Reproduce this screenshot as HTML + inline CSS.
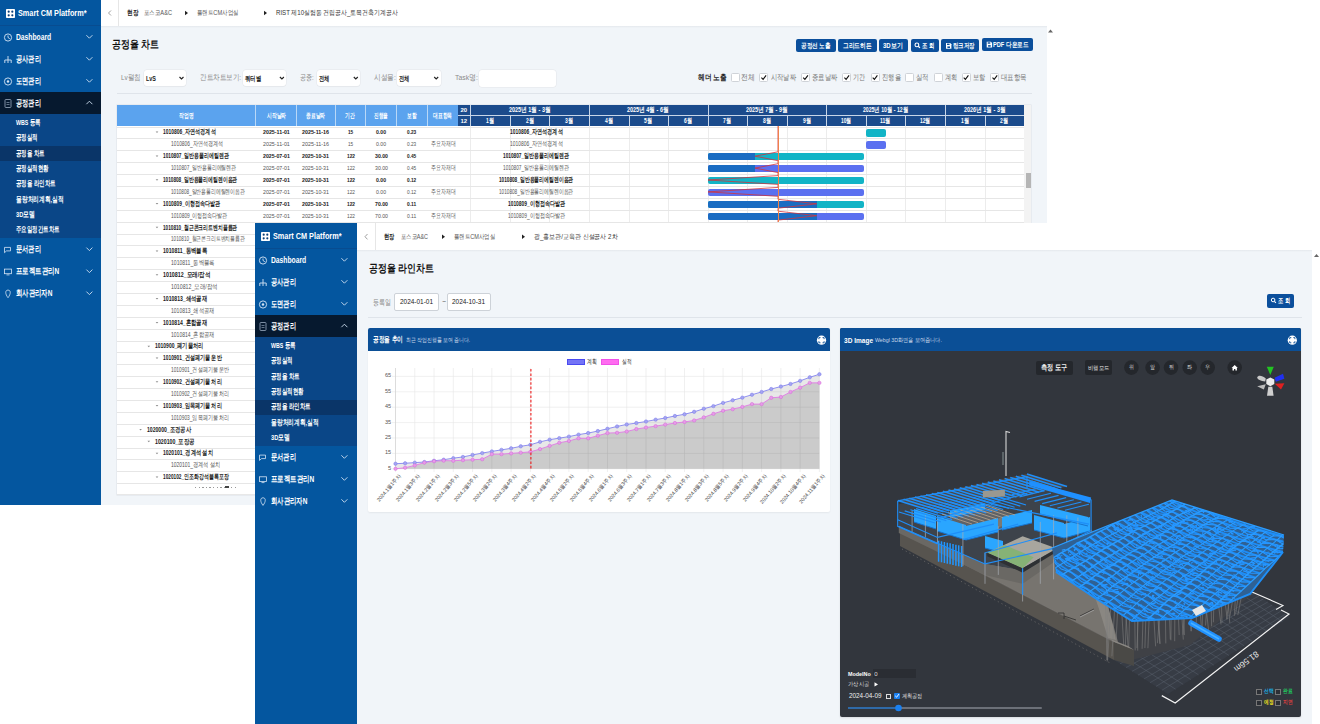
<!DOCTYPE html><html><head><meta charset="utf-8"><style>
*{margin:0;padding:0;box-sizing:border-box}
html,body{width:1320px;height:724px;overflow:hidden;background:#fff}
body{position:relative;font-family:"Liberation Sans",sans-serif;color:#222}
.a{position:absolute}
.t{position:absolute;white-space:nowrap;line-height:1;transform:translateY(-50%)}
svg{position:absolute;overflow:visible}
</style></head><body><div class="a" style="left:101px;top:26px;width:946px;height:479px;background:#f1f5f9"></div>
<div class="a" style="left:101px;top:0px;width:951px;height:26px;background:#fff"></div>
<div class="a" style="left:101px;top:26px;width:946px;height:1.5px;background:linear-gradient(#e4e8ed,#f1f5f9)"></div>
<svg style="left:0;top:0" width="1" height="1"><path d="M111,10.5 L108.5,13 L111,15.5" fill="none" stroke="#888" stroke-width="0.8"/></svg>
<div class="a" style="left:118px;top:0px;width:1px;height:26px;background:#e6e6e6"></div>
<div class="t" style="left:127.3px;top:13px;font-size:7.28px;font-weight:bold;color:#222;transform:translateY(-50%) scaleX(0.807);transform-origin:0 50%">현장</div>
<div class="t" style="left:144px;top:13px;font-size:7.28px;color:#555;transform:translateY(-50%) scaleX(0.779);transform-origin:0 50%">포스코A&amp;C</div>
<svg style="left:0;top:0" width="1" height="1"><path d="M185,10.8 L188,13 L185,15.2z" fill="#222"/></svg>
<div class="t" style="left:196.6px;top:13px;font-size:7.28px;color:#555;transform:translateY(-50%) scaleX(0.777);transform-origin:0 50%">플랜트CM사업실</div>
<svg style="left:0;top:0" width="1" height="1"><path d="M264,10.8 L267,13 L264,15.2z" fill="#222"/></svg>
<div class="t" style="left:276px;top:13px;font-size:7.28px;color:#333;transform:translateY(-50%) scaleX(0.840);transform-origin:0 50%">RIST 제10실험동 건립공사_토목건축기계공사</div>
<div class="t" style="left:111.8px;top:44.1px;font-size:10.75px;font-weight:bold;color:#111;transform:translateY(-50%) scaleX(0.807);transform-origin:0 50%">공정율 차트</div>
<div class="a" style="left:795.8px;top:39.2px;width:40.0px;height:12.799999999999997px;background:#0b4f9c;border-radius:2px"></div>
<div class="a" style="left:838.3px;top:39.2px;width:38.4px;height:12.799999999999997px;background:#0b4f9c;border-radius:2px"></div>
<div class="a" style="left:879px;top:39.2px;width:28.6px;height:12.799999999999997px;background:#0b4f9c;border-radius:2px"></div>
<div class="a" style="left:910.5px;top:39.2px;width:28.5px;height:12.799999999999997px;background:#0b4f9c;border-radius:2px"></div>
<div class="a" style="left:941.4px;top:39.2px;width:37.8px;height:12.799999999999997px;background:#0b4f9c;border-radius:2px"></div>
<div class="a" style="left:982.3px;top:37.9px;width:50.7px;height:13.100000000000001px;background:#0b4f9c;border-radius:2px"></div>
<div class="t" style="left:801px;top:45.8px;font-size:7.06px;font-weight:bold;color:#fff;transform:translateY(-50%) scaleX(0.801);transform-origin:0 50%">공정선 노출</div>
<div class="t" style="left:843px;top:45.8px;font-size:7.06px;font-weight:bold;color:#fff;transform:translateY(-50%) scaleX(0.809);transform-origin:0 50%">그리드히든</div>
<div class="t" style="left:883.4px;top:45.8px;font-size:7.06px;font-weight:bold;color:#fff;transform:translateY(-50%) scaleX(0.852);transform-origin:0 50%">3D보기</div>
<svg style="left:0;top:0" width="1" height="1"><circle cx="916.9" cy="44.9" r="1.9" fill="none" stroke="#fff" stroke-width="1.1"/><path d="M918.3,46.3 L919.9,47.9" stroke="#fff" stroke-width="1.3"/></svg>
<div class="t" style="left:921.5px;top:45.8px;font-size:7.06px;font-weight:bold;color:#fff;transform:translateY(-50%) scaleX(0.777);transform-origin:0 50%">조 회</div>
<svg style="left:0;top:0" width="1" height="1"><path d="M946,43 h4.2 l1.2,1.2 v4.6 h-5.4z" fill="#fff"/><rect x="947" y="43.6" width="2.6" height="1.4" fill="#0b4f9c"/><rect x="947.4" y="46.4" width="2.6" height="1.6" fill="#0b4f9c"/></svg>
<div class="t" style="left:952.5px;top:45.8px;font-size:7.06px;font-weight:bold;color:#fff;transform:translateY(-50%) scaleX(0.779);transform-origin:0 50%">링크저장</div>
<svg style="left:0;top:0" width="1" height="1"><path d="M986.7,41.7 h4.2 l1.2,1.2 v4.6 h-5.4z" fill="#fff"/><rect x="987.7" y="42.300000000000004" width="2.6" height="1.4" fill="#0b4f9c"/><rect x="988.1" y="45.1" width="2.6" height="1.6" fill="#0b4f9c"/></svg>
<div class="t" style="left:993px;top:44.5px;font-size:7.06px;font-weight:bold;color:#fff;transform:translateY(-50%) scaleX(0.803);transform-origin:0 50%">PDF 다운로드</div>
<div class="t" style="left:120.8px;top:78.2px;font-size:7.84px;color:#8a8a8a;transform:translateY(-50%) scaleX(0.815);transform-origin:0 50%">Lv펼침</div>
<div class="a" style="left:143.5px;top:70px;width:42.5px;height:16px;background:#fff;border-radius:3px;box-shadow:0 0 0 0.5px #e3e6ea,0 1px 1px rgba(0,0,0,0.04)"></div>
<div class="t" style="left:145.5px;top:78.5px;font-size:6.5px;color:#222;font-weight:bold;transform:translateY(-50%) scaleX(0.839);transform-origin:0 50%">LvS</div>
<svg style="left:0;top:0" width="1" height="1"><path d="M179.5,77 L181.5,79 L183.5,77" fill="none" stroke="#222" stroke-width="1.1"/></svg>
<div class="t" style="left:200px;top:78.2px;font-size:7.84px;color:#8a8a8a;transform:translateY(-50%) scaleX(0.817);transform-origin:0 50%">간트차트보기:</div>
<div class="a" style="left:243.2px;top:70px;width:43.19999999999999px;height:16px;background:#fff;border-radius:3px;box-shadow:0 0 0 0.5px #e3e6ea,0 1px 1px rgba(0,0,0,0.04)"></div>
<div class="t" style="left:245.2px;top:78.5px;font-size:7.28px;color:#222;font-weight:bold;transform:translateY(-50%) scaleX(0.771);transform-origin:0 50%">쿼터별</div>
<svg style="left:0;top:0" width="1" height="1"><path d="M279.9,77 L281.9,79 L283.9,77" fill="none" stroke="#222" stroke-width="1.1"/></svg>
<div class="t" style="left:300px;top:78.2px;font-size:7.84px;color:#8a8a8a;transform:translateY(-50%) scaleX(0.753);transform-origin:0 50%">공종:</div>
<div class="a" style="left:317px;top:70px;width:43.30000000000001px;height:16px;background:#fff;border-radius:3px;box-shadow:0 0 0 0.5px #e3e6ea,0 1px 1px rgba(0,0,0,0.04)"></div>
<div class="t" style="left:319px;top:78.5px;font-size:7.28px;color:#222;font-weight:bold;transform:translateY(-50%) scaleX(0.750);transform-origin:0 50%">전체</div>
<svg style="left:0;top:0" width="1" height="1"><path d="M353.8,77 L355.8,79 L357.8,77" fill="none" stroke="#222" stroke-width="1.1"/></svg>
<div class="t" style="left:374px;top:78.2px;font-size:7.84px;color:#8a8a8a;transform:translateY(-50%) scaleX(0.836);transform-origin:0 50%">시설물:</div>
<div class="a" style="left:397.3px;top:70px;width:43.39999999999998px;height:16px;background:#fff;border-radius:3px;box-shadow:0 0 0 0.5px #e3e6ea,0 1px 1px rgba(0,0,0,0.04)"></div>
<div class="t" style="left:399.3px;top:78.5px;font-size:7.28px;color:#222;font-weight:bold;transform:translateY(-50%) scaleX(0.750);transform-origin:0 50%">전체</div>
<svg style="left:0;top:0" width="1" height="1"><path d="M434.2,77 L436.2,79 L438.2,77" fill="none" stroke="#222" stroke-width="1.1"/></svg>
<div class="t" style="left:454.7px;top:78.2px;font-size:7.84px;color:#8a8a8a;transform:translateY(-50%) scaleX(0.875);transform-origin:0 50%">Task명:</div>
<div class="a" style="left:479.4px;top:69.5px;width:77px;height:17px;background:#fff;border-radius:3px;box-shadow:0 0 0 0.5px #e3e6ea"></div>
<div class="t" style="left:698px;top:77.8px;font-size:7.84px;font-weight:bold;color:#222;transform:translateY(-50%) scaleX(0.834);transform-origin:0 50%">헤더 노출</div>
<div class="a" style="left:731.4px;top:73px;width:9px;height:9px;background:#fff;border:0.6px solid #cfd3d8;border-radius:1.5px"></div>
<div class="t" style="left:741.2px;top:77.8px;font-size:7.62px;color:#777;transform:translateY(-50%) scaleX(0.856);transform-origin:0 50%">전체</div>
<div class="a" style="left:759.2px;top:73px;width:9px;height:9px;background:#fff;border:0.6px solid #cfd3d8;border-radius:1.5px"></div>
<svg style="left:0;top:0" width="1" height="1"><path d="M761.4000000000001,77.6 L763.1,79.3 L766.1,75.4" fill="none" stroke="#111" stroke-width="1.1"/></svg>
<div class="t" style="left:770.8px;top:77.8px;font-size:7.62px;color:#777;transform:translateY(-50%) scaleX(0.781);transform-origin:0 50%">시작날짜</div>
<div class="a" style="left:801px;top:73px;width:9px;height:9px;background:#fff;border:0.6px solid #cfd3d8;border-radius:1.5px"></div>
<svg style="left:0;top:0" width="1" height="1"><path d="M803.2,77.6 L804.9,79.3 L807.9,75.4" fill="none" stroke="#111" stroke-width="1.1"/></svg>
<div class="t" style="left:812px;top:77.8px;font-size:7.62px;color:#777;transform:translateY(-50%) scaleX(0.791);transform-origin:0 50%">종료날짜</div>
<div class="a" style="left:842.2px;top:73px;width:9px;height:9px;background:#fff;border:0.6px solid #cfd3d8;border-radius:1.5px"></div>
<svg style="left:0;top:0" width="1" height="1"><path d="M844.4000000000001,77.6 L846.1,79.3 L849.1,75.4" fill="none" stroke="#111" stroke-width="1.1"/></svg>
<div class="t" style="left:853.3px;top:77.8px;font-size:7.62px;color:#777;transform:translateY(-50%) scaleX(0.756);transform-origin:0 50%">기간</div>
<div class="a" style="left:870.5px;top:73px;width:9px;height:9px;background:#fff;border:0.6px solid #cfd3d8;border-radius:1.5px"></div>
<svg style="left:0;top:0" width="1" height="1"><path d="M872.7,77.6 L874.4,79.3 L877.4,75.4" fill="none" stroke="#111" stroke-width="1.1"/></svg>
<div class="t" style="left:881.6px;top:77.8px;font-size:7.62px;color:#777;transform:translateY(-50%) scaleX(0.783);transform-origin:0 50%">진행율</div>
<div class="a" style="left:905.3px;top:73px;width:9px;height:9px;background:#fff;border:0.6px solid #cfd3d8;border-radius:1.5px"></div>
<div class="t" style="left:916.4px;top:77.8px;font-size:7.62px;color:#777;transform:translateY(-50%) scaleX(0.806);transform-origin:0 50%">실적</div>
<div class="a" style="left:933.6px;top:73px;width:9px;height:9px;background:#fff;border:0.6px solid #cfd3d8;border-radius:1.5px"></div>
<div class="t" style="left:944.7px;top:77.8px;font-size:7.62px;color:#777;transform:translateY(-50%) scaleX(0.775);transform-origin:0 50%">계획</div>
<div class="a" style="left:961.5px;top:73px;width:9px;height:9px;background:#fff;border:0.6px solid #cfd3d8;border-radius:1.5px"></div>
<svg style="left:0;top:0" width="1" height="1"><path d="M963.7,77.6 L965.4,79.3 L968.4,75.4" fill="none" stroke="#111" stroke-width="1.1"/></svg>
<div class="t" style="left:973px;top:77.8px;font-size:7.62px;color:#777;transform:translateY(-50%) scaleX(0.775);transform-origin:0 50%">보할</div>
<div class="a" style="left:990.3px;top:73px;width:9px;height:9px;background:#fff;border:0.6px solid #cfd3d8;border-radius:1.5px"></div>
<svg style="left:0;top:0" width="1" height="1"><path d="M992.5,77.6 L994.1999999999999,79.3 L997.1999999999999,75.4" fill="none" stroke="#111" stroke-width="1.1"/></svg>
<div class="t" style="left:1000.9px;top:77.8px;font-size:7.62px;color:#777;transform:translateY(-50%) scaleX(0.803);transform-origin:0 50%">대표항목</div>
<div class="a" style="left:117px;top:93px;width:915px;height:1px;background:#dfe4ea"></div>
<div class="a" style="left:1047px;top:26px;width:8px;height:196px;background:#fff"></div>
<svg style="left:0;top:0" width="1" height="1"><path d="M1048,32.5 L1050.5,29.5 L1053,32.5z" fill="#666"/></svg>
<div class="a" style="left:117px;top:105px;width:914px;height:390px;background:#fff;box-shadow:0 0 0 0.5px #dde2e8"></div>
<div class="a" style="left:117px;top:105px;width:341px;height:21px;background:#5ba3ee"></div>
<div class="a" style="left:255.4px;top:105px;width:0.8px;height:21px;background:#b9d8f7"></div>
<div class="a" style="left:296.3px;top:105px;width:0.8px;height:21px;background:#b9d8f7"></div>
<div class="a" style="left:334.6px;top:105px;width:0.8px;height:21px;background:#b9d8f7"></div>
<div class="a" style="left:364.8px;top:105px;width:0.8px;height:21px;background:#b9d8f7"></div>
<div class="a" style="left:395.9px;top:105px;width:0.8px;height:21px;background:#b9d8f7"></div>
<div class="a" style="left:426.7px;top:105px;width:0.8px;height:21px;background:#b9d8f7"></div>
<div class="t" style="left:178.8px;top:115.8px;font-size:6.72px;color:#fff;font-weight:bold;transform:translateY(-50%) scaleX(0.686);transform-origin:0 50%">작업명</div>
<div class="t" style="left:266.5px;top:115.8px;font-size:6.72px;color:#fff;font-weight:bold;transform:translateY(-50%) scaleX(0.679);transform-origin:0 50%">시작날짜</div>
<div class="t" style="left:306.0px;top:115.8px;font-size:6.72px;color:#fff;font-weight:bold;transform:translateY(-50%) scaleX(0.679);transform-origin:0 50%">종료날짜</div>
<div class="t" style="left:345.2px;top:115.8px;font-size:6.72px;color:#fff;font-weight:bold;transform:translateY(-50%) scaleX(0.679);transform-origin:0 50%">기간</div>
<div class="t" style="left:373.5px;top:115.8px;font-size:6.72px;color:#fff;font-weight:bold;transform:translateY(-50%) scaleX(0.667);transform-origin:0 50%">진행율</div>
<div class="t" style="left:406.6px;top:115.8px;font-size:6.72px;color:#fff;font-weight:bold;transform:translateY(-50%) scaleX(0.679);transform-origin:0 50%">보할</div>
<div class="t" style="left:432.5px;top:115.8px;font-size:6.72px;color:#fff;font-weight:bold;transform:translateY(-50%) scaleX(0.679);transform-origin:0 50%">대표항목</div>
<div class="a" style="left:458px;top:105px;width:566px;height:21px;background:#1b4b8c"></div>
<div class="a" style="left:458px;top:115.4px;width:566px;height:0.8px;background:#c8d6e8"></div>
<div class="a" style="left:470.3px;top:105px;width:0.8px;height:21px;background:#c8d6e8"></div>
<div class="a" style="left:589.0px;top:105px;width:0.8px;height:21px;background:#c8d6e8"></div>
<div class="a" style="left:707.6px;top:105px;width:0.8px;height:21px;background:#c8d6e8"></div>
<div class="a" style="left:826.2px;top:105px;width:0.8px;height:21px;background:#c8d6e8"></div>
<div class="a" style="left:944.9px;top:105px;width:0.8px;height:21px;background:#c8d6e8"></div>
<div class="a" style="left:509.9px;top:115.4px;width:0.8px;height:10.6px;background:#c8d6e8"></div>
<div class="a" style="left:549.4px;top:115.4px;width:0.8px;height:10.6px;background:#c8d6e8"></div>
<div class="a" style="left:589.0px;top:115.4px;width:0.8px;height:10.6px;background:#c8d6e8"></div>
<div class="a" style="left:628.5px;top:115.4px;width:0.8px;height:10.6px;background:#c8d6e8"></div>
<div class="a" style="left:668.0px;top:115.4px;width:0.8px;height:10.6px;background:#c8d6e8"></div>
<div class="a" style="left:707.6px;top:115.4px;width:0.8px;height:10.6px;background:#c8d6e8"></div>
<div class="a" style="left:747.1px;top:115.4px;width:0.8px;height:10.6px;background:#c8d6e8"></div>
<div class="a" style="left:786.7px;top:115.4px;width:0.8px;height:10.6px;background:#c8d6e8"></div>
<div class="a" style="left:826.2px;top:115.4px;width:0.8px;height:10.6px;background:#c8d6e8"></div>
<div class="a" style="left:865.8px;top:115.4px;width:0.8px;height:10.6px;background:#c8d6e8"></div>
<div class="a" style="left:905.3px;top:115.4px;width:0.8px;height:10.6px;background:#c8d6e8"></div>
<div class="a" style="left:944.9px;top:115.4px;width:0.8px;height:10.6px;background:#c8d6e8"></div>
<div class="a" style="left:984.5px;top:115.4px;width:0.8px;height:10.6px;background:#c8d6e8"></div>
<div class="t" style="left:460.5px;top:110.3px;font-size:6px;color:#fff;font-weight:bold">20</div>
<div class="t" style="left:460.5px;top:121px;font-size:6px;color:#fff;font-weight:bold">12</div>
<div class="t" style="left:508.8px;top:110.3px;font-size:6.72px;color:#fff;font-weight:bold;transform:translateY(-50%) scaleX(0.813);transform-origin:0 50%">2025년 1월 - 3월</div>
<div class="t" style="left:627.4px;top:110.3px;font-size:6.72px;color:#fff;font-weight:bold;transform:translateY(-50%) scaleX(0.813);transform-origin:0 50%">2025년 4월 - 6월</div>
<div class="t" style="left:746.1px;top:110.3px;font-size:6.72px;color:#fff;font-weight:bold;transform:translateY(-50%) scaleX(0.813);transform-origin:0 50%">2025년 7월 - 9월</div>
<div class="t" style="left:863.1px;top:110.3px;font-size:6.72px;color:#fff;font-weight:bold;transform:translateY(-50%) scaleX(0.766);transform-origin:0 50%">2025년 10월 - 12월</div>
<div class="t" style="left:963.6px;top:110.3px;font-size:6.72px;color:#fff;font-weight:bold;transform:translateY(-50%) scaleX(0.813);transform-origin:0 50%">2026년 1월 - 3월</div>
<div class="t" style="left:486.1px;top:121px;font-size:6.72px;color:#fff;font-weight:bold;transform:translateY(-50%) scaleX(0.744);transform-origin:0 50%">1월</div>
<div class="t" style="left:525.6px;top:121px;font-size:6.72px;color:#fff;font-weight:bold;transform:translateY(-50%) scaleX(0.744);transform-origin:0 50%">2월</div>
<div class="t" style="left:565.2px;top:121px;font-size:6.72px;color:#fff;font-weight:bold;transform:translateY(-50%) scaleX(0.744);transform-origin:0 50%">3월</div>
<div class="t" style="left:604.7px;top:121px;font-size:6.72px;color:#fff;font-weight:bold;transform:translateY(-50%) scaleX(0.744);transform-origin:0 50%">4월</div>
<div class="t" style="left:644.3px;top:121px;font-size:6.72px;color:#fff;font-weight:bold;transform:translateY(-50%) scaleX(0.744);transform-origin:0 50%">5월</div>
<div class="t" style="left:683.8px;top:121px;font-size:6.72px;color:#fff;font-weight:bold;transform:translateY(-50%) scaleX(0.744);transform-origin:0 50%">6월</div>
<div class="t" style="left:723.4px;top:121px;font-size:6.72px;color:#fff;font-weight:bold;transform:translateY(-50%) scaleX(0.744);transform-origin:0 50%">7월</div>
<div class="t" style="left:762.9px;top:121px;font-size:6.72px;color:#fff;font-weight:bold;transform:translateY(-50%) scaleX(0.744);transform-origin:0 50%">8월</div>
<div class="t" style="left:802.5px;top:121px;font-size:6.72px;color:#fff;font-weight:bold;transform:translateY(-50%) scaleX(0.744);transform-origin:0 50%">9월</div>
<div class="t" style="left:840.8px;top:121px;font-size:6.72px;color:#fff;font-weight:bold;transform:translateY(-50%) scaleX(0.725);transform-origin:0 50%">10월</div>
<div class="t" style="left:880.3px;top:121px;font-size:6.72px;color:#fff;font-weight:bold;transform:translateY(-50%) scaleX(0.744);transform-origin:0 50%">11월</div>
<div class="t" style="left:919.9px;top:121px;font-size:6.72px;color:#fff;font-weight:bold;transform:translateY(-50%) scaleX(0.725);transform-origin:0 50%">12월</div>
<div class="t" style="left:960.7px;top:121px;font-size:6.72px;color:#fff;font-weight:bold;transform:translateY(-50%) scaleX(0.744);transform-origin:0 50%">1월</div>
<div class="t" style="left:1000.2px;top:121px;font-size:6.72px;color:#fff;font-weight:bold;transform:translateY(-50%) scaleX(0.744);transform-origin:0 50%">2월</div>
<div class="a" style="left:470.3px;top:126px;width:0.6px;height:96px;background:#ececec"></div>
<div class="a" style="left:509.9px;top:126px;width:0.6px;height:96px;background:#ececec"></div>
<div class="a" style="left:549.4px;top:126px;width:0.6px;height:96px;background:#ececec"></div>
<div class="a" style="left:589.0px;top:126px;width:0.6px;height:96px;background:#ececec"></div>
<div class="a" style="left:628.5px;top:126px;width:0.6px;height:96px;background:#ececec"></div>
<div class="a" style="left:668.0px;top:126px;width:0.6px;height:96px;background:#ececec"></div>
<div class="a" style="left:707.6px;top:126px;width:0.6px;height:96px;background:#ececec"></div>
<div class="a" style="left:747.1px;top:126px;width:0.6px;height:96px;background:#ececec"></div>
<div class="a" style="left:786.7px;top:126px;width:0.6px;height:96px;background:#ececec"></div>
<div class="a" style="left:826.2px;top:126px;width:0.6px;height:96px;background:#ececec"></div>
<div class="a" style="left:865.8px;top:126px;width:0.6px;height:96px;background:#ececec"></div>
<div class="a" style="left:905.3px;top:126px;width:0.6px;height:96px;background:#ececec"></div>
<div class="a" style="left:944.9px;top:126px;width:0.6px;height:96px;background:#ececec"></div>
<div class="a" style="left:984.5px;top:126px;width:0.6px;height:96px;background:#ececec"></div>
<div class="a" style="left:117px;top:126.5px;width:907px;height:0.7px;background:#e6e6e6"></div>
<div class="a" style="left:117px;top:138.39px;width:907px;height:0.7px;background:#e6e6e6"></div>
<div class="a" style="left:117px;top:150.28px;width:907px;height:0.7px;background:#e6e6e6"></div>
<div class="a" style="left:117px;top:162.17px;width:907px;height:0.7px;background:#e6e6e6"></div>
<div class="a" style="left:117px;top:174.06px;width:907px;height:0.7px;background:#e6e6e6"></div>
<div class="a" style="left:117px;top:185.95px;width:907px;height:0.7px;background:#e6e6e6"></div>
<div class="a" style="left:117px;top:197.84px;width:907px;height:0.7px;background:#e6e6e6"></div>
<div class="a" style="left:117px;top:209.73px;width:907px;height:0.7px;background:#e6e6e6"></div>
<div class="a" style="left:117px;top:221.62px;width:907px;height:0.7px;background:#e6e6e6"></div>
<div class="a" style="left:117px;top:233.51px;width:907px;height:0.7px;background:#e6e6e6"></div>
<div class="a" style="left:117px;top:245.4px;width:907px;height:0.7px;background:#e6e6e6"></div>
<div class="a" style="left:117px;top:257.29px;width:907px;height:0.7px;background:#e6e6e6"></div>
<div class="a" style="left:117px;top:269.18px;width:907px;height:0.7px;background:#e6e6e6"></div>
<div class="a" style="left:117px;top:281.07px;width:907px;height:0.7px;background:#e6e6e6"></div>
<div class="a" style="left:117px;top:292.96px;width:907px;height:0.7px;background:#e6e6e6"></div>
<div class="a" style="left:117px;top:304.85px;width:907px;height:0.7px;background:#e6e6e6"></div>
<div class="a" style="left:117px;top:316.74px;width:907px;height:0.7px;background:#e6e6e6"></div>
<div class="a" style="left:117px;top:328.63px;width:907px;height:0.7px;background:#e6e6e6"></div>
<div class="a" style="left:117px;top:340.52px;width:907px;height:0.7px;background:#e6e6e6"></div>
<div class="a" style="left:117px;top:352.41px;width:907px;height:0.7px;background:#e6e6e6"></div>
<div class="a" style="left:117px;top:364.3px;width:907px;height:0.7px;background:#e6e6e6"></div>
<div class="a" style="left:117px;top:376.19px;width:907px;height:0.7px;background:#e6e6e6"></div>
<div class="a" style="left:117px;top:388.08px;width:907px;height:0.7px;background:#e6e6e6"></div>
<div class="a" style="left:117px;top:399.97px;width:907px;height:0.7px;background:#e6e6e6"></div>
<div class="a" style="left:117px;top:411.86px;width:907px;height:0.7px;background:#e6e6e6"></div>
<div class="a" style="left:117px;top:423.75px;width:907px;height:0.7px;background:#e6e6e6"></div>
<div class="a" style="left:117px;top:435.64px;width:907px;height:0.7px;background:#e6e6e6"></div>
<div class="a" style="left:117px;top:447.53px;width:907px;height:0.7px;background:#e6e6e6"></div>
<div class="a" style="left:117px;top:459.42px;width:907px;height:0.7px;background:#e6e6e6"></div>
<div class="a" style="left:117px;top:471.31px;width:907px;height:0.7px;background:#e6e6e6"></div>
<div class="a" style="left:117px;top:483.2px;width:907px;height:0.7px;background:#e6e6e6"></div>
<svg style="left:0;top:0" width="1" height="1"><path d="M155.7,131.6 h2.6 l-1.3,1.5z" fill="#888"/></svg>
<div class="t" style="left:163.3px;top:132.44px;font-size:6.72px;font-weight:bold;color:#1a1a1a;transform:translateY(-50%) scaleX(0.732);transform-origin:0 50%">1010806_자연석경계석</div>
<div class="t" style="left:262.6px;top:132.44px;font-size:6px;color:#1a1a1a;font-weight:bold;transform:translateY(-50%) scaleX(0.882);transform-origin:0 50%">2025-11-01</div>
<div class="t" style="left:302.4px;top:132.44px;font-size:6px;color:#1a1a1a;font-weight:bold;transform:translateY(-50%) scaleX(0.889);transform-origin:0 50%">2025-11-16</div>
<div class="t" style="left:348.0px;top:132.44px;font-size:6px;color:#1a1a1a;font-weight:bold;transform:translateY(-50%) scaleX(0.778);transform-origin:0 50%">15</div>
<div class="t" style="left:376.3px;top:132.44px;font-size:6px;color:#1a1a1a;font-weight:bold;transform:translateY(-50%) scaleX(0.856);transform-origin:0 50%">0.00</div>
<div class="t" style="left:407.4px;top:132.44px;font-size:6px;color:#1a1a1a;font-weight:bold;transform:translateY(-50%) scaleX(0.787);transform-origin:0 50%">0.23</div>
<div class="t" style="left:509.9px;top:132.44px;font-size:6.72px;color:#1a1a1a;font-weight:bold;transform:translateY(-50%) scaleX(0.732);transform-origin:0 50%">1010806_자연석경계석</div>
<div class="t" style="left:171.1px;top:144.34px;font-size:6.72px;color:#555;transform:translateY(-50%) scaleX(0.725);transform-origin:0 50%">1010806_자연석경계석</div>
<div class="t" style="left:262.6px;top:144.34px;font-size:6px;color:#1a1a1a;color:#555;transform:translateY(-50%) scaleX(0.886);transform-origin:0 50%">2025-11-01</div>
<div class="t" style="left:302.4px;top:144.34px;font-size:6px;color:#1a1a1a;color:#555;transform:translateY(-50%) scaleX(0.893);transform-origin:0 50%">2025-11-16</div>
<div class="t" style="left:348.0px;top:144.34px;font-size:6px;color:#1a1a1a;color:#555;transform:translateY(-50%) scaleX(0.778);transform-origin:0 50%">15</div>
<div class="t" style="left:376.3px;top:144.34px;font-size:6px;color:#1a1a1a;color:#555;transform:translateY(-50%) scaleX(0.856);transform-origin:0 50%">0.00</div>
<div class="t" style="left:407.4px;top:144.34px;font-size:6px;color:#1a1a1a;color:#555;transform:translateY(-50%) scaleX(0.787);transform-origin:0 50%">0.23</div>
<div class="t" style="left:431px;top:144.34px;font-size:6.72px;color:#666;transform:translateY(-50%) scaleX(0.700);transform-origin:0 50%">주요자재대</div>
<div class="t" style="left:509.9px;top:144.34px;font-size:6.72px;color:#1a1a1a;color:#555;transform:translateY(-50%) scaleX(0.732);transform-origin:0 50%">1010806_자연석경계석</div>
<svg style="left:0;top:0" width="1" height="1"><path d="M155.7,155.4 h2.6 l-1.3,1.5z" fill="#888"/></svg>
<div class="t" style="left:163.3px;top:156.22px;font-size:6.72px;font-weight:bold;color:#1a1a1a;transform:translateY(-50%) scaleX(0.707);transform-origin:0 50%">1010807_일반용폴리에틸렌관</div>
<div class="t" style="left:262.6px;top:156.22px;font-size:6px;color:#1a1a1a;font-weight:bold;transform:translateY(-50%) scaleX(0.873);transform-origin:0 50%">2025-07-01</div>
<div class="t" style="left:302.4px;top:156.22px;font-size:6px;color:#1a1a1a;font-weight:bold;transform:translateY(-50%) scaleX(0.879);transform-origin:0 50%">2025-10-31</div>
<div class="t" style="left:346.6px;top:156.22px;font-size:6px;color:#1a1a1a;font-weight:bold;transform:translateY(-50%) scaleX(0.799);transform-origin:0 50%">122</div>
<div class="t" style="left:374.8px;top:156.22px;font-size:6px;color:#1a1a1a;font-weight:bold;transform:translateY(-50%) scaleX(0.866);transform-origin:0 50%">30.00</div>
<div class="t" style="left:407.4px;top:156.22px;font-size:6px;color:#1a1a1a;font-weight:bold;transform:translateY(-50%) scaleX(0.787);transform-origin:0 50%">0.45</div>
<div class="t" style="left:503.4px;top:156.22px;font-size:6.72px;color:#1a1a1a;font-weight:bold;transform:translateY(-50%) scaleX(0.707);transform-origin:0 50%">1010807_일반용폴리에틸렌관</div>
<div class="t" style="left:171.1px;top:168.12px;font-size:6.72px;color:#555;transform:translateY(-50%) scaleX(0.702);transform-origin:0 50%">1010807_일반용폴리에틸렌관</div>
<div class="t" style="left:262.6px;top:168.12px;font-size:6px;color:#1a1a1a;color:#555;transform:translateY(-50%) scaleX(0.873);transform-origin:0 50%">2025-07-01</div>
<div class="t" style="left:302.4px;top:168.12px;font-size:6px;color:#1a1a1a;color:#555;transform:translateY(-50%) scaleX(0.879);transform-origin:0 50%">2025-10-31</div>
<div class="t" style="left:346.6px;top:168.12px;font-size:6px;color:#1a1a1a;color:#555;transform:translateY(-50%) scaleX(0.799);transform-origin:0 50%">122</div>
<div class="t" style="left:374.8px;top:168.12px;font-size:6px;color:#1a1a1a;color:#555;transform:translateY(-50%) scaleX(0.866);transform-origin:0 50%">30.00</div>
<div class="t" style="left:407.4px;top:168.12px;font-size:6px;color:#1a1a1a;color:#555;transform:translateY(-50%) scaleX(0.787);transform-origin:0 50%">0.45</div>
<div class="t" style="left:431px;top:168.12px;font-size:6.72px;color:#666;transform:translateY(-50%) scaleX(0.700);transform-origin:0 50%">주요자재대</div>
<div class="t" style="left:503.4px;top:168.12px;font-size:6.72px;color:#1a1a1a;color:#555;transform:translateY(-50%) scaleX(0.707);transform-origin:0 50%">1010807_일반용폴리에틸렌관</div>
<svg style="left:0;top:0" width="1" height="1"><path d="M155.7,179.2 h2.6 l-1.3,1.5z" fill="#888"/></svg>
<div class="t" style="left:163.3px;top:180.0px;font-size:6.72px;font-weight:bold;color:#1a1a1a;transform:translateY(-50%) scaleX(0.695);transform-origin:0 50%">1010808_일반용폴리에틸렌이음관</div>
<div class="t" style="left:262.6px;top:180.0px;font-size:6px;color:#1a1a1a;font-weight:bold;transform:translateY(-50%) scaleX(0.873);transform-origin:0 50%">2025-07-01</div>
<div class="t" style="left:302.4px;top:180.0px;font-size:6px;color:#1a1a1a;font-weight:bold;transform:translateY(-50%) scaleX(0.879);transform-origin:0 50%">2025-10-31</div>
<div class="t" style="left:346.6px;top:180.0px;font-size:6px;color:#1a1a1a;font-weight:bold;transform:translateY(-50%) scaleX(0.799);transform-origin:0 50%">122</div>
<div class="t" style="left:376.3px;top:180.0px;font-size:6px;color:#1a1a1a;font-weight:bold;transform:translateY(-50%) scaleX(0.856);transform-origin:0 50%">0.00</div>
<div class="t" style="left:407.4px;top:180.0px;font-size:6px;color:#1a1a1a;font-weight:bold;transform:translateY(-50%) scaleX(0.787);transform-origin:0 50%">0.12</div>
<div class="t" style="left:499.1px;top:180.0px;font-size:6.72px;color:#1a1a1a;font-weight:bold;transform:translateY(-50%) scaleX(0.695);transform-origin:0 50%">1010808_일반용폴리에틸렌이음관</div>
<div class="t" style="left:171.1px;top:191.9px;font-size:6.72px;color:#555;transform:translateY(-50%) scaleX(0.690);transform-origin:0 50%">1010808_일반용폴리에틸렌이음관</div>
<div class="t" style="left:262.6px;top:191.9px;font-size:6px;color:#1a1a1a;color:#555;transform:translateY(-50%) scaleX(0.873);transform-origin:0 50%">2025-07-01</div>
<div class="t" style="left:302.4px;top:191.9px;font-size:6px;color:#1a1a1a;color:#555;transform:translateY(-50%) scaleX(0.879);transform-origin:0 50%">2025-10-31</div>
<div class="t" style="left:346.6px;top:191.9px;font-size:6px;color:#1a1a1a;color:#555;transform:translateY(-50%) scaleX(0.799);transform-origin:0 50%">122</div>
<div class="t" style="left:376.3px;top:191.9px;font-size:6px;color:#1a1a1a;color:#555;transform:translateY(-50%) scaleX(0.856);transform-origin:0 50%">0.00</div>
<div class="t" style="left:407.4px;top:191.9px;font-size:6px;color:#1a1a1a;color:#555;transform:translateY(-50%) scaleX(0.787);transform-origin:0 50%">0.12</div>
<div class="t" style="left:431px;top:191.9px;font-size:6.72px;color:#666;transform:translateY(-50%) scaleX(0.700);transform-origin:0 50%">주요자재대</div>
<div class="t" style="left:499.1px;top:191.9px;font-size:6.72px;color:#1a1a1a;color:#555;transform:translateY(-50%) scaleX(0.695);transform-origin:0 50%">1010808_일반용폴리에틸렌이음관</div>
<svg style="left:0;top:0" width="1" height="1"><path d="M155.7,203.0 h2.6 l-1.3,1.5z" fill="#888"/></svg>
<div class="t" style="left:163.3px;top:203.78px;font-size:6.72px;font-weight:bold;color:#1a1a1a;transform:translateY(-50%) scaleX(0.722);transform-origin:0 50%">1010809_이형접속다발관</div>
<div class="t" style="left:262.6px;top:203.78px;font-size:6px;color:#1a1a1a;font-weight:bold;transform:translateY(-50%) scaleX(0.873);transform-origin:0 50%">2025-07-01</div>
<div class="t" style="left:302.4px;top:203.78px;font-size:6px;color:#1a1a1a;font-weight:bold;transform:translateY(-50%) scaleX(0.879);transform-origin:0 50%">2025-10-31</div>
<div class="t" style="left:346.6px;top:203.78px;font-size:6px;color:#1a1a1a;font-weight:bold;transform:translateY(-50%) scaleX(0.799);transform-origin:0 50%">122</div>
<div class="t" style="left:374.8px;top:203.78px;font-size:6px;color:#1a1a1a;font-weight:bold;transform:translateY(-50%) scaleX(0.866);transform-origin:0 50%">70.00</div>
<div class="t" style="left:407.4px;top:203.78px;font-size:6px;color:#1a1a1a;font-weight:bold;transform:translateY(-50%) scaleX(0.810);transform-origin:0 50%">0.11</div>
<div class="t" style="left:507.7px;top:203.78px;font-size:6.72px;color:#1a1a1a;font-weight:bold;transform:translateY(-50%) scaleX(0.722);transform-origin:0 50%">1010809_이형접속다발관</div>
<div class="t" style="left:171.1px;top:215.68px;font-size:6.72px;color:#555;transform:translateY(-50%) scaleX(0.716);transform-origin:0 50%">1010809_이형접속다발관</div>
<div class="t" style="left:262.6px;top:215.68px;font-size:6px;color:#1a1a1a;color:#555;transform:translateY(-50%) scaleX(0.873);transform-origin:0 50%">2025-07-01</div>
<div class="t" style="left:302.4px;top:215.68px;font-size:6px;color:#1a1a1a;color:#555;transform:translateY(-50%) scaleX(0.879);transform-origin:0 50%">2025-10-31</div>
<div class="t" style="left:346.6px;top:215.68px;font-size:6px;color:#1a1a1a;color:#555;transform:translateY(-50%) scaleX(0.799);transform-origin:0 50%">122</div>
<div class="t" style="left:374.8px;top:215.68px;font-size:6px;color:#1a1a1a;color:#555;transform:translateY(-50%) scaleX(0.866);transform-origin:0 50%">70.00</div>
<div class="t" style="left:407.4px;top:215.68px;font-size:6px;color:#1a1a1a;color:#555;transform:translateY(-50%) scaleX(0.819);transform-origin:0 50%">0.11</div>
<div class="t" style="left:431px;top:215.68px;font-size:6.72px;color:#666;transform:translateY(-50%) scaleX(0.700);transform-origin:0 50%">주요자재대</div>
<div class="t" style="left:507.7px;top:215.68px;font-size:6.72px;color:#1a1a1a;color:#555;transform:translateY(-50%) scaleX(0.722);transform-origin:0 50%">1010809_이형접속다발관</div>
<svg style="left:0;top:0" width="1" height="1"><path d="M155.7,226.8 h2.6 l-1.3,1.5z" fill="#888"/></svg>
<div class="t" style="left:163.3px;top:227.56px;font-size:6.72px;font-weight:bold;color:#1a1a1a;transform:translateY(-50%) scaleX(0.695);transform-origin:0 50%">1010810_철근콘크리트벤치플륨관</div>
<div class="t" style="left:171.1px;top:239.46px;font-size:6.72px;color:#555;transform:translateY(-50%) scaleX(0.690);transform-origin:0 50%">1010810_철근콘크리트벤치플륨관</div>
<svg style="left:0;top:0" width="1" height="1"><path d="M155.7,250.5 h2.6 l-1.3,1.5z" fill="#888"/></svg>
<div class="t" style="left:163.3px;top:251.34px;font-size:6.72px;font-weight:bold;color:#1a1a1a;transform:translateY(-50%) scaleX(0.763);transform-origin:0 50%">1010811_동벽블록</div>
<div class="t" style="left:171.1px;top:263.24px;font-size:6.72px;color:#555;transform:translateY(-50%) scaleX(0.756);transform-origin:0 50%">1010811_동벽블록</div>
<svg style="left:0;top:0" width="1" height="1"><path d="M155.7,274.3 h2.6 l-1.3,1.5z" fill="#888"/></svg>
<div class="t" style="left:163.3px;top:275.12px;font-size:6.72px;font-weight:bold;color:#1a1a1a;transform:translateY(-50%) scaleX(0.790);transform-origin:0 50%">1010812_모래/잡석</div>
<div class="t" style="left:171.1px;top:287.01px;font-size:6.72px;color:#555;transform:translateY(-50%) scaleX(0.781);transform-origin:0 50%">1010812_모래/잡석</div>
<svg style="left:0;top:0" width="1" height="1"><path d="M155.7,298.1 h2.6 l-1.3,1.5z" fill="#888"/></svg>
<div class="t" style="left:163.3px;top:298.9px;font-size:6.72px;font-weight:bold;color:#1a1a1a;transform:translateY(-50%) scaleX(0.758);transform-origin:0 50%">1010813_쇄석골재</div>
<div class="t" style="left:171.1px;top:310.8px;font-size:6.72px;color:#555;transform:translateY(-50%) scaleX(0.749);transform-origin:0 50%">1010813_쇄석골재</div>
<svg style="left:0;top:0" width="1" height="1"><path d="M155.7,321.9 h2.6 l-1.3,1.5z" fill="#888"/></svg>
<div class="t" style="left:163.3px;top:322.69px;font-size:6.72px;font-weight:bold;color:#1a1a1a;transform:translateY(-50%) scaleX(0.758);transform-origin:0 50%">1010814_혼합골재</div>
<div class="t" style="left:171.1px;top:334.58px;font-size:6.72px;color:#555;transform:translateY(-50%) scaleX(0.749);transform-origin:0 50%">1010814_혼합골재</div>
<svg style="left:0;top:0" width="1" height="1"><path d="M147.5,345.7 h2.6 l-1.3,1.5z" fill="#888"/></svg>
<div class="t" style="left:155.1px;top:346.47px;font-size:6.72px;font-weight:bold;color:#1a1a1a;transform:translateY(-50%) scaleX(0.744);transform-origin:0 50%">1010900_폐기물처리</div>
<svg style="left:0;top:0" width="1" height="1"><path d="M155.7,357.6 h2.6 l-1.3,1.5z" fill="#888"/></svg>
<div class="t" style="left:163.3px;top:358.36px;font-size:6.72px;font-weight:bold;color:#1a1a1a;transform:translateY(-50%) scaleX(0.726);transform-origin:0 50%">1010901_건설폐기물 운반</div>
<div class="t" style="left:171.1px;top:370.25px;font-size:6.72px;color:#555;transform:translateY(-50%) scaleX(0.719);transform-origin:0 50%">1010901_건설폐기물 운반</div>
<svg style="left:0;top:0" width="1" height="1"><path d="M155.7,381.3 h2.6 l-1.3,1.5z" fill="#888"/></svg>
<div class="t" style="left:163.3px;top:382.13px;font-size:6.72px;font-weight:bold;color:#1a1a1a;transform:translateY(-50%) scaleX(0.726);transform-origin:0 50%">1010902_건설폐기물 처리</div>
<div class="t" style="left:171.1px;top:394.03px;font-size:6.72px;color:#555;transform:translateY(-50%) scaleX(0.719);transform-origin:0 50%">1010902_건설폐기물 처리</div>
<svg style="left:0;top:0" width="1" height="1"><path d="M155.7,405.1 h2.6 l-1.3,1.5z" fill="#888"/></svg>
<div class="t" style="left:163.3px;top:405.92px;font-size:6.72px;font-weight:bold;color:#1a1a1a;transform:translateY(-50%) scaleX(0.726);transform-origin:0 50%">1010903_임목폐기물 처리</div>
<div class="t" style="left:171.1px;top:417.81px;font-size:6.72px;color:#555;transform:translateY(-50%) scaleX(0.719);transform-origin:0 50%">1010903_임목폐기물 처리</div>
<svg style="left:0;top:0" width="1" height="1"><path d="M139.3,428.9 h2.6 l-1.3,1.5z" fill="#888"/></svg>
<div class="t" style="left:146.9px;top:429.69px;font-size:6.72px;font-weight:bold;color:#1a1a1a;transform:translateY(-50%) scaleX(0.758);transform-origin:0 50%">1020000_조경공사</div>
<svg style="left:0;top:0" width="1" height="1"><path d="M147.5,440.8 h2.6 l-1.3,1.5z" fill="#888"/></svg>
<div class="t" style="left:155.1px;top:441.59px;font-size:6.72px;font-weight:bold;color:#1a1a1a;transform:translateY(-50%) scaleX(0.778);transform-origin:0 50%">1020100_포장공</div>
<svg style="left:0;top:0" width="1" height="1"><path d="M155.7,452.7 h2.6 l-1.3,1.5z" fill="#888"/></svg>
<div class="t" style="left:163.3px;top:453.48px;font-size:6.72px;font-weight:bold;color:#1a1a1a;transform:translateY(-50%) scaleX(0.747);transform-origin:0 50%">1020101_경계석 설치</div>
<div class="t" style="left:171.1px;top:465.37px;font-size:6.72px;color:#555;transform:translateY(-50%) scaleX(0.740);transform-origin:0 50%">1020101_경계석 설치</div>
<svg style="left:0;top:0" width="1" height="1"><path d="M155.7,476.4 h2.6 l-1.3,1.5z" fill="#888"/></svg>
<div class="t" style="left:163.3px;top:477.25px;font-size:6.72px;font-weight:bold;color:#1a1a1a;transform:translateY(-50%) scaleX(0.707);transform-origin:0 50%">1020102_인조화강석블록포장</div>
<div class="a" style="left:866.3px;top:129.4px;width:19.3px;height:7.3px;background:#12b4c6;border-radius:2px;overflow:hidden"></div>
<div class="a" style="left:866.3px;top:141.3px;width:19.3px;height:7.3px;background:#5b70f0;border-radius:2px;overflow:hidden"></div>
<div class="a" style="left:708px;top:153.2px;width:156.4px;height:7.3px;background:#12b4c6;border-radius:2px;overflow:hidden"><div class="a" style="left:0;top:0;width:47.0px;height:100%;background:#1a6cc2"></div></div>
<div class="a" style="left:708px;top:165.1px;width:156.4px;height:7.3px;background:#5b70f0;border-radius:2px;overflow:hidden"><div class="a" style="left:0;top:0;width:47.0px;height:100%;background:#1a6cc2"></div></div>
<div class="a" style="left:708px;top:177.0px;width:156.4px;height:7.3px;background:#12b4c6;border-radius:2px;overflow:hidden"></div>
<div class="a" style="left:708px;top:188.8px;width:156.4px;height:7.3px;background:#5b70f0;border-radius:2px;overflow:hidden"></div>
<div class="a" style="left:708px;top:200.7px;width:156.4px;height:7.3px;background:#12b4c6;border-radius:2px;overflow:hidden"><div class="a" style="left:0;top:0;width:108.7px;height:100%;background:#1a6cc2"></div></div>
<div class="a" style="left:708px;top:212.6px;width:156.4px;height:7.3px;background:#5b70f0;border-radius:2px;overflow:hidden"><div class="a" style="left:0;top:0;width:108.7px;height:100%;background:#1a6cc2"></div></div>
<svg style="left:0;top:0" width="1" height="1"><path d="M778.0,126.0 L778.0,151.8 L755.0,156.2 L778.0,160.7 L778.0,163.7 L755.0,168.1 L778.0,172.6 L778.0,175.6 L708.0,180.0 L778.0,184.4 L778.0,187.4 L708.0,191.9 L778.0,196.3 L778.0,199.3 L816.7,203.8 L778.0,208.2 L778.0,211.2 L816.7,215.7 L778.0,220.1 L778.0,222.0" fill="none" stroke="#d0343c" stroke-width="0.8"/></svg>
<div class="a" style="left:777.6px;top:126px;width:1px;height:96px;background:#f0824a"></div>
<div class="a" style="left:1024px;top:105px;width:7px;height:390px;background:#f3f3f3"></div>
<div class="a" style="left:1025.5px;top:173px;width:5px;height:15px;background:#b5b5b5"></div>
<div class="a" style="left:117px;top:484px;width:907px;height:10px;background:#fff"></div>
<div class="a" style="left:195.0px;top:486.5px;width:1.4px;height:1.2px;background:#999"></div>
<div class="a" style="left:198.6px;top:486.5px;width:1.4px;height:1.2px;background:#999"></div>
<div class="a" style="left:202.2px;top:486.5px;width:1.4px;height:1.2px;background:#999"></div>
<div class="a" style="left:205.8px;top:486.5px;width:1.4px;height:1.2px;background:#999"></div>
<div class="a" style="left:209.4px;top:486.5px;width:1.4px;height:1.2px;background:#999"></div>
<div class="a" style="left:213.0px;top:486.5px;width:1.4px;height:1.2px;background:#999"></div>
<div class="a" style="left:216.6px;top:486.5px;width:1.4px;height:1.2px;background:#999"></div>
<div class="a" style="left:220.2px;top:486.5px;width:1.4px;height:1.2px;background:#999"></div>
<div class="a" style="left:223.8px;top:486.5px;width:1.4px;height:1.2px;background:#999"></div>
<div class="a" style="left:227.4px;top:486.5px;width:1.4px;height:1.2px;background:#999"></div>
<div class="a" style="left:231.0px;top:486.5px;width:1.4px;height:1.2px;background:#999"></div>
<div class="a" style="left:234.6px;top:486.5px;width:1.4px;height:1.2px;background:#999"></div>
<div class="a" style="left:225px;top:486px;width:4px;height:2px;background:#444"></div>
<div class="a" style="left:117px;top:493.5px;width:907px;height:1.5px;background:#e8e8e8"></div>
<div class="a" style="left:0px;top:0px;width:101px;height:505px;background:#04569f"></div>
<div class="a" style="left:0px;top:25px;width:101px;height:1px;background:#084c90"></div>
<svg style="left:5.6px;top:8.7px" width="9" height="9"><rect x="0" y="0" width="9" height="9" rx="0.8" fill="#fff"/><circle cx="2.6999999999999997" cy="2.6999999999999997" r="1.08" fill="#0a3f78"/><circle cx="6.3" cy="2.6999999999999997" r="1.08" fill="#0a3f78"/><circle cx="2.6999999999999997" cy="6.3" r="1.08" fill="#0a3f78"/><circle cx="6.3" cy="6.3" r="1.08" fill="#0a3f78"/></svg>
<div class="t" style="left:17.8px;top:12.8px;color:#fff;font-size:8.4px;font-weight:bold;transform:translateY(-50%) scaleX(0.871);transform-origin:0 50%">Smart CM Platform*</div>
<div class="t" style="left:16px;top:37.5px;color:#fff;font-size:8.2px;font-weight:bold;transform:translateY(-50%) scaleX(0.823);transform-origin:0 50%">Dashboard</div>
<svg style="left:0;top:0" width="1" height="1"><circle cx="8" cy="37.5" r="3.6" fill="none" stroke="#d7e5f5" stroke-width="0.9"/><path d="M8,35.5 L8,37.5 L9.8,38.7" fill="none" stroke="#d7e5f5" stroke-width="0.9"/></svg>
<svg style="left:0;top:0" width="1" height="1"><path d="M86.4,35.2 L89.4,38.2 L92.4,35.2" fill="none" stroke="#cfe0f2" stroke-width="0.9"/></svg>
<div class="t" style="left:16px;top:59.5px;color:#fff;font-size:9.18px;font-weight:bold;transform:translateY(-50%) scaleX(0.694);transform-origin:0 50%">공사관리</div>
<svg style="left:0;top:0" width="1" height="1"><path d="M8,56.0 L8,60.5 M4.8,63.0 L4.8,60.0 L11.2,60.0 L11.2,63.0 M8,60.5 L8,63.0" fill="none" stroke="#d7e5f5" stroke-width="0.9"/></svg>
<svg style="left:0;top:0" width="1" height="1"><path d="M86.4,57.2 L89.4,60.2 L92.4,57.2" fill="none" stroke="#cfe0f2" stroke-width="0.9"/></svg>
<div class="t" style="left:16px;top:81.5px;color:#fff;font-size:9.18px;font-weight:bold;transform:translateY(-50%) scaleX(0.694);transform-origin:0 50%">도면관리</div>
<svg style="left:0;top:0" width="1" height="1"><circle cx="8" cy="81.5" r="3.6" fill="none" stroke="#d7e5f5" stroke-width="0.9"/><circle cx="8" cy="81.5" r="1.2" fill="#d7e5f5"/></svg>
<svg style="left:0;top:0" width="1" height="1"><path d="M86.4,79.2 L89.4,82.2 L92.4,79.2" fill="none" stroke="#cfe0f2" stroke-width="0.9"/></svg>
<div class="a" style="left:0px;top:92px;width:101px;height:22px;background:#06192f"></div>
<div class="t" style="left:16px;top:103.5px;color:#fff;font-size:9.18px;font-weight:bold;transform:translateY(-50%) scaleX(0.694);transform-origin:0 50%">공정관리</div>
<svg style="left:0;top:0" width="1" height="1"><rect x="5" y="99.5" width="6" height="8" rx="0.8" fill="none" stroke="#8a9bb0" stroke-width="0.9"/><path d="M6.5,102.5 h3 M6.5,104.5 h3" stroke="#8a9bb0" stroke-width="0.7"/></svg>
<svg style="left:0;top:0" width="1" height="1"><path d="M86.4,104.2 L89.4,101.2 L92.4,104.2" fill="none" stroke="#cfe0f2" stroke-width="0.9"/></svg>
<div class="a" style="left:0px;top:114px;width:101px;height:124.4px;background:#0a4687"></div>
<div class="t" style="left:15.8px;top:123px;color:#fff;font-size:7.84px;font-weight:bold;transform:translateY(-50%) scaleX(0.675);transform-origin:0 50%">WBS 등록</div>
<div class="t" style="left:15.8px;top:138.3px;color:#fff;font-size:7.84px;font-weight:bold;transform:translateY(-50%) scaleX(0.681);transform-origin:0 50%">공정실적</div>
<div class="a" style="left:0px;top:146.1px;width:101px;height:15.3px;background:#0a3568"></div>
<div class="t" style="left:15.8px;top:153.60000000000002px;color:#fff;font-size:7.84px;font-weight:bold;transform:translateY(-50%) scaleX(0.685);transform-origin:0 50%">공정율 차트</div>
<div class="t" style="left:15.8px;top:168.90000000000003px;color:#fff;font-size:7.84px;font-weight:bold;transform:translateY(-50%) scaleX(0.681);transform-origin:0 50%">공정실적현황</div>
<div class="t" style="left:15.8px;top:184.20000000000005px;color:#fff;font-size:7.84px;font-weight:bold;transform:translateY(-50%) scaleX(0.686);transform-origin:0 50%">공정율 라인차트</div>
<div class="t" style="left:15.8px;top:199.50000000000006px;color:#fff;font-size:7.84px;font-weight:bold;transform:translateY(-50%) scaleX(0.719);transform-origin:0 50%">물량처리계획,실적</div>
<div class="t" style="left:15.8px;top:214.80000000000007px;color:#fff;font-size:7.84px;font-weight:bold;transform:translateY(-50%) scaleX(0.726);transform-origin:0 50%">3D모델</div>
<div class="t" style="left:15.8px;top:230.10000000000008px;color:#fff;font-size:7.84px;font-weight:bold;transform:translateY(-50%) scaleX(0.681);transform-origin:0 50%">주요일정간트차트</div>
<div class="t" style="left:16px;top:249.9px;color:#fff;font-size:9.18px;font-weight:bold;transform:translateY(-50%) scaleX(0.694);transform-origin:0 50%">문서관리</div>
<svg style="left:0;top:0" width="1" height="1"><path d="M4.5,247.4 h6 v3.5 h-4 l-2,1.8 z" fill="none" stroke="#d7e5f5" stroke-width="0.8"/></svg>
<svg style="left:0;top:0" width="1" height="1"><path d="M86.4,247.6 L89.4,250.6 L92.4,247.6" fill="none" stroke="#cfe0f2" stroke-width="0.9"/></svg>
<div class="t" style="left:16px;top:271.9px;color:#fff;font-size:9.18px;font-weight:bold;transform:translateY(-50%) scaleX(0.713);transform-origin:0 50%">프로젝트관리N</div>
<svg style="left:0;top:0" width="1" height="1"><rect x="4.5" y="269.09999999999997" width="7" height="4.6" fill="none" stroke="#d7e5f5" stroke-width="0.8"/><path d="M6.5,274.9 h3" stroke="#d7e5f5" stroke-width="0.8"/></svg>
<svg style="left:0;top:0" width="1" height="1"><path d="M86.4,269.59999999999997 L89.4,272.59999999999997 L92.4,269.59999999999997" fill="none" stroke="#cfe0f2" stroke-width="0.9"/></svg>
<div class="t" style="left:16px;top:293.9px;color:#fff;font-size:9.18px;font-weight:bold;transform:translateY(-50%) scaleX(0.707);transform-origin:0 50%">회사관리자N</div>
<svg style="left:0;top:0" width="1" height="1"><path d="M8,297.7 C5,293.9 5,290.09999999999997 8,290.09999999999997 C11,290.09999999999997 11,293.9 8,297.7z" fill="none" stroke="#d7e5f5" stroke-width="0.8"/></svg>
<svg style="left:0;top:0" width="1" height="1"><path d="M86.4,291.59999999999997 L89.4,294.59999999999997 L92.4,291.59999999999997" fill="none" stroke="#cfe0f2" stroke-width="0.9"/></svg>
<div class="a" style="left:255px;top:223px;width:1065px;height:501px;background:#f1f5f9"></div>
<div class="a" style="left:1312px;top:223px;width:8px;height:501px;background:#fff"></div>
<div class="a" style="left:357px;top:223px;width:963px;height:27px;background:#fff"></div>
<div class="a" style="left:357px;top:250px;width:955px;height:1.5px;background:linear-gradient(#e4e8ed,#f1f5f9)"></div>
<svg style="left:0;top:0" width="1" height="1"><path d="M367.5,234 L365,236.7 L367.5,239.4" fill="none" stroke="#888" stroke-width="0.8"/></svg>
<div class="a" style="left:375px;top:223px;width:1px;height:27px;background:#e6e6e6"></div>
<div class="t" style="left:384px;top:236.8px;font-size:7.28px;font-weight:bold;color:#222;transform:translateY(-50%) scaleX(0.750);transform-origin:0 50%">현장</div>
<div class="t" style="left:401px;top:236.8px;font-size:7.28px;color:#555;transform:translateY(-50%) scaleX(0.751);transform-origin:0 50%">포스코A&amp;C</div>
<svg style="left:0;top:0" width="1" height="1"><path d="M442,234.6 L445,236.8 L442,239z" fill="#222"/></svg>
<div class="t" style="left:454px;top:236.8px;font-size:7.28px;color:#555;transform:translateY(-50%) scaleX(0.769);transform-origin:0 50%">플랜트CM사업실</div>
<svg style="left:0;top:0" width="1" height="1"><path d="M522,234.6 L525,236.8 L522,239z" fill="#222"/></svg>
<div class="t" style="left:534px;top:236.8px;font-size:7.28px;color:#333;transform:translateY(-50%) scaleX(0.851);transform-origin:0 50%">광_홍보관/교육관 신설공사 2차</div>
<div class="t" style="left:368.6px;top:268px;font-size:10.98px;font-weight:bold;color:#111;transform:translateY(-50%) scaleX(0.809);transform-origin:0 50%">공정율 라인차트</div>
<div class="t" style="left:373.2px;top:301.8px;font-size:8.40px;color:#888;transform:translateY(-50%) scaleX(0.750);transform-origin:0 50%">등록일</div>
<div class="a" style="left:394.3px;top:293px;width:44.3px;height:17.6px;background:#fff;border:0.6px solid #cdd2d8;border-radius:2px"></div>
<div class="t" style="left:399.5px;top:301.9px;font-size:6.8px;color:#222;transform:translateY(-50%) scaleX(0.949);transform-origin:0 50%">2024-01-01</div>
<div class="t" style="left:442.2px;top:301.9px;font-size:6.5px;color:#555">~</div>
<div class="a" style="left:447px;top:293px;width:44.4px;height:17.6px;background:#fff;border:0.6px solid #cdd2d8;border-radius:2px"></div>
<div class="t" style="left:452px;top:301.9px;font-size:6.8px;color:#222;transform:translateY(-50%) scaleX(0.949);transform-origin:0 50%">2024-10-31</div>
<div class="a" style="left:1267.2px;top:294px;width:27.3px;height:13.6px;background:#0b4f9c;border-radius:2px"></div>
<svg style="left:0;top:0" width="1" height="1"><circle cx="1273.1" cy="300" r="1.8" fill="none" stroke="#fff" stroke-width="1"/><path d="M1274.4,301.3 L1275.9,302.8" stroke="#fff" stroke-width="1.1"/></svg>
<div class="t" style="left:1278px;top:300.9px;font-size:6.72px;font-weight:bold;color:#fff;transform:translateY(-50%) scaleX(0.756);transform-origin:0 50%">조 회</div>
<div class="a" style="left:368px;top:317px;width:934px;height:1px;background:#dfe4ea"></div>
<svg style="left:0;top:0" width="1" height="1"><path d="M1314,257 L1316.5,254 L1319,257z" fill="#666"/></svg>
<div class="a" style="left:368px;top:328.4px;width:462px;height:183.2px;background:#fff;border-radius:2px;box-shadow:0 1px 2px rgba(0,0,0,0.06)"></div>
<div class="a" style="left:368px;top:328.4px;width:462px;height:22.3px;background:#0b4f96;border-radius:2px 2px 0 0"></div>
<div class="t" style="left:373px;top:339.8px;font-size:7.84px;font-weight:bold;color:#fff;transform:translateY(-50%) scaleX(0.711);transform-origin:0 50%">공정율 추이</div>
<div class="t" style="left:406.4px;top:340px;font-size:6.16px;color:#c9d8ea;transform:translateY(-50%) scaleX(0.812);transform-origin:0 50%">최근 작업진행률 보여 줍니다.</div>
<svg style="left:0;top:0" width="1" height="1"><circle cx="821.5" cy="340.2" r="4.6" fill="#fff"/><path d="M818.9,339.2 L818.9,337.59999999999997 L820.5,337.59999999999997 M822.5,337.59999999999997 L824.1,337.59999999999997 L824.1,339.2 M824.1,341.2 L824.1,342.8 L822.5,342.8 M820.5,342.8 L818.9,342.8 L818.9,341.2" fill="none" stroke="#0b4f96" stroke-width="0.9"/></svg>
<div class="a" style="left:566.7px;top:359.2px;width:18.1px;height:5.6px;background:#7474f6;border:0.6px solid #4a4af0"></div>
<div class="t" style="left:587.2px;top:362px;font-size:6.72px;color:#333;transform:translateY(-50%) scaleX(0.700);transform-origin:0 50%">계획</div>
<div class="a" style="left:601.1px;top:359.2px;width:18.2px;height:5.6px;background:#ff6cf0;border:0.6px solid #f050e8"></div>
<div class="t" style="left:622.3px;top:362px;font-size:6.72px;color:#333;transform:translateY(-50%) scaleX(0.679);transform-origin:0 50%">실적</div>
<svg style="left:0;top:0" width="1" height="1"><path d="M395.50,368 V472" stroke="#e6e6e6" stroke-width="0.6"/><path d="M414.77,368 V472" stroke="#e6e6e6" stroke-width="0.6"/><path d="M434.04,368 V472" stroke="#e6e6e6" stroke-width="0.6"/><path d="M453.30,368 V472" stroke="#e6e6e6" stroke-width="0.6"/><path d="M472.57,368 V472" stroke="#e6e6e6" stroke-width="0.6"/><path d="M491.84,368 V472" stroke="#e6e6e6" stroke-width="0.6"/><path d="M511.11,368 V472" stroke="#e6e6e6" stroke-width="0.6"/><path d="M530.38,368 V472" stroke="#e6e6e6" stroke-width="0.6"/><path d="M549.65,368 V472" stroke="#e6e6e6" stroke-width="0.6"/><path d="M568.91,368 V472" stroke="#e6e6e6" stroke-width="0.6"/><path d="M588.18,368 V472" stroke="#e6e6e6" stroke-width="0.6"/><path d="M607.45,368 V472" stroke="#e6e6e6" stroke-width="0.6"/><path d="M626.72,368 V472" stroke="#e6e6e6" stroke-width="0.6"/><path d="M645.99,368 V472" stroke="#e6e6e6" stroke-width="0.6"/><path d="M665.25,368 V472" stroke="#e6e6e6" stroke-width="0.6"/><path d="M684.52,368 V472" stroke="#e6e6e6" stroke-width="0.6"/><path d="M703.79,368 V472" stroke="#e6e6e6" stroke-width="0.6"/><path d="M723.06,368 V472" stroke="#e6e6e6" stroke-width="0.6"/><path d="M742.33,368 V472" stroke="#e6e6e6" stroke-width="0.6"/><path d="M761.60,368 V472" stroke="#e6e6e6" stroke-width="0.6"/><path d="M780.86,368 V472" stroke="#e6e6e6" stroke-width="0.6"/><path d="M800.13,368 V472" stroke="#e6e6e6" stroke-width="0.6"/><path d="M819.40,368 V472" stroke="#e6e6e6" stroke-width="0.6"/><path d="M392,468.80 H819.4" stroke="#e6e6e6" stroke-width="0.6"/><path d="M392,453.40 H819.4" stroke="#e6e6e6" stroke-width="0.6"/><path d="M392,438.00 H819.4" stroke="#e6e6e6" stroke-width="0.6"/><path d="M392,422.60 H819.4" stroke="#e6e6e6" stroke-width="0.6"/><path d="M392,407.20 H819.4" stroke="#e6e6e6" stroke-width="0.6"/><path d="M392,391.80 H819.4" stroke="#e6e6e6" stroke-width="0.6"/><path d="M392,376.40 H819.4" stroke="#e6e6e6" stroke-width="0.6"/><path d="M395.5,368 V469" stroke="#cfcfcf" stroke-width="0.6"/><polygon points="395.50,463.72 405.13,463.26 414.77,462.64 424.40,462.02 434.04,460.79 443.67,459.71 453.30,458.17 462.94,456.94 472.57,454.94 482.21,453.09 491.84,451.40 501.48,449.86 511.11,448.32 520.74,446.32 530.38,444.78 540.01,441.85 549.65,439.69 559.28,438.15 568.91,436.61 578.55,434.61 588.18,433.07 597.82,431.07 607.45,428.76 617.08,426.45 626.72,424.45 636.35,423.06 645.99,421.52 655.62,419.67 665.25,417.98 674.89,415.98 684.52,414.28 694.16,411.82 703.79,408.74 713.42,406.12 723.06,402.89 732.69,400.27 742.33,397.65 751.96,394.73 761.60,391.95 771.23,389.03 780.86,386.56 790.50,383.95 800.13,380.87 809.77,377.32 819.40,374.24 819.4,468.80 395.5,468.80" fill="rgba(0,0,0,0.09)"/><polygon points="395.50,468.80 405.13,467.72 414.77,465.41 424.40,462.64 434.04,461.25 443.67,460.64 453.30,460.79 462.94,460.18 472.57,459.71 482.21,459.25 491.84,454.17 501.48,454.17 511.11,453.40 520.74,452.63 530.38,451.86 540.01,449.09 549.65,445.85 559.28,442.77 568.91,440.93 578.55,438.31 588.18,438.31 597.82,435.69 607.45,433.07 617.08,432.76 626.72,431.53 636.35,429.07 645.99,427.53 655.62,426.14 665.25,424.60 674.89,423.06 684.52,421.98 694.16,420.44 703.79,417.36 713.42,413.82 723.06,410.74 732.69,409.20 742.33,406.89 751.96,404.12 761.60,404.12 771.23,397.81 780.86,397.04 790.50,391.95 800.13,387.64 809.77,382.87 819.40,382.87 819.4,468.80 395.5,468.80" fill="rgba(0,0,0,0.12)"/><polyline points="395.50,463.72 405.13,463.26 414.77,462.64 424.40,462.02 434.04,460.79 443.67,459.71 453.30,458.17 462.94,456.94 472.57,454.94 482.21,453.09 491.84,451.40 501.48,449.86 511.11,448.32 520.74,446.32 530.38,444.78 540.01,441.85 549.65,439.69 559.28,438.15 568.91,436.61 578.55,434.61 588.18,433.07 597.82,431.07 607.45,428.76 617.08,426.45 626.72,424.45 636.35,423.06 645.99,421.52 655.62,419.67 665.25,417.98 674.89,415.98 684.52,414.28 694.16,411.82 703.79,408.74 713.42,406.12 723.06,402.89 732.69,400.27 742.33,397.65 751.96,394.73 761.60,391.95 771.23,389.03 780.86,386.56 790.50,383.95 800.13,380.87 809.77,377.32 819.40,374.24" fill="none" stroke="#8585ee" stroke-width="0.9"/><polyline points="395.50,468.80 405.13,467.72 414.77,465.41 424.40,462.64 434.04,461.25 443.67,460.64 453.30,460.79 462.94,460.18 472.57,459.71 482.21,459.25 491.84,454.17 501.48,454.17 511.11,453.40 520.74,452.63 530.38,451.86 540.01,449.09 549.65,445.85 559.28,442.77 568.91,440.93 578.55,438.31 588.18,438.31 597.82,435.69 607.45,433.07 617.08,432.76 626.72,431.53 636.35,429.07 645.99,427.53 655.62,426.14 665.25,424.60 674.89,423.06 684.52,421.98 694.16,420.44 703.79,417.36 713.42,413.82 723.06,410.74 732.69,409.20 742.33,406.89 751.96,404.12 761.60,404.12 771.23,397.81 780.86,397.04 790.50,391.95 800.13,387.64 809.77,382.87 819.40,382.87" fill="none" stroke="#e27ae6" stroke-width="0.9"/><circle cx="395.50" cy="463.72" r="1.7" fill="#a4a4f2" stroke="#7b7be8" stroke-width="0.5"/><circle cx="405.13" cy="463.26" r="1.7" fill="#a4a4f2" stroke="#7b7be8" stroke-width="0.5"/><circle cx="414.77" cy="462.64" r="1.7" fill="#a4a4f2" stroke="#7b7be8" stroke-width="0.5"/><circle cx="424.40" cy="462.02" r="1.7" fill="#a4a4f2" stroke="#7b7be8" stroke-width="0.5"/><circle cx="434.04" cy="460.79" r="1.7" fill="#a4a4f2" stroke="#7b7be8" stroke-width="0.5"/><circle cx="443.67" cy="459.71" r="1.7" fill="#a4a4f2" stroke="#7b7be8" stroke-width="0.5"/><circle cx="453.30" cy="458.17" r="1.7" fill="#a4a4f2" stroke="#7b7be8" stroke-width="0.5"/><circle cx="462.94" cy="456.94" r="1.7" fill="#a4a4f2" stroke="#7b7be8" stroke-width="0.5"/><circle cx="472.57" cy="454.94" r="1.7" fill="#a4a4f2" stroke="#7b7be8" stroke-width="0.5"/><circle cx="482.21" cy="453.09" r="1.7" fill="#a4a4f2" stroke="#7b7be8" stroke-width="0.5"/><circle cx="491.84" cy="451.40" r="1.7" fill="#a4a4f2" stroke="#7b7be8" stroke-width="0.5"/><circle cx="501.48" cy="449.86" r="1.7" fill="#a4a4f2" stroke="#7b7be8" stroke-width="0.5"/><circle cx="511.11" cy="448.32" r="1.7" fill="#a4a4f2" stroke="#7b7be8" stroke-width="0.5"/><circle cx="520.74" cy="446.32" r="1.7" fill="#a4a4f2" stroke="#7b7be8" stroke-width="0.5"/><circle cx="530.38" cy="444.78" r="1.7" fill="#a4a4f2" stroke="#7b7be8" stroke-width="0.5"/><circle cx="540.01" cy="441.85" r="1.7" fill="#a4a4f2" stroke="#7b7be8" stroke-width="0.5"/><circle cx="549.65" cy="439.69" r="1.7" fill="#a4a4f2" stroke="#7b7be8" stroke-width="0.5"/><circle cx="559.28" cy="438.15" r="1.7" fill="#a4a4f2" stroke="#7b7be8" stroke-width="0.5"/><circle cx="568.91" cy="436.61" r="1.7" fill="#a4a4f2" stroke="#7b7be8" stroke-width="0.5"/><circle cx="578.55" cy="434.61" r="1.7" fill="#a4a4f2" stroke="#7b7be8" stroke-width="0.5"/><circle cx="588.18" cy="433.07" r="1.7" fill="#a4a4f2" stroke="#7b7be8" stroke-width="0.5"/><circle cx="597.82" cy="431.07" r="1.7" fill="#a4a4f2" stroke="#7b7be8" stroke-width="0.5"/><circle cx="607.45" cy="428.76" r="1.7" fill="#a4a4f2" stroke="#7b7be8" stroke-width="0.5"/><circle cx="617.08" cy="426.45" r="1.7" fill="#a4a4f2" stroke="#7b7be8" stroke-width="0.5"/><circle cx="626.72" cy="424.45" r="1.7" fill="#a4a4f2" stroke="#7b7be8" stroke-width="0.5"/><circle cx="636.35" cy="423.06" r="1.7" fill="#a4a4f2" stroke="#7b7be8" stroke-width="0.5"/><circle cx="645.99" cy="421.52" r="1.7" fill="#a4a4f2" stroke="#7b7be8" stroke-width="0.5"/><circle cx="655.62" cy="419.67" r="1.7" fill="#a4a4f2" stroke="#7b7be8" stroke-width="0.5"/><circle cx="665.25" cy="417.98" r="1.7" fill="#a4a4f2" stroke="#7b7be8" stroke-width="0.5"/><circle cx="674.89" cy="415.98" r="1.7" fill="#a4a4f2" stroke="#7b7be8" stroke-width="0.5"/><circle cx="684.52" cy="414.28" r="1.7" fill="#a4a4f2" stroke="#7b7be8" stroke-width="0.5"/><circle cx="694.16" cy="411.82" r="1.7" fill="#a4a4f2" stroke="#7b7be8" stroke-width="0.5"/><circle cx="703.79" cy="408.74" r="1.7" fill="#a4a4f2" stroke="#7b7be8" stroke-width="0.5"/><circle cx="713.42" cy="406.12" r="1.7" fill="#a4a4f2" stroke="#7b7be8" stroke-width="0.5"/><circle cx="723.06" cy="402.89" r="1.7" fill="#a4a4f2" stroke="#7b7be8" stroke-width="0.5"/><circle cx="732.69" cy="400.27" r="1.7" fill="#a4a4f2" stroke="#7b7be8" stroke-width="0.5"/><circle cx="742.33" cy="397.65" r="1.7" fill="#a4a4f2" stroke="#7b7be8" stroke-width="0.5"/><circle cx="751.96" cy="394.73" r="1.7" fill="#a4a4f2" stroke="#7b7be8" stroke-width="0.5"/><circle cx="761.60" cy="391.95" r="1.7" fill="#a4a4f2" stroke="#7b7be8" stroke-width="0.5"/><circle cx="771.23" cy="389.03" r="1.7" fill="#a4a4f2" stroke="#7b7be8" stroke-width="0.5"/><circle cx="780.86" cy="386.56" r="1.7" fill="#a4a4f2" stroke="#7b7be8" stroke-width="0.5"/><circle cx="790.50" cy="383.95" r="1.7" fill="#a4a4f2" stroke="#7b7be8" stroke-width="0.5"/><circle cx="800.13" cy="380.87" r="1.7" fill="#a4a4f2" stroke="#7b7be8" stroke-width="0.5"/><circle cx="809.77" cy="377.32" r="1.7" fill="#a4a4f2" stroke="#7b7be8" stroke-width="0.5"/><circle cx="819.40" cy="374.24" r="1.7" fill="#a4a4f2" stroke="#7b7be8" stroke-width="0.5"/><circle cx="395.50" cy="468.80" r="1.7" fill="#e79ae9" stroke="#d46ad6" stroke-width="0.5"/><circle cx="405.13" cy="467.72" r="1.7" fill="#e79ae9" stroke="#d46ad6" stroke-width="0.5"/><circle cx="414.77" cy="465.41" r="1.7" fill="#e79ae9" stroke="#d46ad6" stroke-width="0.5"/><circle cx="424.40" cy="462.64" r="1.7" fill="#e79ae9" stroke="#d46ad6" stroke-width="0.5"/><circle cx="434.04" cy="461.25" r="1.7" fill="#e79ae9" stroke="#d46ad6" stroke-width="0.5"/><circle cx="443.67" cy="460.64" r="1.7" fill="#e79ae9" stroke="#d46ad6" stroke-width="0.5"/><circle cx="453.30" cy="460.79" r="1.7" fill="#e79ae9" stroke="#d46ad6" stroke-width="0.5"/><circle cx="462.94" cy="460.18" r="1.7" fill="#e79ae9" stroke="#d46ad6" stroke-width="0.5"/><circle cx="472.57" cy="459.71" r="1.7" fill="#e79ae9" stroke="#d46ad6" stroke-width="0.5"/><circle cx="482.21" cy="459.25" r="1.7" fill="#e79ae9" stroke="#d46ad6" stroke-width="0.5"/><circle cx="491.84" cy="454.17" r="1.7" fill="#e79ae9" stroke="#d46ad6" stroke-width="0.5"/><circle cx="501.48" cy="454.17" r="1.7" fill="#e79ae9" stroke="#d46ad6" stroke-width="0.5"/><circle cx="511.11" cy="453.40" r="1.7" fill="#e79ae9" stroke="#d46ad6" stroke-width="0.5"/><circle cx="520.74" cy="452.63" r="1.7" fill="#e79ae9" stroke="#d46ad6" stroke-width="0.5"/><circle cx="530.38" cy="451.86" r="1.7" fill="#e79ae9" stroke="#d46ad6" stroke-width="0.5"/><circle cx="540.01" cy="449.09" r="1.7" fill="#e79ae9" stroke="#d46ad6" stroke-width="0.5"/><circle cx="549.65" cy="445.85" r="1.7" fill="#e79ae9" stroke="#d46ad6" stroke-width="0.5"/><circle cx="559.28" cy="442.77" r="1.7" fill="#e79ae9" stroke="#d46ad6" stroke-width="0.5"/><circle cx="568.91" cy="440.93" r="1.7" fill="#e79ae9" stroke="#d46ad6" stroke-width="0.5"/><circle cx="578.55" cy="438.31" r="1.7" fill="#e79ae9" stroke="#d46ad6" stroke-width="0.5"/><circle cx="588.18" cy="438.31" r="1.7" fill="#e79ae9" stroke="#d46ad6" stroke-width="0.5"/><circle cx="597.82" cy="435.69" r="1.7" fill="#e79ae9" stroke="#d46ad6" stroke-width="0.5"/><circle cx="607.45" cy="433.07" r="1.7" fill="#e79ae9" stroke="#d46ad6" stroke-width="0.5"/><circle cx="617.08" cy="432.76" r="1.7" fill="#e79ae9" stroke="#d46ad6" stroke-width="0.5"/><circle cx="626.72" cy="431.53" r="1.7" fill="#e79ae9" stroke="#d46ad6" stroke-width="0.5"/><circle cx="636.35" cy="429.07" r="1.7" fill="#e79ae9" stroke="#d46ad6" stroke-width="0.5"/><circle cx="645.99" cy="427.53" r="1.7" fill="#e79ae9" stroke="#d46ad6" stroke-width="0.5"/><circle cx="655.62" cy="426.14" r="1.7" fill="#e79ae9" stroke="#d46ad6" stroke-width="0.5"/><circle cx="665.25" cy="424.60" r="1.7" fill="#e79ae9" stroke="#d46ad6" stroke-width="0.5"/><circle cx="674.89" cy="423.06" r="1.7" fill="#e79ae9" stroke="#d46ad6" stroke-width="0.5"/><circle cx="684.52" cy="421.98" r="1.7" fill="#e79ae9" stroke="#d46ad6" stroke-width="0.5"/><circle cx="694.16" cy="420.44" r="1.7" fill="#e79ae9" stroke="#d46ad6" stroke-width="0.5"/><circle cx="703.79" cy="417.36" r="1.7" fill="#e79ae9" stroke="#d46ad6" stroke-width="0.5"/><circle cx="713.42" cy="413.82" r="1.7" fill="#e79ae9" stroke="#d46ad6" stroke-width="0.5"/><circle cx="723.06" cy="410.74" r="1.7" fill="#e79ae9" stroke="#d46ad6" stroke-width="0.5"/><circle cx="732.69" cy="409.20" r="1.7" fill="#e79ae9" stroke="#d46ad6" stroke-width="0.5"/><circle cx="742.33" cy="406.89" r="1.7" fill="#e79ae9" stroke="#d46ad6" stroke-width="0.5"/><circle cx="751.96" cy="404.12" r="1.7" fill="#e79ae9" stroke="#d46ad6" stroke-width="0.5"/><circle cx="761.60" cy="404.12" r="1.7" fill="#e79ae9" stroke="#d46ad6" stroke-width="0.5"/><circle cx="771.23" cy="397.81" r="1.7" fill="#e79ae9" stroke="#d46ad6" stroke-width="0.5"/><circle cx="780.86" cy="397.04" r="1.7" fill="#e79ae9" stroke="#d46ad6" stroke-width="0.5"/><circle cx="790.50" cy="391.95" r="1.7" fill="#e79ae9" stroke="#d46ad6" stroke-width="0.5"/><circle cx="800.13" cy="387.64" r="1.7" fill="#e79ae9" stroke="#d46ad6" stroke-width="0.5"/><circle cx="809.77" cy="382.87" r="1.7" fill="#e79ae9" stroke="#d46ad6" stroke-width="0.5"/><circle cx="819.40" cy="382.87" r="1.7" fill="#e79ae9" stroke="#d46ad6" stroke-width="0.5"/><path d="M530.9,369 V469" stroke="#ee1c1c" stroke-width="1.1" stroke-dasharray="2.6,1.8"/></svg>
<div class="t" style="left:387.8px;top:468.8px;font-size:5.5px;color:#555;transform:translateY(-50%) scaleX(1.045);transform-origin:0 50%">5</div>
<div class="t" style="left:384.8px;top:453.4px;font-size:5.5px;color:#555;transform:translateY(-50%) scaleX(1.012);transform-origin:0 50%">15</div>
<div class="t" style="left:384.8px;top:438.0px;font-size:5.5px;color:#555;transform:translateY(-50%) scaleX(1.012);transform-origin:0 50%">25</div>
<div class="t" style="left:384.8px;top:422.6px;font-size:5.5px;color:#555;transform:translateY(-50%) scaleX(1.012);transform-origin:0 50%">35</div>
<div class="t" style="left:384.8px;top:407.2px;font-size:5.5px;color:#555;transform:translateY(-50%) scaleX(1.012);transform-origin:0 50%">45</div>
<div class="t" style="left:384.8px;top:391.8px;font-size:5.5px;color:#555;transform:translateY(-50%) scaleX(1.012);transform-origin:0 50%">55</div>
<div class="t" style="left:384.8px;top:376.4px;font-size:5.5px;color:#555;transform:translateY(-50%) scaleX(1.012);transform-origin:0 50%">65</div>
<div class="a" style="left:347.00px;top:472.5px;width:50px;height:7px;transform:rotate(-50deg);transform-origin:100% 0;display:flex;justify-content:flex-end;white-space:nowrap;font-size:5.2px;line-height:7px;color:#444">2024.1월1주차</div>
<div class="a" style="left:366.27px;top:472.5px;width:50px;height:7px;transform:rotate(-50deg);transform-origin:100% 0;display:flex;justify-content:flex-end;white-space:nowrap;font-size:5.2px;line-height:7px;color:#444">2024.1월3주차</div>
<div class="a" style="left:385.54px;top:472.5px;width:50px;height:7px;transform:rotate(-50deg);transform-origin:100% 0;display:flex;justify-content:flex-end;white-space:nowrap;font-size:5.2px;line-height:7px;color:#444">2024.2월1주차</div>
<div class="a" style="left:404.80px;top:472.5px;width:50px;height:7px;transform:rotate(-50deg);transform-origin:100% 0;display:flex;justify-content:flex-end;white-space:nowrap;font-size:5.2px;line-height:7px;color:#444">2024.2월3주차</div>
<div class="a" style="left:424.07px;top:472.5px;width:50px;height:7px;transform:rotate(-50deg);transform-origin:100% 0;display:flex;justify-content:flex-end;white-space:nowrap;font-size:5.2px;line-height:7px;color:#444">2024.2월5주차</div>
<div class="a" style="left:443.34px;top:472.5px;width:50px;height:7px;transform:rotate(-50deg);transform-origin:100% 0;display:flex;justify-content:flex-end;white-space:nowrap;font-size:5.2px;line-height:7px;color:#444">2024.3월2주차</div>
<div class="a" style="left:462.61px;top:472.5px;width:50px;height:7px;transform:rotate(-50deg);transform-origin:100% 0;display:flex;justify-content:flex-end;white-space:nowrap;font-size:5.2px;line-height:7px;color:#444">2024.3월4주차</div>
<div class="a" style="left:481.88px;top:472.5px;width:50px;height:7px;transform:rotate(-50deg);transform-origin:100% 0;display:flex;justify-content:flex-end;white-space:nowrap;font-size:5.2px;line-height:7px;color:#444">2024.4월2주차</div>
<div class="a" style="left:501.15px;top:472.5px;width:50px;height:7px;transform:rotate(-50deg);transform-origin:100% 0;display:flex;justify-content:flex-end;white-space:nowrap;font-size:5.2px;line-height:7px;color:#444">2024.4월4주차</div>
<div class="a" style="left:520.41px;top:472.5px;width:50px;height:7px;transform:rotate(-50deg);transform-origin:100% 0;display:flex;justify-content:flex-end;white-space:nowrap;font-size:5.2px;line-height:7px;color:#444">2024.5월2주차</div>
<div class="a" style="left:539.68px;top:472.5px;width:50px;height:7px;transform:rotate(-50deg);transform-origin:100% 0;display:flex;justify-content:flex-end;white-space:nowrap;font-size:5.2px;line-height:7px;color:#444">2024.5월4주차</div>
<div class="a" style="left:558.95px;top:472.5px;width:50px;height:7px;transform:rotate(-50deg);transform-origin:100% 0;display:flex;justify-content:flex-end;white-space:nowrap;font-size:5.2px;line-height:7px;color:#444">2024.6월1주차</div>
<div class="a" style="left:578.22px;top:472.5px;width:50px;height:7px;transform:rotate(-50deg);transform-origin:100% 0;display:flex;justify-content:flex-end;white-space:nowrap;font-size:5.2px;line-height:7px;color:#444">2024.6월3주차</div>
<div class="a" style="left:597.49px;top:472.5px;width:50px;height:7px;transform:rotate(-50deg);transform-origin:100% 0;display:flex;justify-content:flex-end;white-space:nowrap;font-size:5.2px;line-height:7px;color:#444">2024.7월1주차</div>
<div class="a" style="left:616.75px;top:472.5px;width:50px;height:7px;transform:rotate(-50deg);transform-origin:100% 0;display:flex;justify-content:flex-end;white-space:nowrap;font-size:5.2px;line-height:7px;color:#444">2024.7월3주차</div>
<div class="a" style="left:636.02px;top:472.5px;width:50px;height:7px;transform:rotate(-50deg);transform-origin:100% 0;display:flex;justify-content:flex-end;white-space:nowrap;font-size:5.2px;line-height:7px;color:#444">2024.8월1주차</div>
<div class="a" style="left:655.29px;top:472.5px;width:50px;height:7px;transform:rotate(-50deg);transform-origin:100% 0;display:flex;justify-content:flex-end;white-space:nowrap;font-size:5.2px;line-height:7px;color:#444">2024.8월3주차</div>
<div class="a" style="left:674.56px;top:472.5px;width:50px;height:7px;transform:rotate(-50deg);transform-origin:100% 0;display:flex;justify-content:flex-end;white-space:nowrap;font-size:5.2px;line-height:7px;color:#444">2024.8월5주차</div>
<div class="a" style="left:693.83px;top:472.5px;width:50px;height:7px;transform:rotate(-50deg);transform-origin:100% 0;display:flex;justify-content:flex-end;white-space:nowrap;font-size:5.2px;line-height:7px;color:#444">2024.9월2주차</div>
<div class="a" style="left:713.10px;top:472.5px;width:50px;height:7px;transform:rotate(-50deg);transform-origin:100% 0;display:flex;justify-content:flex-end;white-space:nowrap;font-size:5.2px;line-height:7px;color:#444">2024.9월4주차</div>
<div class="a" style="left:732.36px;top:472.5px;width:50px;height:7px;transform:rotate(-50deg);transform-origin:100% 0;display:flex;justify-content:flex-end;white-space:nowrap;font-size:5.2px;line-height:7px;color:#444">2024.10월2주차</div>
<div class="a" style="left:751.63px;top:472.5px;width:50px;height:7px;transform:rotate(-50deg);transform-origin:100% 0;display:flex;justify-content:flex-end;white-space:nowrap;font-size:5.2px;line-height:7px;color:#444">2024.10월4주차</div>
<div class="a" style="left:770.90px;top:472.5px;width:50px;height:7px;transform:rotate(-50deg);transform-origin:100% 0;display:flex;justify-content:flex-end;white-space:nowrap;font-size:5.2px;line-height:7px;color:#444">2024.11월1주차</div>
<div class="a" style="left:839.5px;top:328.4px;width:461.5px;height:388.6px;background:#32363d;border-radius:2px;box-shadow:0 1px 2px rgba(0,0,0,0.1)"></div>
<div class="a" style="left:839.5px;top:328.4px;width:461.5px;height:22.5px;background:#0b4f96;border-radius:2px 2px 0 0"></div>
<div class="t" style="left:843.7px;top:339.8px;font-size:7px;font-weight:bold;color:#fff;transform:translateY(-50%) scaleX(0.932);transform-origin:0 50%">3D Image</div>
<div class="t" style="left:874.5px;top:340px;font-size:6.16px;color:#c9d8ea;transform:translateY(-50%) scaleX(0.855);transform-origin:0 50%">Webgl 3D화면을 보여줍니다.</div>
<svg style="left:0;top:0" width="1" height="1"><circle cx="1292.3" cy="340.2" r="4.6" fill="#fff"/><path d="M1289.7,339.2 L1289.7,337.59999999999997 L1291.3,337.59999999999997 M1293.3,337.59999999999997 L1294.8999999999999,337.59999999999997 L1294.8999999999999,339.2 M1294.8999999999999,341.2 L1294.8999999999999,342.8 L1293.3,342.8 M1291.3,342.8 L1289.7,342.8 L1289.7,341.2" fill="none" stroke="#0b4f96" stroke-width="0.9"/></svg>
<div class="a" style="left:1035.9px;top:360.6px;width:37.1px;height:14.2px;background:#24272c;border-radius:2px"></div>
<div class="t" style="left:1041.2px;top:367.7px;font-size:7.84px;font-weight:bold;color:#f0f0f0;transform:translateY(-50%) scaleX(0.775);transform-origin:0 50%">측정 도구</div>
<div class="a" style="left:1084.7px;top:360.4px;width:27.6px;height:14.8px;background:#24272c;border-radius:2px"></div>
<div class="t" style="left:1087.9px;top:367.8px;font-size:6.16px;color:#e8e8e8;transform:translateY(-50%) scaleX(0.875);transform-origin:0 50%">비행모드</div>
<svg style="left:0;top:0" width="1" height="1"><circle cx="1131.4" cy="367.6" r="7.3" fill="#24272c"/></svg>
<div class="t" style="left:1128.9px;top:367.6px;font-size:5.60px;color:#ddd;transform:translateY(-50%) scaleX(0.833);transform-origin:0 50%">위</div>
<svg style="left:0;top:0" width="1" height="1"><circle cx="1152.6" cy="367.6" r="7.3" fill="#24272c"/></svg>
<div class="t" style="left:1150.1px;top:367.6px;font-size:5.60px;color:#ddd;transform:translateY(-50%) scaleX(0.833);transform-origin:0 50%">앞</div>
<svg style="left:0;top:0" width="1" height="1"><circle cx="1171" cy="367.6" r="7.3" fill="#24272c"/></svg>
<div class="t" style="left:1168.5px;top:367.6px;font-size:5.60px;color:#ddd;transform:translateY(-50%) scaleX(0.833);transform-origin:0 50%">뒤</div>
<svg style="left:0;top:0" width="1" height="1"><circle cx="1189.7" cy="367.6" r="7.3" fill="#24272c"/></svg>
<div class="t" style="left:1187.2px;top:367.6px;font-size:5.60px;color:#ddd;transform:translateY(-50%) scaleX(0.833);transform-origin:0 50%">좌</div>
<svg style="left:0;top:0" width="1" height="1"><circle cx="1207.7" cy="367.6" r="7.3" fill="#24272c"/></svg>
<div class="t" style="left:1205.2px;top:367.6px;font-size:5.60px;color:#ddd;transform:translateY(-50%) scaleX(0.833);transform-origin:0 50%">우</div>
<svg style="left:0;top:0" width="1" height="1"><circle cx="1234.7" cy="367.6" r="7.3" fill="#24272c"/><path d="M1231.6,368 L1234.7,365 L1237.8,368 L1236.9,368 L1236.9,370.6 L1235.4,370.6 L1235.4,368.9 L1234,368.9 L1234,370.6 L1232.5,370.6 L1232.5,368 Z" fill="#fff"/></svg>
<svg style="left:0;top:0" width="1" height="1"><path d="M1266.8,366.8 L1273.8,366.8 L1270.3,375z" fill="#22c422"/><path d="M1274.6,377.8 L1283,373.8 L1284.4,378.8 L1275.8,381.8z" fill="#2030f0"/><path d="M1274.8,383.8 L1284.4,383.2 L1281,389.6z" fill="#e02020"/><path d="M1265.8,378.4 C1262,375 1258,375 1257.2,377.2 C1257,379.6 1261,380.8 1265.2,381.6z" fill="#c9c9c9"/><path d="M1265.8,384.2 L1257.2,386.2 L1263.8,389.6z" fill="#bdbdbd"/><path d="M1268.3,386.8 L1272.3,386.8 L1273.6,395.8 L1267,395.8z" fill="#cfcfcf"/><path d="M1266.3,379.6 L1270.3,377.4 L1274.3,379.6 L1274.3,384 L1270.3,386.2 L1266.3,384z" fill="#ececec"/></svg>
<svg style="left:0;top:0" width="1" height="1"><polygon points="1114.0,660.0 1168.0,694.0 1290.0,617.0 1250.0,590.0" fill="#373c45"/><path d="M1122.5,655.6 L1175.6,689.2" stroke="#59606c" stroke-width="0.5"/><path d="M1131.0,651.2 L1183.2,684.4" stroke="#59606c" stroke-width="0.5"/><path d="M1139.5,646.9 L1190.9,679.6" stroke="#59606c" stroke-width="0.5"/><path d="M1148.0,642.5 L1198.5,674.8" stroke="#59606c" stroke-width="0.5"/><path d="M1156.5,638.1 L1206.1,669.9" stroke="#59606c" stroke-width="0.5"/><path d="M1165.0,633.8 L1213.8,665.1" stroke="#59606c" stroke-width="0.5"/><path d="M1173.5,629.4 L1221.4,660.3" stroke="#59606c" stroke-width="0.5"/><path d="M1182.0,625.0 L1229.0,655.5" stroke="#59606c" stroke-width="0.5"/><path d="M1190.5,620.6 L1236.6,650.7" stroke="#59606c" stroke-width="0.5"/><path d="M1199.0,616.2 L1244.2,645.9" stroke="#59606c" stroke-width="0.5"/><path d="M1207.5,611.9 L1251.9,641.1" stroke="#59606c" stroke-width="0.5"/><path d="M1216.0,607.5 L1259.5,636.2" stroke="#59606c" stroke-width="0.5"/><path d="M1224.5,603.1 L1267.1,631.4" stroke="#59606c" stroke-width="0.5"/><path d="M1233.0,598.8 L1274.8,626.6" stroke="#59606c" stroke-width="0.5"/><path d="M1241.5,594.4 L1282.4,621.8" stroke="#59606c" stroke-width="0.5"/><path d="M1120.0,663.8 L1254.4,593.0" stroke="#59606c" stroke-width="0.5"/><path d="M1126.0,667.6 L1258.9,596.0" stroke="#59606c" stroke-width="0.5"/><path d="M1132.0,671.3 L1263.3,599.0" stroke="#59606c" stroke-width="0.5"/><path d="M1138.0,675.1 L1267.8,602.0" stroke="#59606c" stroke-width="0.5"/><path d="M1144.0,678.9 L1272.2,605.0" stroke="#59606c" stroke-width="0.5"/><path d="M1150.0,682.7 L1276.7,608.0" stroke="#59606c" stroke-width="0.5"/><path d="M1156.0,686.4 L1281.1,611.0" stroke="#59606c" stroke-width="0.5"/><path d="M1162.0,690.2 L1285.6,614.0" stroke="#59606c" stroke-width="0.5"/><path d="M1161.8,695.6 L1175.2,703 L1289,614 L1281,610" fill="none" stroke="#f4f4f4" stroke-width="1.2"/><path d="M1252,592 L1283,605.5 L1276,609.5" fill="none" stroke="#f4f4f4" stroke-width="1.1"/><text x="0" y="0" transform="translate(1246,661) rotate(143)" font-size="8.5" fill="#e8e8e8" font-family="Liberation Sans" text-anchor="middle" dominant-baseline="middle">81.56m</text><polygon points="900.0,531.0 1000.0,508.0 1092.0,530.0 1103.0,592.0 1128.0,648.0 1114.0,642.0" fill="#77746f"/><polygon points="900.0,531.0 900.0,546.0 1114.0,660.0 1114.0,642.0" fill="#57544f"/><path d="M902,549 L1112,664" stroke="#7d7b77" stroke-width="0.6" stroke-dasharray="1.2,3"/><path d="M900,531 L1114,642" fill="none" stroke="#8a8782" stroke-width="0.5"/><polygon points="1092.0,588.0 1104.0,592.0 1110.0,612.0 1116.0,640.0 1108.0,638.0 1100.0,612.0" fill="#8a8782"/><path d="M1058,613 L1064,613 L1064,619 M1064,616 L1076,620 M1080,616 L1094,609" fill="none" stroke="#2e2e2e" stroke-width="0.8"/><path d="M1080,617 L1094,610" stroke="#bbb" stroke-width="0.6"/><polygon points="1104.0,592.0 1250.0,590.0 1250.0,596.0 1190.0,645.0 1124.0,662.0 1118.0,642.0" fill="#3f4146"/><path d="M1105.6,598.0 L1106.9,660.0" stroke="#7d7d7d" stroke-width="0.6"/><path d="M1108.2,598.0 L1107.2,661.5" stroke="#7d7d7d" stroke-width="0.6"/><path d="M1111.3,597.9 L1107.6,660.2" stroke="#7d7d7d" stroke-width="0.6"/><path d="M1115.2,597.8 L1111.9,656.3" stroke="#7d7d7d" stroke-width="0.6"/><path d="M1118.2,597.8 L1115.2,659.8" stroke="#7d7d7d" stroke-width="0.6"/><path d="M1120.9,597.7 L1124.5,657.7" stroke="#7d7d7d" stroke-width="0.6"/><path d="M1124.8,597.6 L1128.6,655.0" stroke="#7d7d7d" stroke-width="0.6"/><path d="M1126.8,597.6 L1125.1,657.1" stroke="#7d7d7d" stroke-width="0.6"/><path d="M1130.1,597.5 L1128.6,651.5" stroke="#7d7d7d" stroke-width="0.6"/><path d="M1134.5,597.4 L1135.2,650.4" stroke="#7d7d7d" stroke-width="0.6"/><path d="M1137.3,597.4 L1137.7,650.6" stroke="#7d7d7d" stroke-width="0.6"/><path d="M1139.2,597.3 L1136.9,648.1" stroke="#7d7d7d" stroke-width="0.6"/><path d="M1143.6,597.2 L1142.1,648.8" stroke="#7d7d7d" stroke-width="0.6"/><path d="M1146.5,597.2 L1144.9,648.0" stroke="#7d7d7d" stroke-width="0.6"/><path d="M1150.0,597.1 L1147.9,648.2" stroke="#7d7d7d" stroke-width="0.6"/><path d="M1152.6,597.1 L1155.6,646.3" stroke="#7d7d7d" stroke-width="0.6"/><path d="M1156.1,597.0 L1159.9,643.7" stroke="#7d7d7d" stroke-width="0.6"/><path d="M1157.9,597.0 L1160.0,643.9" stroke="#7d7d7d" stroke-width="0.6"/><path d="M1161.1,596.9 L1157.4,643.2" stroke="#7d7d7d" stroke-width="0.6"/><path d="M1165.2,596.8 L1165.8,643.4" stroke="#7d7d7d" stroke-width="0.6"/><path d="M1168.8,596.7 L1170.3,639.5" stroke="#7d7d7d" stroke-width="0.6"/><path d="M1171.3,596.7 L1170.9,640.3" stroke="#7d7d7d" stroke-width="0.6"/><path d="M1174.9,596.6 L1174.7,641.2" stroke="#7d7d7d" stroke-width="0.6"/><path d="M1177.6,596.6 L1179.2,635.0" stroke="#7d7d7d" stroke-width="0.6"/><path d="M1180.7,596.5 L1183.3,639.6" stroke="#7d7d7d" stroke-width="0.6"/><path d="M1183.1,596.5 L1184.4,635.1" stroke="#7d7d7d" stroke-width="0.6"/><path d="M1185.6,596.4 L1183.0,634.7" stroke="#7d7d7d" stroke-width="0.6"/><path d="M1188.9,596.3 L1191.1,631.2" stroke="#7d7d7d" stroke-width="0.6"/><path d="M1192.1,596.3 L1191.2,631.2" stroke="#7d7d7d" stroke-width="0.6"/><path d="M1196.6,596.2 L1196.2,628.7" stroke="#7d7d7d" stroke-width="0.6"/><path d="M1199.1,596.1 L1201.7,632.6" stroke="#7d7d7d" stroke-width="0.6"/><path d="M1202.8,596.1 L1202.2,627.7" stroke="#7d7d7d" stroke-width="0.6"/><path d="M1204.9,596.0 L1208.6,630.7" stroke="#7d7d7d" stroke-width="0.6"/><path d="M1207.6,596.0 L1205.5,625.5" stroke="#7d7d7d" stroke-width="0.6"/><path d="M1210.9,595.9 L1211.6,626.3" stroke="#7d7d7d" stroke-width="0.6"/><path d="M1214.0,595.8 L1213.4,622.3" stroke="#7d7d7d" stroke-width="0.6"/><path d="M1217.3,595.8 L1221.0,624.5" stroke="#7d7d7d" stroke-width="0.6"/><path d="M1221.1,595.7 L1222.0,623.0" stroke="#7d7d7d" stroke-width="0.6"/><path d="M1224.2,595.6 L1227.3,619.2" stroke="#7d7d7d" stroke-width="0.6"/><path d="M1227.5,595.6 L1229.8,623.0" stroke="#7d7d7d" stroke-width="0.6"/><path d="M1229.8,595.5 L1226.6,619.3" stroke="#7d7d7d" stroke-width="0.6"/><path d="M1233.4,595.5 L1229.9,616.1" stroke="#7d7d7d" stroke-width="0.6"/><path d="M1235.6,595.4 L1234.3,615.9" stroke="#7d7d7d" stroke-width="0.6"/><path d="M1238.4,595.4 L1235.6,614.0" stroke="#7d7d7d" stroke-width="0.6"/><path d="M1241.6,595.3 L1237.8,615.1" stroke="#7d7d7d" stroke-width="0.6"/><polygon points="1114.0,642.0 1134.0,650.0 1134.0,666.0 1114.0,660.0" fill="#4a4946"/><polygon points="1114.0,642.0 1134.0,650.0 1128.0,646.0 1110.0,639.0" fill="#8a8782"/><polygon points="898.8,504.2 1027.0,477.7 1091.1,502.0 1091.1,532.9 1055.8,548.4 1022.6,570.5 985.0,563.9 898.8,526.3" fill="#3d434b"/><polygon points="940.8,519.7 993.9,507.5 1013.8,515.3 1013.8,526.3 962.9,539.6" fill="#5f6266"/><polygon points="974.0,526.3 1004.9,516.4 1013.8,521.9 982.8,532.9" fill="#7b7975"/><polygon points="898.8,526.3 985.0,563.9 1022.6,570.5 1055.8,548.4 1091.1,532.9 1091.1,536.3 1022.6,583.8 985.0,574.9 898.8,532.9" fill="#6a6864"/><polygon points="914.0,509.0 936.0,516.0 936.0,529.0 914.0,522.0" fill="#2aa6ff"/><path d="M914,522 L936,529" stroke="#1674d0" stroke-width="1"/><polygon points="937.0,516.0 966.0,525.0 966.0,540.0 937.0,531.0" fill="#2aa6ff"/><path d="M937,531 L966,540" stroke="#1674d0" stroke-width="1"/><polygon points="966.0,526.0 998.0,518.0 998.0,532.0 966.0,540.0" fill="#2aa6ff"/><path d="M966,540 L998,532" stroke="#1674d0" stroke-width="1"/><polygon points="985.0,536.0 1003.0,541.0 1003.0,553.0 985.0,548.0" fill="#2aa6ff"/><path d="M985,548 L1003,553" stroke="#1674d0" stroke-width="1"/><polygon points="1034.0,515.0 1064.0,523.0 1064.0,538.0 1034.0,530.0" fill="#2aa6ff"/><path d="M1034,530 L1064,538" stroke="#1674d0" stroke-width="1"/><polygon points="1064.0,524.0 1090.0,517.0 1090.0,531.0 1064.0,538.0" fill="#2aa6ff"/><path d="M1064,538 L1090,531" stroke="#1674d0" stroke-width="1"/><polygon points="1002.0,517.0 1032.0,510.0 1032.0,523.0 1002.0,530.0" fill="#2aa6ff"/><path d="M1002,530 L1032,523" stroke="#1674d0" stroke-width="1"/><polygon points="950.0,509.0 985.0,501.0 985.0,510.0 950.0,518.0" fill="#2aa6ff"/><path d="M950,518 L985,510" stroke="#1674d0" stroke-width="1"/><polygon points="1040.0,505.0 1088.0,517.0 1088.0,526.0 1040.0,514.0" fill="#2aa6ff"/><path d="M1040,514 L1088,526" stroke="#1674d0" stroke-width="1"/><path d="M938.6,540.7 L938.6,561.7" stroke="#2196ff" stroke-width="1.5"/><path d="M941.5,541.3 L941.5,562.3" stroke="#2196ff" stroke-width="1.5"/><path d="M944.4,542.0 L944.4,563.0" stroke="#2196ff" stroke-width="1.5"/><path d="M947.3,542.7 L947.3,563.7" stroke="#2196ff" stroke-width="1.5"/><path d="M950.1,543.3 L950.1,564.3" stroke="#2196ff" stroke-width="1.5"/><path d="M953.0,544.0 L953.0,565.0" stroke="#2196ff" stroke-width="1.5"/><path d="M955.9,544.7 L955.9,565.7" stroke="#2196ff" stroke-width="1.5"/><path d="M958.7,545.3 L958.7,566.3" stroke="#2196ff" stroke-width="1.5"/><path d="M961.6,546.0 L961.6,567.0" stroke="#2196ff" stroke-width="1.5"/><polygon points="987.3,552.8 1022.6,536.3 1056.9,548.4 1022.6,568.3" fill="#a8a69e"/><polygon points="987.3,552.8 1004.9,545.1 1033.7,557.3 1022.6,568.3" fill="#86b276"/><polygon points="987.3,552.8 1022.6,568.3 1056.9,548.4 1056.9,551.7 1022.6,572.7 987.3,556.2" fill="#2e3033"/><path d="M937.5,517.5 L937.5,544.0" stroke="#a8aeb5" stroke-width="0.7"/><path d="M962.9,524.1 L962.9,566.1" stroke="#a8aeb5" stroke-width="0.7"/><path d="M985.0,552.8 L985.0,583.8" stroke="#a8aeb5" stroke-width="0.7"/><path d="M998.3,526.3 L998.3,574.9" stroke="#a8aeb5" stroke-width="0.7"/><path d="M1022.6,568.3 L1022.6,601.5" stroke="#a8aeb5" stroke-width="0.7"/><path d="M1040.3,521.9 L1040.3,583.8" stroke="#a8aeb5" stroke-width="0.7"/><path d="M1053.6,515.3 L1053.6,579.4" stroke="#a8aeb5" stroke-width="0.7"/><path d="M1066.8,515.3 L1066.8,548.4" stroke="#a8aeb5" stroke-width="0.7"/><path d="M1077.9,517.5 L1077.9,544.0" stroke="#a8aeb5" stroke-width="0.7"/><path d="M912.1,510.8 L912.1,532.9" stroke="#a8aeb5" stroke-width="0.7"/><path d="M925.4,515.3 L925.4,537.4" stroke="#a8aeb5" stroke-width="0.7"/><polygon points="898.0,500.5 1027.0,474.0 1067.0,486.5 938.0,513.0" fill="#4f4843"/><path d="M898.0,500.5 l40.0,12.5" stroke="#1f8ef8" stroke-width="1.6"/><path d="M903.6,499.3 l40.0,12.5" stroke="#1f8ef8" stroke-width="1.6"/><path d="M909.2,498.2 l40.0,12.5" stroke="#1f8ef8" stroke-width="1.6"/><path d="M914.8,497.0 l40.0,12.5" stroke="#1f8ef8" stroke-width="1.6"/><path d="M920.4,495.9 l40.0,12.5" stroke="#1f8ef8" stroke-width="1.6"/><path d="M926.0,494.7 l40.0,12.5" stroke="#1f8ef8" stroke-width="1.6"/><path d="M931.7,493.6 l40.0,12.5" stroke="#1f8ef8" stroke-width="1.6"/><path d="M937.3,492.4 l40.0,12.5" stroke="#1f8ef8" stroke-width="1.6"/><path d="M942.9,491.3 l40.0,12.5" stroke="#1f8ef8" stroke-width="1.6"/><path d="M948.5,490.1 l40.0,12.5" stroke="#1f8ef8" stroke-width="1.6"/><path d="M954.1,489.0 l40.0,12.5" stroke="#1f8ef8" stroke-width="1.6"/><path d="M959.7,487.8 l40.0,12.5" stroke="#1f8ef8" stroke-width="1.6"/><path d="M965.3,486.7 l40.0,12.5" stroke="#1f8ef8" stroke-width="1.6"/><path d="M970.9,485.5 l40.0,12.5" stroke="#1f8ef8" stroke-width="1.6"/><path d="M976.5,484.4 l40.0,12.5" stroke="#1f8ef8" stroke-width="1.6"/><path d="M982.1,483.2 l40.0,12.5" stroke="#1f8ef8" stroke-width="1.6"/><path d="M987.7,482.1 l40.0,12.5" stroke="#1f8ef8" stroke-width="1.6"/><path d="M993.3,480.9 l40.0,12.5" stroke="#1f8ef8" stroke-width="1.6"/><path d="M999.0,479.8 l40.0,12.5" stroke="#1f8ef8" stroke-width="1.6"/><path d="M1004.6,478.6 l40.0,12.5" stroke="#1f8ef8" stroke-width="1.6"/><path d="M1010.2,477.5 l40.0,12.5" stroke="#1f8ef8" stroke-width="1.6"/><path d="M1015.8,476.3 l40.0,12.5" stroke="#1f8ef8" stroke-width="1.6"/><path d="M1021.4,475.2 l40.0,12.5" stroke="#1f8ef8" stroke-width="1.6"/><path d="M1027.0,474.0 l40.0,12.5" stroke="#1f8ef8" stroke-width="1.6"/><path d="M899.0,512.0 l36,11" stroke="#1f8ef8" stroke-width="1.2"/><path d="M904.7,510.9 l36,11" stroke="#1f8ef8" stroke-width="1.2"/><path d="M910.4,509.8 l36,11" stroke="#1f8ef8" stroke-width="1.2"/><path d="M916.1,508.6 l36,11" stroke="#1f8ef8" stroke-width="1.2"/><path d="M921.8,507.5 l36,11" stroke="#1f8ef8" stroke-width="1.2"/><path d="M927.4,506.4 l36,11" stroke="#1f8ef8" stroke-width="1.2"/><path d="M933.1,505.2 l36,11" stroke="#1f8ef8" stroke-width="1.2"/><path d="M938.8,504.1 l36,11" stroke="#1f8ef8" stroke-width="1.2"/><path d="M944.5,503.0 l36,11" stroke="#1f8ef8" stroke-width="1.2"/><path d="M950.2,501.9 l36,11" stroke="#1f8ef8" stroke-width="1.2"/><path d="M955.9,500.8 l36,11" stroke="#1f8ef8" stroke-width="1.2"/><path d="M961.6,499.6 l36,11" stroke="#1f8ef8" stroke-width="1.2"/><path d="M967.2,498.5 l36,11" stroke="#1f8ef8" stroke-width="1.2"/><path d="M972.9,497.4 l36,11" stroke="#1f8ef8" stroke-width="1.2"/><path d="M978.6,496.2 l36,11" stroke="#1f8ef8" stroke-width="1.2"/><path d="M984.3,495.1 l36,11" stroke="#1f8ef8" stroke-width="1.2"/><path d="M990.0,494.0 l36,11" stroke="#1f8ef8" stroke-width="1.2"/><path d="M942.0,514.0 l30,10" stroke="#b9a58e" stroke-width="0.8"/><path d="M948.1,512.7 l30,10" stroke="#b9a58e" stroke-width="0.8"/><path d="M954.3,511.4 l30,10" stroke="#b9a58e" stroke-width="0.8"/><path d="M960.4,510.1 l30,10" stroke="#b9a58e" stroke-width="0.8"/><path d="M966.6,508.9 l30,10" stroke="#b9a58e" stroke-width="0.8"/><path d="M972.7,507.6 l30,10" stroke="#b9a58e" stroke-width="0.8"/><path d="M978.9,506.3 l30,10" stroke="#b9a58e" stroke-width="0.8"/><path d="M985.0,505.0 l30,10" stroke="#b9a58e" stroke-width="0.8"/><path d="M897.7,500.9 L1027.0,476.6 L1027.0,488.7" fill="none" stroke="#1f8ef8" stroke-width="1.1"/><path d="M897.7,500.9 L897.7,526.3 L937.5,544.0" fill="none" stroke="#1f8ef8" stroke-width="1.1"/><path d="M897.7,519.7 L937.5,537.4 L993.9,524.1" fill="none" stroke="#1f8ef8" stroke-width="1.1"/><path d="M898.8,526.3 L985.0,563.9 L1053.6,548.4 L1091.1,530.7" fill="none" stroke="#1f8ef8" stroke-width="1.1"/><path d="M937.5,518.6 L1027.0,493.2" fill="none" stroke="#1f8ef8" stroke-width="1.1"/><path d="M985.0,563.9 L985.0,552.8 L1056.9,532.9" fill="none" stroke="#1f8ef8" stroke-width="1.1"/><path d="M1022.6,568.3 L1022.6,594.8" fill="none" stroke="#1f8ef8" stroke-width="1.1"/><path d="M1031.5,481.0 L1091.1,499.8 L1091.1,530.7" fill="none" stroke="#1f8ef8" stroke-width="1.1"/><path d="M990.6,504.2 L1088.9,524.1" fill="none" stroke="#1f8ef8" stroke-width="1.1"/><path d="M962.9,539.6 L1018.2,524.1" fill="none" stroke="#1f8ef8" stroke-width="1.1"/><polygon points="1029.3,481.0 1091.1,497.6 1090.0,503.1 1029.3,485.4" fill="#1f90ff"/><path d="M1035.9,488.7 L1011.9,494.7" stroke="#1f8ef8" stroke-width="1.1"/><path d="M1043.5,490.9 L1019.5,496.9" stroke="#1f8ef8" stroke-width="1.1"/><path d="M1051.0,493.2 L1027.0,499.2" stroke="#1f8ef8" stroke-width="1.1"/><path d="M1058.6,495.4 L1034.6,501.4" stroke="#1f8ef8" stroke-width="1.1"/><path d="M1066.2,497.6 L1042.2,503.6" stroke="#1f8ef8" stroke-width="1.1"/><path d="M1073.8,499.8 L1049.8,505.8" stroke="#1f8ef8" stroke-width="1.1"/><path d="M1081.4,502.0 L1057.4,508.0" stroke="#1f8ef8" stroke-width="1.1"/><path d="M1088.9,504.2 L1064.9,510.2" stroke="#1f8ef8" stroke-width="1.1"/><polygon points="982.8,490.9 1004.9,489.8 1004.9,496.5 982.8,497.6" fill="#9a9890"/><path d="M1006,476 L1006,431.5 L1010,432.5" fill="none" stroke="#d6d6d6" stroke-width="1.1"/><path d="M1003,465 L1003,452" stroke="#9aa" stroke-width="0.8"/><polygon points="1052.0,548.0 1172.0,500.0 1284.0,535.0 1283.0,552.0 1250.0,594.0 1192.0,618.0 1132.0,621.0 1095.0,598.0 1056.0,572.0" fill="#2f6194"/><clipPath id="cc"><polygon points="1052.0,548.0 1172.0,500.0 1284.0,535.0 1283.0,552.0 1250.0,594.0 1192.0,618.0 1132.0,621.0 1095.0,598.0 1056.0,572.0"/></clipPath><g clip-path="url(#cc)"><path d="M1040.0,566.0 L1050.4,572.9 L1060.7,579.7 L1071.1,586.3 L1081.4,592.7 L1091.8,599.0 L1102.1,605.1 L1112.5,611.0 L1122.9,616.8 L1133.2,622.4 L1143.6,627.8 L1153.9,633.1 L1164.3,638.2 L1174.6,643.2 L1185.0,648.0" fill="none" stroke="#1d8df7" stroke-width="2.21"/><path d="M1040.0,566.0 L1050.4,575.9 L1060.7,579.7 L1071.1,589.3 L1081.4,592.7 L1091.8,602.0 L1102.1,605.1 L1112.5,614.0 L1122.9,616.8 L1133.2,625.4 L1143.6,627.8 L1153.9,636.1 L1164.3,638.2 L1174.6,646.2 L1185.0,648.0" fill="none" stroke="#2797ff" stroke-width="1.1"/><path d="M1045.5,562.6 L1055.8,569.4 L1066.1,576.1 L1076.4,582.5 L1086.7,588.8 L1097.0,595.0 L1107.3,601.0 L1117.6,606.8 L1127.9,612.5 L1138.2,618.0 L1148.5,623.3 L1158.8,628.5 L1169.1,633.5 L1179.4,638.3 L1189.7,643.0" fill="none" stroke="#1d8df7" stroke-width="2.03"/><path d="M1045.5,562.6 L1055.8,572.4 L1066.1,576.1 L1076.4,585.5 L1086.7,588.8 L1097.0,598.0 L1107.3,601.0 L1117.6,609.8 L1127.9,612.5 L1138.2,621.0 L1148.5,623.3 L1158.8,631.5 L1169.1,633.5 L1179.4,641.3 L1189.7,643.0" fill="none" stroke="#2797ff" stroke-width="1.1"/><path d="M1051.0,559.2 L1061.2,565.9 L1071.5,572.5 L1081.7,578.8 L1092.0,585.0 L1102.2,591.1 L1112.5,597.0 L1122.7,602.7 L1133.0,608.2 L1143.2,613.6 L1153.4,618.8 L1163.7,623.9 L1173.9,628.8 L1184.2,633.5 L1194.4,638.1" fill="none" stroke="#1d8df7" stroke-width="1.70"/><path d="M1051.0,559.2 L1061.2,568.9 L1071.5,572.5 L1081.7,581.8 L1092.0,585.0 L1102.2,594.1 L1112.5,597.0 L1122.7,605.7 L1133.0,608.2 L1143.2,616.6 L1153.4,618.8 L1163.7,626.9 L1173.9,628.8 L1184.2,636.5 L1194.4,638.1" fill="none" stroke="#2797ff" stroke-width="1.1"/><path d="M1056.5,555.9 L1066.7,562.5 L1076.9,568.9 L1087.1,575.2 L1097.2,581.3 L1107.4,587.2 L1117.6,593.0 L1127.8,598.6 L1138.0,604.0 L1148.2,609.3 L1158.4,614.4 L1168.6,619.3 L1178.8,624.1 L1188.9,628.7 L1199.1,633.2" fill="none" stroke="#1d8df7" stroke-width="1.78"/><path d="M1056.5,555.9 L1066.7,565.5 L1076.9,568.9 L1087.1,578.2 L1097.2,581.3 L1107.4,590.2 L1117.6,593.0 L1127.8,601.6 L1138.0,604.0 L1148.2,612.3 L1158.4,614.4 L1168.6,622.3 L1178.8,624.1 L1188.9,631.7 L1199.1,633.2" fill="none" stroke="#2797ff" stroke-width="1.1"/><path d="M1062.0,552.7 L1072.1,559.1 L1082.3,565.4 L1092.4,571.6 L1102.5,577.6 L1112.7,583.4 L1122.8,589.0 L1132.9,594.5 L1143.0,599.8 L1153.2,605.0 L1163.3,610.0 L1173.4,614.8 L1183.6,619.5 L1193.7,624.0 L1203.8,628.3" fill="none" stroke="#1d8df7" stroke-width="1.84"/><path d="M1062.0,552.7 L1072.1,562.1 L1082.3,565.4 L1092.4,574.6 L1102.5,577.6 L1112.7,586.4 L1122.8,589.0 L1132.9,597.5 L1143.0,599.8 L1153.2,608.0 L1163.3,610.0 L1173.4,617.8 L1183.6,619.5 L1193.7,627.0 L1203.8,628.3" fill="none" stroke="#2797ff" stroke-width="1.1"/><path d="M1067.5,549.4 L1077.6,555.8 L1087.6,562.0 L1097.7,568.0 L1107.8,573.9 L1117.9,579.6 L1127.9,585.1 L1138.0,590.5 L1148.1,595.7 L1158.2,600.7 L1168.2,605.6 L1178.3,610.3 L1188.4,614.9 L1198.5,619.3 L1208.5,623.5" fill="none" stroke="#1d8df7" stroke-width="1.85"/><path d="M1067.5,549.4 L1077.6,558.8 L1087.6,562.0 L1097.7,571.0 L1107.8,573.9 L1117.9,582.6 L1127.9,585.1 L1138.0,593.5 L1148.1,595.7 L1158.2,603.7 L1168.2,605.6 L1178.3,613.3 L1188.4,614.9 L1198.5,622.3 L1208.5,623.5" fill="none" stroke="#2797ff" stroke-width="1.1"/><path d="M1073.0,546.2 L1083.0,552.5 L1093.0,558.6 L1103.1,564.5 L1113.1,570.2 L1123.1,575.8 L1133.1,581.2 L1143.1,586.5 L1153.1,591.6 L1163.2,596.5 L1173.2,601.3 L1183.2,605.9 L1193.2,610.4 L1203.2,614.6 L1213.2,618.8" fill="none" stroke="#1d8df7" stroke-width="1.69"/><path d="M1073.0,546.2 L1083.0,555.5 L1093.0,558.6 L1103.1,567.5 L1113.1,570.2 L1123.1,578.8 L1133.1,581.2 L1143.1,589.5 L1153.1,591.6 L1163.2,599.5 L1173.2,601.3 L1183.2,608.9 L1193.2,610.4 L1203.2,617.6 L1213.2,618.8" fill="none" stroke="#2797ff" stroke-width="1.1"/><path d="M1078.5,543.1 L1088.5,549.2 L1098.4,555.2 L1108.4,561.0 L1118.3,566.6 L1128.3,572.1 L1138.3,577.4 L1148.2,582.6 L1158.2,587.5 L1168.2,592.4 L1178.1,597.0 L1188.1,601.5 L1198.0,605.8 L1208.0,610.0 L1218.0,614.0" fill="none" stroke="#1d8df7" stroke-width="2.19"/><path d="M1078.5,543.1 L1088.5,552.2 L1098.4,555.2 L1108.4,564.0 L1118.3,566.6 L1128.3,575.1 L1138.3,577.4 L1148.2,585.6 L1158.2,587.5 L1168.2,595.4 L1178.1,597.0 L1188.1,604.5 L1198.0,605.8 L1208.0,613.0 L1218.0,614.0" fill="none" stroke="#2797ff" stroke-width="1.1"/><path d="M1084.0,540.0 L1093.9,546.0 L1103.8,551.9 L1113.7,557.6 L1123.6,563.1 L1133.5,568.4 L1143.4,573.6 L1153.3,578.7 L1163.2,583.5 L1173.1,588.2 L1183.0,592.8 L1193.0,597.2 L1202.9,601.4 L1212.8,605.4 L1222.7,609.3" fill="none" stroke="#1d8df7" stroke-width="2.30"/><path d="M1084.0,540.0 L1093.9,549.0 L1103.8,551.9 L1113.7,560.6 L1123.6,563.1 L1133.5,571.4 L1143.4,573.6 L1153.3,581.7 L1163.2,583.5 L1173.1,591.2 L1183.0,592.8 L1193.0,600.2 L1202.9,601.4 L1212.8,608.4 L1222.7,609.3" fill="none" stroke="#2797ff" stroke-width="1.1"/><path d="M1089.5,536.9 L1099.3,542.8 L1109.2,548.6 L1119.0,554.1 L1128.9,559.6 L1138.7,564.8 L1148.6,569.9 L1158.4,574.8 L1168.3,579.6 L1178.1,584.2 L1188.0,588.6 L1197.8,592.9 L1207.7,597.0 L1217.5,600.9 L1227.4,604.7" fill="none" stroke="#1d8df7" stroke-width="1.93"/><path d="M1089.5,536.9 L1099.3,545.8 L1109.2,548.6 L1119.0,557.1 L1128.9,559.6 L1138.7,567.8 L1148.6,569.9 L1158.4,577.8 L1168.3,579.6 L1178.1,587.2 L1188.0,588.6 L1197.8,595.9 L1207.7,597.0 L1217.5,603.9 L1227.4,604.7" fill="none" stroke="#2797ff" stroke-width="1.1"/><path d="M1095.0,533.9 L1104.8,539.7 L1114.6,545.3 L1124.4,550.8 L1134.2,556.1 L1144.0,561.2 L1153.7,566.2 L1163.5,571.0 L1173.3,575.6 L1183.1,580.1 L1192.9,584.4 L1202.7,588.6 L1212.5,592.6 L1222.3,596.4 L1232.1,600.1" fill="none" stroke="#1d8df7" stroke-width="1.94"/><path d="M1095.0,533.9 L1104.8,542.7 L1114.6,545.3 L1124.4,553.8 L1134.2,556.1 L1144.0,564.2 L1153.7,566.2 L1163.5,574.0 L1173.3,575.6 L1183.1,583.1 L1192.9,584.4 L1202.7,591.6 L1212.5,592.6 L1222.3,599.4 L1232.1,600.1" fill="none" stroke="#2797ff" stroke-width="1.1"/><path d="M1100.5,530.9 L1110.2,536.6 L1120.0,542.1 L1129.7,547.5 L1139.4,552.7 L1149.2,557.7 L1158.9,562.5 L1168.6,567.2 L1178.4,571.8 L1188.1,576.1 L1197.9,580.3 L1207.6,584.4 L1217.3,588.3 L1227.1,592.0 L1236.8,595.5" fill="none" stroke="#1d8df7" stroke-width="1.66"/><path d="M1100.5,530.9 L1110.2,539.6 L1120.0,542.1 L1129.7,550.5 L1139.4,552.7 L1149.2,560.7 L1158.9,562.5 L1168.6,570.2 L1178.4,571.8 L1188.1,579.1 L1197.9,580.3 L1207.6,587.4 L1217.3,588.3 L1227.1,595.0 L1236.8,595.5" fill="none" stroke="#2797ff" stroke-width="1.1"/><path d="M1106.0,528.0 L1115.7,533.6 L1125.4,539.0 L1135.0,544.2 L1144.7,549.3 L1154.4,554.2 L1164.1,558.9 L1173.8,563.5 L1183.4,567.9 L1193.1,572.2 L1202.8,576.3 L1212.5,580.2 L1222.1,584.0 L1231.8,587.6 L1241.5,591.0" fill="none" stroke="#1d8df7" stroke-width="1.67"/><path d="M1106.0,528.0 L1115.7,536.6 L1125.4,539.0 L1135.0,547.2 L1144.7,549.3 L1154.4,557.2 L1164.1,558.9 L1173.8,566.5 L1183.4,567.9 L1193.1,575.2 L1202.8,576.3 L1212.5,583.2 L1222.1,584.0 L1231.8,590.6 L1241.5,591.0" fill="none" stroke="#2797ff" stroke-width="1.1"/><path d="M1111.5,525.1 L1121.1,530.6 L1130.7,535.8 L1140.4,541.0 L1150.0,545.9 L1159.6,550.7 L1169.2,555.3 L1178.9,559.8 L1188.5,564.1 L1198.1,568.3 L1207.7,572.2 L1217.3,576.1 L1227.0,579.7 L1236.6,583.2 L1246.2,586.5" fill="none" stroke="#1d8df7" stroke-width="1.84"/><path d="M1111.5,525.1 L1121.1,533.6 L1130.7,535.8 L1140.4,544.0 L1150.0,545.9 L1159.6,553.7 L1169.2,555.3 L1178.9,562.8 L1188.5,564.1 L1198.1,571.3 L1207.7,572.2 L1217.3,579.1 L1227.0,579.7 L1236.6,586.2 L1246.2,586.5" fill="none" stroke="#2797ff" stroke-width="1.1"/><path d="M1117.0,522.3 L1126.6,527.6 L1136.1,532.8 L1145.7,537.8 L1155.3,542.6 L1164.8,547.3 L1174.4,551.8 L1184.0,556.2 L1193.5,560.4 L1203.1,564.4 L1212.7,568.3 L1222.2,572.0 L1231.8,575.5 L1241.4,578.9 L1250.9,582.1" fill="none" stroke="#1d8df7" stroke-width="1.79"/><path d="M1117.0,522.3 L1126.6,530.6 L1136.1,532.8 L1145.7,540.8 L1155.3,542.6 L1164.8,550.3 L1174.4,551.8 L1184.0,559.2 L1193.5,560.4 L1203.1,567.4 L1212.7,568.3 L1222.2,575.0 L1231.8,575.5 L1241.4,581.9 L1250.9,582.1" fill="none" stroke="#2797ff" stroke-width="1.1"/><path d="M1122.5,519.4 L1132.0,524.7 L1141.5,529.7 L1151.0,534.6 L1160.5,539.3 L1170.0,543.9 L1179.6,548.3 L1189.1,552.6 L1198.6,556.6 L1208.1,560.6 L1217.6,564.3 L1227.1,567.9 L1236.6,571.3 L1246.1,574.6 L1255.6,577.7" fill="none" stroke="#1d8df7" stroke-width="2.18"/><path d="M1122.5,519.4 L1132.0,527.7 L1141.5,529.7 L1151.0,537.6 L1160.5,539.3 L1170.0,546.9 L1179.6,548.3 L1189.1,555.6 L1198.6,556.6 L1208.1,563.6 L1217.6,564.3 L1227.1,570.9 L1236.6,571.3 L1246.1,577.6 L1255.6,577.7" fill="none" stroke="#2797ff" stroke-width="1.1"/><path d="M1128.0,516.7 L1137.5,521.8 L1146.9,526.7 L1156.4,531.5 L1165.8,536.1 L1175.3,540.6 L1184.7,544.9 L1194.2,549.0 L1203.6,553.0 L1213.1,556.8 L1222.5,560.4 L1232.0,563.9 L1241.4,567.2 L1250.9,570.3 L1260.3,573.3" fill="none" stroke="#1d8df7" stroke-width="1.71"/><path d="M1128.0,516.7 L1137.5,524.8 L1146.9,526.7 L1156.4,534.5 L1165.8,536.1 L1175.3,543.6 L1184.7,544.9 L1194.2,552.0 L1203.6,553.0 L1213.1,559.8 L1222.5,560.4 L1232.0,566.9 L1241.4,567.2 L1250.9,573.3 L1260.3,573.3" fill="none" stroke="#2797ff" stroke-width="1.1"/><path d="M1133.5,513.9 L1142.9,518.9 L1152.3,523.8 L1161.7,528.4 L1171.1,532.9 L1180.5,537.3 L1189.9,541.5 L1199.3,545.5 L1208.7,549.3 L1218.1,553.0 L1227.5,556.5 L1236.9,559.9 L1246.2,563.1 L1255.6,566.1 L1265.0,569.0" fill="none" stroke="#1d8df7" stroke-width="1.62"/><path d="M1133.5,513.9 L1142.9,521.9 L1152.3,523.8 L1161.7,531.4 L1171.1,532.9 L1180.5,540.3 L1189.9,541.5 L1199.3,548.5 L1208.7,549.3 L1218.1,556.0 L1227.5,556.5 L1236.9,562.9 L1246.2,563.1 L1255.6,569.1 L1265.0,569.0" fill="none" stroke="#2797ff" stroke-width="1.1"/><path d="M1139.0,511.2 L1148.3,516.1 L1157.7,520.9 L1167.0,525.4 L1176.4,529.8 L1185.7,534.0 L1195.0,538.1 L1204.4,542.0 L1213.7,545.7 L1223.1,549.3 L1232.4,552.7 L1241.7,556.0 L1251.1,559.1 L1260.4,562.0 L1269.8,564.8" fill="none" stroke="#1d8df7" stroke-width="2.27"/><path d="M1139.0,511.2 L1148.3,519.1 L1157.7,520.9 L1167.0,528.4 L1176.4,529.8 L1185.7,537.0 L1195.0,538.1 L1204.4,545.0 L1213.7,545.7 L1223.1,552.3 L1232.4,552.7 L1241.7,559.0 L1251.1,559.1 L1260.4,565.0 L1269.8,564.8" fill="none" stroke="#2797ff" stroke-width="1.1"/><path d="M1144.5,508.6 L1153.8,513.4 L1163.1,518.0 L1172.3,522.4 L1181.6,526.7 L1190.9,530.8 L1200.2,534.8 L1209.5,538.6 L1218.8,542.2 L1228.0,545.7 L1237.3,549.0 L1246.6,552.1 L1255.9,555.1 L1265.2,557.9 L1274.5,560.5" fill="none" stroke="#1d8df7" stroke-width="1.97"/><path d="M1144.5,508.6 L1153.8,516.4 L1163.1,518.0 L1172.3,525.4 L1181.6,526.7 L1190.9,533.8 L1200.2,534.8 L1209.5,541.6 L1218.8,542.2 L1228.0,548.7 L1237.3,549.0 L1246.6,555.1 L1255.9,555.1 L1265.2,560.9 L1274.5,560.5" fill="none" stroke="#2797ff" stroke-width="1.1"/><path d="M1150.0,506.0 L1159.2,510.7 L1168.5,515.1 L1177.7,519.5 L1186.9,523.6 L1196.1,527.6 L1205.4,531.5 L1214.6,535.2 L1223.8,538.7 L1233.0,542.0 L1242.3,545.2 L1251.5,548.2 L1260.7,551.1 L1269.9,553.8 L1279.2,556.3" fill="none" stroke="#1d8df7" stroke-width="1.70"/><path d="M1150.0,506.0 L1159.2,513.7 L1168.5,515.1 L1177.7,522.5 L1186.9,523.6 L1196.1,530.6 L1205.4,531.5 L1214.6,538.2 L1223.8,538.7 L1233.0,545.0 L1242.3,545.2 L1251.5,551.2 L1260.7,551.1 L1269.9,556.8 L1279.2,556.3" fill="none" stroke="#2797ff" stroke-width="1.1"/><path d="M1155.5,503.4 L1164.7,508.0 L1173.8,512.4 L1183.0,516.6 L1192.2,520.6 L1201.3,524.5 L1210.5,528.2 L1219.7,531.8 L1228.9,535.2 L1238.0,538.5 L1247.2,541.5 L1256.4,544.4 L1265.5,547.2 L1274.7,549.8 L1283.9,552.2" fill="none" stroke="#1d8df7" stroke-width="1.98"/><path d="M1155.5,503.4 L1164.7,511.0 L1173.8,512.4 L1183.0,519.6 L1192.2,520.6 L1201.3,527.5 L1210.5,528.2 L1219.7,534.8 L1228.9,535.2 L1238.0,541.5 L1247.2,541.5 L1256.4,547.4 L1265.5,547.2 L1274.7,552.8 L1283.9,552.2" fill="none" stroke="#2797ff" stroke-width="1.1"/><path d="M1161.0,500.9 L1170.1,505.3 L1179.2,509.6 L1188.3,513.7 L1197.5,517.7 L1206.6,521.4 L1215.7,525.0 L1224.8,528.5 L1233.9,531.8 L1243.0,534.9 L1252.1,537.9 L1261.2,540.7 L1270.4,543.3 L1279.5,545.8 L1288.6,548.1" fill="none" stroke="#1d8df7" stroke-width="1.62"/><path d="M1161.0,500.9 L1170.1,508.3 L1179.2,509.6 L1188.3,516.7 L1197.5,517.7 L1206.6,524.4 L1215.7,525.0 L1224.8,531.5 L1233.9,531.8 L1243.0,537.9 L1252.1,537.9 L1261.2,543.7 L1270.4,543.3 L1279.5,548.8 L1288.6,548.1" fill="none" stroke="#2797ff" stroke-width="1.1"/><path d="M1166.5,498.4 L1175.6,502.8 L1184.6,506.9 L1193.7,510.9 L1202.7,514.7 L1211.8,518.4 L1220.8,521.9 L1229.9,525.2 L1239.0,528.4 L1248.0,531.4 L1257.1,534.3 L1266.1,536.9 L1275.2,539.5 L1284.2,541.8 L1293.3,544.0" fill="none" stroke="#1d8df7" stroke-width="1.97"/><path d="M1166.5,498.4 L1175.6,505.8 L1184.6,506.9 L1193.7,513.9 L1202.7,514.7 L1211.8,521.4 L1220.8,521.9 L1229.9,528.2 L1239.0,528.4 L1248.0,534.4 L1257.1,534.3 L1266.1,539.9 L1275.2,539.5 L1284.2,544.8 L1293.3,544.0" fill="none" stroke="#2797ff" stroke-width="1.1"/><path d="M1172.0,496.0 L1181.0,500.2 L1190.0,504.2 L1199.0,508.1 L1208.0,511.8 L1217.0,515.4 L1226.0,518.8 L1235.0,522.0 L1244.0,525.1 L1253.0,528.0 L1262.0,530.7 L1271.0,533.3 L1280.0,535.7 L1289.0,537.9 L1298.0,540.0" fill="none" stroke="#1d8df7" stroke-width="2.28"/><path d="M1172.0,496.0 L1181.0,503.2 L1190.0,504.2 L1199.0,511.1 L1208.0,511.8 L1217.0,518.4 L1226.0,518.8 L1235.0,525.0 L1244.0,525.1 L1253.0,531.0 L1262.0,530.7 L1271.0,536.3 L1280.0,535.7 L1289.0,540.9 L1298.0,540.0" fill="none" stroke="#2797ff" stroke-width="1.1"/><path d="M1040.0,566.6 L1049.4,560.5 L1058.9,554.1 L1068.3,548.8 L1077.7,543.0 L1087.1,538.7 L1096.6,533.1 L1106.0,528.4 L1115.4,522.8 L1124.9,517.8 L1134.3,514.0 L1143.7,509.8 L1153.1,505.1 L1162.6,500.7 L1172.0,496.5" fill="none" stroke="#2a9cff" stroke-width="1.44"/><path d="M1049.1,571.6 L1058.4,566.1 L1067.8,560.0 L1077.1,553.8 L1086.4,548.2 L1095.8,543.1 L1105.1,537.7 L1114.5,533.2 L1123.8,528.5 L1133.2,522.7 L1142.5,518.6 L1151.8,514.0 L1161.2,509.3 L1170.5,503.8 L1179.9,499.2" fill="none" stroke="#2a9cff" stroke-width="1.14"/><path d="M1058.1,577.5 L1067.4,571.4 L1076.6,566.1 L1085.9,560.6 L1095.2,554.7 L1104.4,548.5 L1113.7,543.3 L1122.9,538.1 L1132.2,531.7 L1141.5,527.4 L1150.7,522.8 L1160.0,517.7 L1169.2,512.9 L1178.5,507.8 L1187.8,502.7" fill="none" stroke="#2a9cff" stroke-width="1.47"/><path d="M1067.2,583.5 L1076.4,578.0 L1085.5,572.1 L1094.7,565.1 L1103.9,559.2 L1113.1,554.2 L1122.2,548.2 L1131.4,541.7 L1140.6,536.2 L1149.8,530.9 L1158.9,526.9 L1168.1,521.7 L1177.3,515.7 L1186.5,511.9 L1195.6,507.5" fill="none" stroke="#2a9cff" stroke-width="1.39"/><path d="M1076.2,589.3 L1085.3,583.1 L1094.4,576.1 L1103.5,569.7 L1112.6,565.1 L1121.7,558.6 L1130.8,552.5 L1139.9,547.4 L1149.0,541.0 L1158.1,536.2 L1167.1,530.8 L1176.2,524.6 L1185.3,519.5 L1194.4,514.6 L1203.5,509.6" fill="none" stroke="#2a9cff" stroke-width="1.35"/><path d="M1085.3,594.7 L1094.3,588.3 L1103.3,581.3 L1112.3,576.2 L1121.3,569.0 L1130.3,563.0 L1139.3,557.2 L1148.3,551.8 L1157.3,545.2 L1166.4,540.3 L1175.4,534.1 L1184.4,528.8 L1193.4,523.5 L1202.4,517.5 L1211.4,513.1" fill="none" stroke="#2a9cff" stroke-width="1.11"/><path d="M1094.4,599.7 L1103.3,594.2 L1112.2,586.5 L1121.1,580.4 L1130.1,574.3 L1139.0,567.7 L1147.9,561.2 L1156.8,555.4 L1165.7,549.5 L1174.7,544.0 L1183.6,537.2 L1192.5,532.4 L1201.4,526.4 L1210.3,521.1 L1219.2,516.7" fill="none" stroke="#2a9cff" stroke-width="1.30"/><path d="M1103.4,605.9 L1112.3,599.2 L1121.1,592.6 L1129.9,585.1 L1138.8,578.8 L1147.6,572.1 L1156.4,565.8 L1165.3,559.8 L1174.1,553.3 L1183.0,547.4 L1191.8,541.5 L1200.6,536.4 L1209.5,530.4 L1218.3,525.2 L1227.1,519.9" fill="none" stroke="#2a9cff" stroke-width="1.16"/><path d="M1112.5,611.1 L1121.2,604.6 L1130.0,597.4 L1138.8,589.3 L1147.5,582.5 L1156.2,576.4 L1165.0,569.2 L1173.8,563.1 L1182.5,556.5 L1191.2,551.3 L1200.0,545.4 L1208.8,539.7 L1217.5,532.7 L1226.2,527.9 L1235.0,522.3" fill="none" stroke="#2a9cff" stroke-width="1.09"/><path d="M1121.6,616.7 L1130.2,609.5 L1138.9,601.1 L1147.6,595.2 L1156.2,587.3 L1164.9,580.7 L1173.6,574.7 L1182.2,567.9 L1190.9,560.4 L1199.5,554.5 L1208.2,548.4 L1216.9,542.0 L1225.5,535.8 L1234.2,530.1 L1242.9,525.0" fill="none" stroke="#2a9cff" stroke-width="1.01"/><path d="M1130.6,621.1 L1139.2,613.4 L1147.8,605.4 L1156.4,598.6 L1164.9,592.0 L1173.5,584.8 L1182.1,577.2 L1190.7,571.9 L1199.3,565.0 L1207.8,558.7 L1216.4,551.0 L1225.0,544.9 L1233.6,538.4 L1242.2,533.6 L1250.8,526.9" fill="none" stroke="#2a9cff" stroke-width="1.08"/><path d="M1139.7,625.7 L1148.2,618.8 L1156.7,611.1 L1165.2,602.8 L1173.7,595.3 L1182.2,589.4 L1190.7,581.8 L1199.2,575.1 L1207.7,567.3 L1216.1,560.6 L1224.6,555.0 L1233.1,548.1 L1241.6,541.3 L1250.1,536.5 L1258.6,529.9" fill="none" stroke="#2a9cff" stroke-width="1.48"/><path d="M1148.8,629.8 L1157.2,623.2 L1165.6,614.3 L1174.0,608.0 L1182.4,599.8 L1190.8,592.3 L1199.2,585.4 L1207.6,578.9 L1216.0,570.9 L1224.4,563.8 L1232.9,557.7 L1241.3,550.7 L1249.7,544.0 L1258.1,537.7 L1266.5,531.3" fill="none" stroke="#2a9cff" stroke-width="1.12"/><path d="M1157.8,634.8 L1166.1,626.7 L1174.5,619.6 L1182.8,611.1 L1191.1,603.8 L1199.4,595.8 L1207.8,588.6 L1216.1,580.9 L1224.4,574.1 L1232.7,566.7 L1241.1,560.9 L1249.4,553.9 L1257.7,546.6 L1266.0,540.6 L1274.4,534.9" fill="none" stroke="#2a9cff" stroke-width="1.06"/><path d="M1166.9,640.0 L1175.1,631.2 L1183.4,623.3 L1191.6,615.9 L1199.8,607.4 L1208.1,599.9 L1216.3,592.6 L1224.6,585.6 L1232.8,577.3 L1241.0,570.9 L1249.3,563.6 L1257.5,556.6 L1265.8,549.4 L1274.0,542.6 L1282.2,535.5" fill="none" stroke="#2a9cff" stroke-width="1.08"/><path d="M1175.9,643.1 L1184.1,635.9 L1192.2,626.9 L1200.4,618.6 L1208.6,610.5 L1216.7,603.9 L1224.9,596.2 L1233.0,588.3 L1241.2,580.2 L1249.3,572.7 L1257.5,565.6 L1265.7,558.7 L1273.8,551.3 L1282.0,544.8 L1290.1,537.8" fill="none" stroke="#2a9cff" stroke-width="1.58"/><path d="M1185.0,648.8 L1193.1,639.6 L1201.1,630.7 L1209.2,623.6 L1217.3,614.4 L1225.4,606.4 L1233.4,598.0 L1241.5,590.8 L1249.6,583.3 L1257.6,575.8 L1265.7,567.9 L1273.8,561.1 L1281.9,553.2 L1289.9,546.5 L1298.0,539.3" fill="none" stroke="#2a9cff" stroke-width="1.24"/><path d="M1048.7,564.8 q-1.2,-3.1 1.0,0.2" fill="none" stroke="#2696ff" stroke-width="1.40"/><path d="M1221.7,561.3 q2.3,-2.4 -2.1,2.9" fill="none" stroke="#2696ff" stroke-width="0.92"/><path d="M1220.0,551.6 q-2.7,-0.7 4.7,0.8" fill="none" stroke="#2696ff" stroke-width="1.39"/><path d="M1165.3,516.4 q0.1,-2.0 4.0,1.8" fill="none" stroke="#2696ff" stroke-width="1.46"/><path d="M1236.6,577.1 q1.1,-1.2 -3.2,-2.8" fill="none" stroke="#2696ff" stroke-width="0.91"/><path d="M1102.1,546.7 q2.0,-1.8 1.5,0.8" fill="none" stroke="#2696ff" stroke-width="1.34"/><path d="M1105.0,529.0 q1.8,-1.0 0.0,0.2" fill="none" stroke="#2696ff" stroke-width="1.33"/><path d="M1154.6,622.3 q-1.5,-3.7 -2.8,1.4" fill="none" stroke="#2696ff" stroke-width="0.96"/><path d="M1265.4,564.9 q-0.0,-2.5 -0.3,1.1" fill="none" stroke="#2696ff" stroke-width="1.41"/><path d="M1207.1,561.3 q-2.5,-3.4 -3.0,1.5" fill="none" stroke="#2696ff" stroke-width="1.04"/><path d="M1116.6,524.3 q-2.6,-2.9 2.1,1.2" fill="none" stroke="#2696ff" stroke-width="1.34"/><path d="M1150.4,583.8 q-0.2,-2.1 -4.6,2.4" fill="none" stroke="#2696ff" stroke-width="0.96"/><path d="M1287.5,540.2 q-2.9,-2.2 3.8,2.8" fill="none" stroke="#2696ff" stroke-width="1.16"/><path d="M1104.8,562.6 q2.7,-3.2 1.0,-2.1" fill="none" stroke="#2696ff" stroke-width="1.22"/><path d="M1182.6,506.7 q1.9,-2.0 4.6,1.2" fill="none" stroke="#2696ff" stroke-width="0.99"/><path d="M1220.7,529.3 q-2.9,-4.0 -0.1,-0.3" fill="none" stroke="#2696ff" stroke-width="1.04"/><path d="M1107.5,584.7 q-1.1,-0.6 -6.0,1.5" fill="none" stroke="#2696ff" stroke-width="1.47"/><path d="M1188.1,629.2 q1.3,-0.4 -2.5,-0.8" fill="none" stroke="#2696ff" stroke-width="1.11"/><path d="M1246.1,525.9 q-0.8,-2.3 -2.7,-2.7" fill="none" stroke="#2696ff" stroke-width="0.88"/><path d="M1187.1,523.5 q2.6,-3.0 -2.8,0.1" fill="none" stroke="#2696ff" stroke-width="0.95"/><path d="M1221.1,602.6 q2.3,-0.8 1.6,2.5" fill="none" stroke="#2696ff" stroke-width="1.55"/><path d="M1209.3,571.8 q-2.7,-1.1 -0.6,1.5" fill="none" stroke="#2696ff" stroke-width="1.32"/><path d="M1084.6,547.7 q2.6,-3.5 -0.3,-0.9" fill="none" stroke="#2696ff" stroke-width="1.04"/><path d="M1265.4,565.0 q-1.4,-1.4 -2.4,0.3" fill="none" stroke="#2696ff" stroke-width="1.12"/><path d="M1085.0,567.0 q-1.8,-0.4 -0.0,-1.7" fill="none" stroke="#2696ff" stroke-width="1.53"/><path d="M1228.3,520.0 q-2.2,-3.2 -4.9,-0.9" fill="none" stroke="#2696ff" stroke-width="0.87"/><path d="M1107.9,569.0 q0.4,-0.5 3.0,-0.5" fill="none" stroke="#2696ff" stroke-width="1.13"/><path d="M1160.1,553.5 q-1.0,-3.8 -2.7,2.8" fill="none" stroke="#2696ff" stroke-width="0.90"/><path d="M1191.7,571.1 q2.2,-3.1 -2.7,-1.5" fill="none" stroke="#2696ff" stroke-width="1.12"/><path d="M1229.1,594.6 q2.1,-0.5 -5.7,-2.8" fill="none" stroke="#2696ff" stroke-width="1.37"/><path d="M1218.8,528.9 q0.5,-4.0 -1.3,2.6" fill="none" stroke="#2696ff" stroke-width="1.46"/><path d="M1278.1,553.2 q-1.5,-3.6 -4.1,0.1" fill="none" stroke="#2696ff" stroke-width="1.35"/><path d="M1256.0,536.0 q0.9,-0.9 -0.5,0.3" fill="none" stroke="#2696ff" stroke-width="0.83"/><path d="M1173.5,524.2 q2.5,-1.4 -2.4,-2.2" fill="none" stroke="#2696ff" stroke-width="1.00"/><path d="M1216.8,562.4 q-2.3,-3.7 0.3,0.5" fill="none" stroke="#2696ff" stroke-width="1.11"/><path d="M1154.1,596.3 q-2.9,-2.8 -0.5,2.8" fill="none" stroke="#2696ff" stroke-width="1.32"/><path d="M1217.6,529.9 q-1.6,-3.0 5.5,1.2" fill="none" stroke="#2696ff" stroke-width="1.05"/><path d="M1114.9,608.7 q1.0,-2.3 -2.9,1.0" fill="none" stroke="#2696ff" stroke-width="1.54"/><path d="M1074.7,551.0 q-1.0,-2.3 2.2,-1.8" fill="none" stroke="#2696ff" stroke-width="1.44"/><path d="M1203.7,543.2 q-1.8,-0.1 -2.3,1.9" fill="none" stroke="#2696ff" stroke-width="0.98"/><path d="M1176.3,607.3 q-1.2,-0.2 -0.1,-1.9" fill="none" stroke="#2696ff" stroke-width="0.98"/><path d="M1186.2,581.5 q2.7,-3.4 -1.3,-1.7" fill="none" stroke="#2696ff" stroke-width="1.58"/><path d="M1066.1,559.4 q-2.6,-2.4 4.8,2.3" fill="none" stroke="#2696ff" stroke-width="1.39"/><path d="M1289.1,538.2 q-1.0,-3.3 5.2,1.5" fill="none" stroke="#2696ff" stroke-width="0.83"/><path d="M1177.8,542.1 q-0.8,-2.7 -4.0,-3.0" fill="none" stroke="#2696ff" stroke-width="1.02"/><path d="M1218.6,604.9 q-2.3,-0.1 -3.5,-0.9" fill="none" stroke="#2696ff" stroke-width="1.46"/><path d="M1204.5,532.6 q-2.7,-2.1 -1.5,2.5" fill="none" stroke="#2696ff" stroke-width="0.95"/><path d="M1211.9,600.3 q-2.8,-2.4 3.7,1.6" fill="none" stroke="#2696ff" stroke-width="0.83"/><path d="M1053.6,569.1 q2.5,-3.0 3.0,2.4" fill="none" stroke="#2696ff" stroke-width="1.07"/><path d="M1209.9,613.8 q0.7,-3.0 2.6,-1.1" fill="none" stroke="#2696ff" stroke-width="1.02"/><path d="M1150.0,630.5 q2.5,-1.5 5.3,-2.9" fill="none" stroke="#2696ff" stroke-width="0.99"/><path d="M1232.8,591.6 q2.7,-2.5 -3.0,-0.4" fill="none" stroke="#2696ff" stroke-width="1.19"/><path d="M1185.8,511.2 q1.8,-1.0 3.9,1.6" fill="none" stroke="#2696ff" stroke-width="1.29"/><path d="M1127.6,566.1 q-0.8,-0.9 -5.1,-1.8" fill="none" stroke="#2696ff" stroke-width="1.40"/><path d="M1081.7,552.1 q-2.8,-1.8 -2.1,2.9" fill="none" stroke="#2696ff" stroke-width="1.51"/><path d="M1203.8,511.6 q-2.5,-3.6 -0.0,1.3" fill="none" stroke="#2696ff" stroke-width="1.16"/><path d="M1129.5,581.8 q0.7,-1.3 3.0,2.1" fill="none" stroke="#2696ff" stroke-width="1.33"/><path d="M1176.0,623.5 q-1.2,-1.7 -1.5,1.4" fill="none" stroke="#2696ff" stroke-width="0.96"/><path d="M1107.1,567.2 q-2.1,-0.5 0.9,-1.0" fill="none" stroke="#2696ff" stroke-width="1.12"/><path d="M1235.0,522.9 q-1.6,-0.8 1.8,2.9" fill="none" stroke="#2696ff" stroke-width="0.88"/><path d="M1214.0,584.5 q2.0,-0.3 -5.5,-1.2" fill="none" stroke="#2696ff" stroke-width="0.90"/><path d="M1202.6,624.1 q0.5,-0.3 -1.5,2.2" fill="none" stroke="#2696ff" stroke-width="1.16"/><path d="M1183.2,604.4 q2.7,-3.6 1.2,0.7" fill="none" stroke="#2696ff" stroke-width="0.97"/><path d="M1108.2,549.0 q-1.8,-3.0 1.2,0.9" fill="none" stroke="#2696ff" stroke-width="0.96"/><path d="M1088.9,595.3 q1.1,-3.3 -2.3,-1.8" fill="none" stroke="#2696ff" stroke-width="1.44"/><path d="M1120.9,529.5 q-2.4,-2.4 0.6,0.8" fill="none" stroke="#2696ff" stroke-width="0.87"/><path d="M1160.3,609.0 q-0.5,-2.9 -2.3,2.7" fill="none" stroke="#2696ff" stroke-width="1.05"/><path d="M1162.7,548.7 q-0.5,-0.5 6.0,-0.8" fill="none" stroke="#2696ff" stroke-width="0.96"/><path d="M1162.8,526.3 q-3.0,-0.4 -0.9,1.9" fill="none" stroke="#2696ff" stroke-width="1.12"/><path d="M1215.6,529.3 q-2.0,-3.9 0.6,0.8" fill="none" stroke="#2696ff" stroke-width="1.53"/><path d="M1140.9,611.5 q-0.8,-2.0 -4.2,-1.3" fill="none" stroke="#2696ff" stroke-width="1.22"/><path d="M1176.0,507.0 q-0.1,-0.8 5.6,-1.8" fill="none" stroke="#2696ff" stroke-width="0.90"/><path d="M1288.5,544.8 q-0.1,-3.8 5.1,-0.7" fill="none" stroke="#2696ff" stroke-width="1.52"/><path d="M1231.7,570.2 q-2.0,-0.9 -3.3,-0.6" fill="none" stroke="#2696ff" stroke-width="1.48"/><path d="M1173.1,517.9 q-1.7,-2.4 0.2,-0.7" fill="none" stroke="#2696ff" stroke-width="0.90"/><path d="M1174.3,602.3 q2.4,-3.8 0.7,1.5" fill="none" stroke="#2696ff" stroke-width="0.83"/><path d="M1165.8,513.3 q0.6,-1.8 1.5,-1.2" fill="none" stroke="#2696ff" stroke-width="1.14"/><path d="M1173.9,551.7 q1.0,-2.2 -0.7,-2.9" fill="none" stroke="#2696ff" stroke-width="1.30"/><path d="M1136.5,546.5 q1.6,-0.9 -0.5,-1.9" fill="none" stroke="#2696ff" stroke-width="1.18"/><path d="M1072.5,569.2 q-0.4,-3.6 -0.7,0.1" fill="none" stroke="#2696ff" stroke-width="0.83"/><path d="M1134.9,524.6 q1.4,-0.9 0.1,-2.7" fill="none" stroke="#2696ff" stroke-width="1.20"/><path d="M1220.9,601.8 q-2.2,-0.6 6.0,1.4" fill="none" stroke="#2696ff" stroke-width="1.45"/><path d="M1204.3,624.1 q-0.0,-0.2 5.0,-2.0" fill="none" stroke="#2696ff" stroke-width="1.43"/><path d="M1171.2,504.1 q-0.9,-1.0 -4.1,2.4" fill="none" stroke="#2696ff" stroke-width="1.02"/><path d="M1166.3,516.4 q0.0,-0.3 -3.5,-1.4" fill="none" stroke="#2696ff" stroke-width="1.20"/><path d="M1087.2,544.2 q-1.9,-3.4 5.2,1.1" fill="none" stroke="#2696ff" stroke-width="1.52"/><path d="M1173.6,614.5 q-2.3,-1.9 1.6,-0.8" fill="none" stroke="#2696ff" stroke-width="1.50"/><path d="M1191.3,563.4 q2.3,-3.6 5.9,0.8" fill="none" stroke="#2696ff" stroke-width="1.12"/><path d="M1179.7,525.0 q2.9,-1.7 -1.7,1.6" fill="none" stroke="#2696ff" stroke-width="1.15"/><path d="M1168.7,610.9 q-2.7,-0.7 -3.0,0.8" fill="none" stroke="#2696ff" stroke-width="1.59"/><path d="M1206.2,565.3 q-1.1,-4.0 -5.6,-2.1" fill="none" stroke="#2696ff" stroke-width="1.29"/><path d="M1167.2,570.4 q2.4,-3.5 -3.3,0.9" fill="none" stroke="#2696ff" stroke-width="0.82"/><path d="M1091.8,598.5 q-2.4,-2.6 -3.3,0.5" fill="none" stroke="#2696ff" stroke-width="1.27"/><path d="M1155.0,599.8 q-0.2,-3.5 5.2,-1.5" fill="none" stroke="#2696ff" stroke-width="0.92"/><path d="M1144.0,612.0 q2.2,-0.9 -1.2,-1.4" fill="none" stroke="#2696ff" stroke-width="0.81"/><path d="M1199.8,554.4 q-0.9,-1.4 -0.7,2.6" fill="none" stroke="#2696ff" stroke-width="1.39"/><path d="M1199.5,613.3 q-2.7,-1.9 -1.1,-1.6" fill="none" stroke="#2696ff" stroke-width="0.85"/><path d="M1144.4,510.3 q0.3,-0.2 -4.3,-1.8" fill="none" stroke="#2696ff" stroke-width="1.29"/><path d="M1193.8,571.4 q1.9,-3.3 -2.3,-1.2" fill="none" stroke="#2696ff" stroke-width="0.84"/><path d="M1257.7,543.0 q1.3,-4.0 4.1,1.5" fill="none" stroke="#2696ff" stroke-width="1.17"/><path d="M1197.1,540.1 q-1.6,-3.6 -3.2,-2.8" fill="none" stroke="#2696ff" stroke-width="1.07"/><path d="M1229.8,551.9 q2.1,-1.2 -2.8,0.3" fill="none" stroke="#2696ff" stroke-width="1.15"/><path d="M1212.1,540.0 q-1.4,-1.4 5.6,-1.7" fill="none" stroke="#2696ff" stroke-width="1.50"/><path d="M1079.7,589.0 q-1.6,-1.0 5.3,1.5" fill="none" stroke="#2696ff" stroke-width="1.06"/><path d="M1198.3,522.6 q-1.6,-0.4 1.6,1.2" fill="none" stroke="#2696ff" stroke-width="1.33"/><path d="M1228.6,522.2 q2.0,-1.2 4.3,-0.4" fill="none" stroke="#2696ff" stroke-width="1.38"/><path d="M1156.6,545.1 q-1.7,-1.5 -5.1,2.5" fill="none" stroke="#2696ff" stroke-width="0.92"/><path d="M1059.0,574.0 q2.6,-2.6 -4.3,-2.8" fill="none" stroke="#2696ff" stroke-width="0.83"/><path d="M1215.0,554.0 q1.2,-1.1 -5.2,0.5" fill="none" stroke="#2696ff" stroke-width="1.09"/><path d="M1254.0,551.1 q2.3,-3.7 4.4,2.5" fill="none" stroke="#2696ff" stroke-width="1.56"/><path d="M1083.6,576.0 q-2.3,-3.9 4.2,1.9" fill="none" stroke="#2696ff" stroke-width="1.31"/><path d="M1230.6,542.2 q-1.3,-3.6 -4.8,1.5" fill="none" stroke="#2696ff" stroke-width="0.96"/><path d="M1141.0,574.6 q-2.9,-3.0 -2.6,1.3" fill="none" stroke="#2696ff" stroke-width="1.09"/><path d="M1216.3,608.8 q0.0,-0.6 1.4,-2.8" fill="none" stroke="#2696ff" stroke-width="1.13"/><path d="M1203.3,585.9 q-0.9,-1.2 0.5,-1.7" fill="none" stroke="#2696ff" stroke-width="1.49"/><path d="M1169.5,625.4 q-2.0,-4.0 -3.6,1.6" fill="none" stroke="#2696ff" stroke-width="1.58"/><path d="M1111.7,609.8 q-0.1,-0.8 -3.8,-0.0" fill="none" stroke="#2696ff" stroke-width="1.08"/><path d="M1183.5,522.3 q2.7,-2.9 -3.4,1.2" fill="none" stroke="#2696ff" stroke-width="1.20"/><path d="M1145.5,610.4 q-2.5,-0.8 2.4,1.7" fill="none" stroke="#2696ff" stroke-width="1.30"/><path d="M1142.4,569.7 q-0.6,-0.4 -5.0,2.3" fill="none" stroke="#2696ff" stroke-width="0.82"/><path d="M1104.3,572.2 q2.4,-2.0 -1.4,2.3" fill="none" stroke="#2696ff" stroke-width="0.99"/><path d="M1173.3,569.0 q1.5,-1.0 1.8,-0.9" fill="none" stroke="#2696ff" stroke-width="1.06"/><path d="M1180.3,619.8 q1.0,-1.0 -4.0,-0.4" fill="none" stroke="#2696ff" stroke-width="1.42"/><path d="M1133.3,531.9 q-0.2,-0.5 -3.1,-1.9" fill="none" stroke="#2696ff" stroke-width="1.04"/><path d="M1243.9,563.0 q-2.1,-3.4 -3.0,-1.0" fill="none" stroke="#2696ff" stroke-width="1.22"/><path d="M1107.8,581.5 q-1.9,-0.1 2.7,-2.4" fill="none" stroke="#2696ff" stroke-width="1.57"/><path d="M1108.4,591.6 q2.9,-0.8 2.8,-0.4" fill="none" stroke="#2696ff" stroke-width="0.96"/><path d="M1138.4,526.3 q-1.8,-2.4 -5.6,-0.6" fill="none" stroke="#2696ff" stroke-width="1.43"/><path d="M1197.5,546.8 q0.8,-2.1 -4.3,0.6" fill="none" stroke="#2696ff" stroke-width="1.12"/><path d="M1256.7,562.1 q-0.4,-1.7 3.0,-0.5" fill="none" stroke="#2696ff" stroke-width="0.98"/><path d="M1250.9,562.7 q1.6,-1.2 4.2,1.1" fill="none" stroke="#2696ff" stroke-width="1.31"/><path d="M1142.6,555.0 q0.8,-3.6 -1.0,1.7" fill="none" stroke="#2696ff" stroke-width="1.37"/><path d="M1156.4,536.7 q-0.5,-2.2 1.5,-0.5" fill="none" stroke="#2696ff" stroke-width="1.34"/><path d="M1186.1,511.0 q0.9,-0.9 -1.3,-0.1" fill="none" stroke="#2696ff" stroke-width="1.58"/><path d="M1123.4,610.6 q-2.0,-0.9 5.3,0.1" fill="none" stroke="#2696ff" stroke-width="0.88"/><path d="M1188.4,559.4 q1.3,-2.0 1.7,2.0" fill="none" stroke="#2696ff" stroke-width="1.22"/><path d="M1224.2,598.1 q-1.7,-1.3 -1.3,1.6" fill="none" stroke="#2696ff" stroke-width="0.90"/><path d="M1214.8,516.4 q-2.7,-2.9 -1.2,-2.9" fill="none" stroke="#2696ff" stroke-width="1.13"/><path d="M1191.2,583.1 q-0.9,-2.9 -3.3,1.4" fill="none" stroke="#2696ff" stroke-width="1.55"/><path d="M1139.1,542.4 q1.8,-2.4 -3.5,-2.2" fill="none" stroke="#2696ff" stroke-width="1.42"/><path d="M1229.1,543.7 q-0.2,-1.8 -3.3,2.8" fill="none" stroke="#2696ff" stroke-width="1.08"/><path d="M1233.1,568.2 q1.9,-2.1 -2.5,0.3" fill="none" stroke="#2696ff" stroke-width="0.90"/><path d="M1195.9,527.5 q2.1,-2.9 -1.5,-1.5" fill="none" stroke="#2696ff" stroke-width="1.14"/><path d="M1064.9,551.4 q1.3,-2.9 -3.1,-1.2" fill="none" stroke="#2696ff" stroke-width="1.18"/><path d="M1183.8,578.6 q1.0,-2.6 5.1,2.1" fill="none" stroke="#2696ff" stroke-width="0.85"/><path d="M1266.4,553.5 q1.7,-3.4 4.0,0.8" fill="none" stroke="#2696ff" stroke-width="0.81"/><path d="M1179.3,643.4 q0.9,-3.0 -4.8,-2.1" fill="none" stroke="#2696ff" stroke-width="0.99"/><path d="M1187.6,531.4 q-2.1,-0.4 3.5,-2.0" fill="none" stroke="#2696ff" stroke-width="1.51"/><path d="M1224.6,569.3 q1.0,-0.4 3.5,2.0" fill="none" stroke="#2696ff" stroke-width="0.96"/><path d="M1201.4,548.5 q1.5,-2.2 4.6,0.3" fill="none" stroke="#2696ff" stroke-width="1.01"/><path d="M1090.5,559.6 q-0.0,-3.8 -0.4,-2.1" fill="none" stroke="#2696ff" stroke-width="1.19"/><path d="M1178.9,566.1 q2.2,-4.0 4.1,-0.2" fill="none" stroke="#2696ff" stroke-width="1.25"/><path d="M1239.1,566.6 q-0.8,-2.3 5.5,-2.5" fill="none" stroke="#2696ff" stroke-width="1.31"/><path d="M1127.8,520.8 q0.7,-1.3 5.2,-1.0" fill="none" stroke="#2696ff" stroke-width="1.59"/><path d="M1173.0,561.6 q2.4,-3.9 2.6,0.8" fill="none" stroke="#2696ff" stroke-width="1.07"/><path d="M1200.8,526.0 q-0.2,-1.9 3.2,-1.7" fill="none" stroke="#2696ff" stroke-width="1.15"/><path d="M1171.6,574.0 q2.0,-2.8 3.9,-0.6" fill="none" stroke="#2696ff" stroke-width="1.20"/><path d="M1146.7,584.9 q2.8,-1.4 3.5,-1.0" fill="none" stroke="#2696ff" stroke-width="1.05"/><path d="M1161.2,587.8 q0.8,-0.9 -5.5,1.3" fill="none" stroke="#2696ff" stroke-width="1.51"/><path d="M1118.7,528.6 q-1.2,-4.0 -3.7,2.5" fill="none" stroke="#2696ff" stroke-width="1.29"/><path d="M1231.4,564.9 q2.5,-1.6 1.4,0.8" fill="none" stroke="#2696ff" stroke-width="1.36"/><path d="M1209.7,565.3 q-1.7,-1.3 -0.5,1.6" fill="none" stroke="#2696ff" stroke-width="0.88"/><path d="M1069.2,554.9 q1.6,-0.3 1.9,-0.8" fill="none" stroke="#2696ff" stroke-width="1.46"/><path d="M1216.9,542.2 q-1.5,-2.8 -0.9,-1.1" fill="none" stroke="#2696ff" stroke-width="1.14"/><path d="M1248.7,573.1 q-2.7,-1.7 -5.5,-2.3" fill="none" stroke="#2696ff" stroke-width="1.45"/><path d="M1239.1,579.2 q-0.3,-3.9 -1.4,0.6" fill="none" stroke="#2696ff" stroke-width="1.55"/><path d="M1229.5,522.4 q-0.5,-3.6 1.7,-1.7" fill="none" stroke="#2696ff" stroke-width="0.92"/><path d="M1042.7,565.2 q1.1,-3.5 5.6,-2.5" fill="none" stroke="#2696ff" stroke-width="1.50"/><path d="M1059.6,557.3 q1.3,-3.0 2.8,-1.9" fill="none" stroke="#2696ff" stroke-width="0.84"/><path d="M1235.1,550.5 q2.1,-1.1 -5.0,0.8" fill="none" stroke="#2696ff" stroke-width="1.37"/><path d="M1227.8,591.9 q-1.5,-0.1 2.6,-2.9" fill="none" stroke="#2696ff" stroke-width="0.81"/><path d="M1234.3,566.9 q-2.5,-2.8 2.8,-2.0" fill="none" stroke="#2696ff" stroke-width="1.49"/><path d="M1112.3,533.7 q-0.8,-1.7 -0.7,1.1" fill="none" stroke="#2696ff" stroke-width="0.92"/><path d="M1192.4,530.7 q0.9,-1.5 -1.0,-0.7" fill="none" stroke="#2696ff" stroke-width="1.43"/><path d="M1264.4,538.1 q0.4,-2.8 -5.3,2.8" fill="none" stroke="#2696ff" stroke-width="1.36"/><path d="M1192.1,526.7 q0.6,-0.1 4.0,0.6" fill="none" stroke="#2696ff" stroke-width="1.05"/><path d="M1218.1,593.0 q-0.7,-1.3 1.2,2.4" fill="none" stroke="#2696ff" stroke-width="1.45"/><path d="M1077.6,543.9 q-1.4,-2.3 1.0,1.9" fill="none" stroke="#2696ff" stroke-width="1.51"/><path d="M1165.7,631.8 q1.9,-0.5 0.9,-1.4" fill="none" stroke="#2696ff" stroke-width="1.48"/><path d="M1235.3,546.2 q2.5,-2.6 -5.0,0.3" fill="none" stroke="#2696ff" stroke-width="1.44"/><path d="M1172.4,608.8 q2.6,-3.1 1.3,1.1" fill="none" stroke="#2696ff" stroke-width="1.17"/><path d="M1103.2,571.5 q1.5,-0.8 -0.5,-2.5" fill="none" stroke="#2696ff" stroke-width="1.45"/><path d="M1172.3,525.0 q0.5,-0.4 4.6,0.1" fill="none" stroke="#2696ff" stroke-width="1.18"/><path d="M1143.1,535.6 q-1.8,-3.3 2.4,-0.8" fill="none" stroke="#2696ff" stroke-width="1.25"/><path d="M1164.2,573.4 q-2.1,-3.8 6.0,-0.8" fill="none" stroke="#2696ff" stroke-width="0.88"/><path d="M1228.2,567.2 q-2.1,-1.6 -1.9,0.1" fill="none" stroke="#2696ff" stroke-width="0.82"/><path d="M1187.4,643.4 q2.2,-2.1 0.8,-1.4" fill="none" stroke="#2696ff" stroke-width="1.42"/><path d="M1225.8,596.4 q1.6,-0.7 5.6,-1.5" fill="none" stroke="#2696ff" stroke-width="0.83"/><path d="M1092.0,565.8 q-2.5,-3.8 0.7,2.2" fill="none" stroke="#2696ff" stroke-width="1.17"/><path d="M1280.6,542.3 q-2.6,-1.6 -1.2,-2.3" fill="none" stroke="#2696ff" stroke-width="1.57"/><path d="M1153.0,590.4 q0.8,-0.2 2.0,-0.6" fill="none" stroke="#2696ff" stroke-width="1.16"/><path d="M1198.2,627.1 q3.0,-3.1 -5.5,-1.5" fill="none" stroke="#2696ff" stroke-width="1.08"/><path d="M1274.8,546.3 q2.0,-3.8 3.4,1.3" fill="none" stroke="#2696ff" stroke-width="1.32"/><path d="M1177.1,500.2 q-2.1,-1.0 5.3,1.1" fill="none" stroke="#2696ff" stroke-width="1.04"/><path d="M1219.5,569.7 q-2.4,-2.7 -2.9,-2.3" fill="none" stroke="#2696ff" stroke-width="1.19"/><path d="M1096.1,573.4 q-2.1,-1.3 -5.8,1.3" fill="none" stroke="#2696ff" stroke-width="0.96"/><path d="M1178.6,638.9 q-1.7,-0.3 4.4,2.3" fill="none" stroke="#2696ff" stroke-width="0.91"/><path d="M1112.3,539.4 q2.6,-0.6 1.5,-0.3" fill="none" stroke="#2696ff" stroke-width="1.07"/><path d="M1210.4,534.9 q0.8,-3.4 -3.3,-2.7" fill="none" stroke="#2696ff" stroke-width="1.37"/><path d="M1132.5,535.1 q2.2,-2.9 -1.1,-2.1" fill="none" stroke="#2696ff" stroke-width="1.02"/><path d="M1194.0,525.9 q-2.0,-2.0 -2.2,2.4" fill="none" stroke="#2696ff" stroke-width="0.89"/><path d="M1176.4,500.7 q2.4,-1.3 -3.5,-0.1" fill="none" stroke="#2696ff" stroke-width="1.03"/><path d="M1102.3,562.8 q-0.8,-0.0 6.0,2.6" fill="none" stroke="#2696ff" stroke-width="0.88"/><path d="M1203.2,608.4 q-2.7,-1.1 -2.5,2.9" fill="none" stroke="#2696ff" stroke-width="0.81"/><path d="M1190.7,528.7 q-2.2,-4.0 4.0,0.2" fill="none" stroke="#2696ff" stroke-width="0.95"/><path d="M1222.1,593.6 q-1.7,-1.7 -4.3,-1.9" fill="none" stroke="#2696ff" stroke-width="1.42"/><path d="M1159.8,527.1 q-2.5,-3.7 1.3,-0.0" fill="none" stroke="#2696ff" stroke-width="1.02"/><path d="M1153.6,598.8 q1.2,-0.8 1.0,-1.8" fill="none" stroke="#2696ff" stroke-width="0.85"/><path d="M1190.2,538.3 q1.3,-3.8 3.7,-1.0" fill="none" stroke="#2696ff" stroke-width="1.47"/><path d="M1217.5,532.3 q-2.9,-0.4 -0.3,2.2" fill="none" stroke="#2696ff" stroke-width="1.01"/><path d="M1182.2,615.7 q-0.8,-3.3 -1.5,0.6" fill="none" stroke="#2696ff" stroke-width="0.80"/><path d="M1168.9,558.3 q0.1,-3.5 2.6,1.9" fill="none" stroke="#2696ff" stroke-width="1.49"/><path d="M1181.2,593.8 q-0.7,-1.0 -5.3,2.2" fill="none" stroke="#2696ff" stroke-width="1.56"/><path d="M1174.9,564.8 q0.2,-1.9 -5.8,2.8" fill="none" stroke="#2696ff" stroke-width="0.98"/><path d="M1078.6,560.6 q-1.5,-0.7 -5.6,-2.4" fill="none" stroke="#2696ff" stroke-width="1.36"/><path d="M1068.3,552.1 q0.6,-1.7 0.3,1.2" fill="none" stroke="#2696ff" stroke-width="0.88"/><path d="M1246.9,542.1 q-2.7,-3.5 -0.1,0.0" fill="none" stroke="#2696ff" stroke-width="1.02"/><path d="M1114.0,591.4 q-2.2,-1.6 4.3,-2.1" fill="none" stroke="#2696ff" stroke-width="1.26"/><path d="M1160.0,522.5 q2.0,-0.2 -1.3,-0.5" fill="none" stroke="#2696ff" stroke-width="1.47"/><path d="M1162.8,554.6 q2.6,-0.9 -1.9,-1.6" fill="none" stroke="#2696ff" stroke-width="1.07"/><path d="M1231.7,597.1 q1.8,-0.3 3.8,2.1" fill="none" stroke="#2696ff" stroke-width="0.84"/><path d="M1237.8,587.1 q2.6,-3.0 -0.9,0.8" fill="none" stroke="#2696ff" stroke-width="1.09"/><path d="M1119.4,531.2 q-0.4,-2.0 -5.8,-2.2" fill="none" stroke="#2696ff" stroke-width="1.58"/><path d="M1264.5,559.7 q0.8,-0.8 4.6,2.3" fill="none" stroke="#2696ff" stroke-width="0.83"/><path d="M1160.0,536.8 q1.1,-2.9 0.5,2.5" fill="none" stroke="#2696ff" stroke-width="1.30"/><path d="M1146.0,587.9 q-0.4,-0.2 -2.5,-1.2" fill="none" stroke="#2696ff" stroke-width="1.32"/><path d="M1140.7,606.2 q2.7,-1.9 -2.8,-0.2" fill="none" stroke="#2696ff" stroke-width="1.23"/><path d="M1077.2,565.3 q-2.2,-2.8 -1.1,-1.3" fill="none" stroke="#2696ff" stroke-width="0.99"/><path d="M1129.9,605.8 q2.0,-1.6 0.8,0.9" fill="none" stroke="#2696ff" stroke-width="0.96"/><path d="M1194.4,543.1 q0.3,-1.5 -0.4,-1.1" fill="none" stroke="#2696ff" stroke-width="0.99"/><path d="M1141.4,590.1 q-0.7,-1.7 -5.9,-0.9" fill="none" stroke="#2696ff" stroke-width="1.49"/><path d="M1149.7,591.7 q-0.1,-2.9 5.9,-1.2" fill="none" stroke="#2696ff" stroke-width="1.42"/><path d="M1070.4,559.4 q2.2,-2.2 -5.3,-0.7" fill="none" stroke="#2696ff" stroke-width="1.15"/><path d="M1151.4,519.6 q-1.6,-0.2 2.9,-2.1" fill="none" stroke="#2696ff" stroke-width="1.07"/><path d="M1179.9,588.4 q0.7,-0.6 3.9,0.1" fill="none" stroke="#2696ff" stroke-width="1.39"/><path d="M1237.5,555.4 q-0.1,-0.9 2.5,2.5" fill="none" stroke="#2696ff" stroke-width="0.90"/><path d="M1155.5,504.0 q1.6,-1.7 -0.0,2.8" fill="none" stroke="#2696ff" stroke-width="1.26"/><path d="M1202.6,588.4 q2.2,-1.6 -1.4,-0.3" fill="none" stroke="#2696ff" stroke-width="1.17"/><path d="M1173.9,532.3 q-0.7,-1.8 -1.4,-1.1" fill="none" stroke="#2696ff" stroke-width="1.43"/><path d="M1216.5,533.8 q-0.3,-3.3 -2.4,-2.1" fill="none" stroke="#2696ff" stroke-width="1.26"/><path d="M1128.5,528.9 q2.5,-2.7 4.1,2.0" fill="none" stroke="#2696ff" stroke-width="1.57"/><path d="M1127.1,585.3 q2.5,-4.0 -5.4,0.4" fill="none" stroke="#2696ff" stroke-width="1.20"/><path d="M1260.1,539.9 q0.2,-0.0 0.2,0.1" fill="none" stroke="#2696ff" stroke-width="1.35"/><path d="M1140.6,563.6 q0.6,-2.6 5.4,1.1" fill="none" stroke="#2696ff" stroke-width="1.22"/><path d="M1106.6,591.0 q-0.6,-1.8 0.9,2.3" fill="none" stroke="#2696ff" stroke-width="1.57"/><path d="M1164.0,560.8 q0.7,-0.0 -1.9,0.2" fill="none" stroke="#2696ff" stroke-width="1.45"/><path d="M1107.6,579.8 q2.9,-0.7 0.2,-2.3" fill="none" stroke="#2696ff" stroke-width="1.52"/><path d="M1239.3,563.3 q2.9,-0.4 -0.9,-2.1" fill="none" stroke="#2696ff" stroke-width="1.03"/><path d="M1175.8,562.8 q-1.9,-3.3 1.6,0.6" fill="none" stroke="#2696ff" stroke-width="1.08"/><path d="M1251.5,528.2 q-2.7,-2.4 3.5,-1.2" fill="none" stroke="#2696ff" stroke-width="1.35"/><path d="M1084.6,594.0 q2.1,-1.7 2.0,-1.8" fill="none" stroke="#2696ff" stroke-width="1.20"/><path d="M1148.8,543.7 q0.9,-1.9 6.0,0.4" fill="none" stroke="#2696ff" stroke-width="1.13"/><path d="M1078.4,570.5 q1.6,-3.6 -4.8,-2.0" fill="none" stroke="#2696ff" stroke-width="1.22"/><path d="M1228.0,541.5 q1.8,-3.8 -5.9,1.6" fill="none" stroke="#2696ff" stroke-width="1.06"/><path d="M1180.9,536.5 q-2.0,-2.9 -4.8,2.4" fill="none" stroke="#2696ff" stroke-width="1.27"/><path d="M1148.3,573.7 q-0.7,-3.8 4.7,0.5" fill="none" stroke="#2696ff" stroke-width="1.57"/><path d="M1182.8,576.5 q-1.5,-3.8 5.2,2.1" fill="none" stroke="#2696ff" stroke-width="1.05"/><path d="M1263.0,543.4 q-1.2,-1.6 5.5,-0.0" fill="none" stroke="#2696ff" stroke-width="1.56"/><path d="M1126.8,579.0 q1.3,-3.1 -2.3,2.3" fill="none" stroke="#2696ff" stroke-width="1.19"/><path d="M1176.3,524.1 q-2.0,-2.6 -3.8,2.8" fill="none" stroke="#2696ff" stroke-width="1.03"/><path d="M1129.6,532.3 q0.2,-2.5 -1.2,-2.6" fill="none" stroke="#2696ff" stroke-width="0.90"/><path d="M1194.4,527.9 q-1.5,-3.2 -2.6,-1.6" fill="none" stroke="#2696ff" stroke-width="0.83"/><path d="M1172.9,539.8 q-2.1,-1.2 -4.9,-1.4" fill="none" stroke="#2696ff" stroke-width="1.47"/><path d="M1120.1,593.9 q2.0,-0.8 -4.1,-0.9" fill="none" stroke="#2696ff" stroke-width="1.38"/><path d="M1221.9,602.3 q-1.8,-0.2 0.1,-1.6" fill="none" stroke="#2696ff" stroke-width="1.16"/><path d="M1158.0,613.2 q-1.4,-0.4 1.1,-0.8" fill="none" stroke="#2696ff" stroke-width="1.00"/><path d="M1148.6,535.8 q2.2,-3.5 0.2,0.3" fill="none" stroke="#2696ff" stroke-width="1.02"/><path d="M1192.0,533.9 q0.9,-1.7 -2.3,-0.7" fill="none" stroke="#2696ff" stroke-width="0.87"/><path d="M1183.9,617.9 q-1.1,-1.3 -4.7,0.4" fill="none" stroke="#2696ff" stroke-width="1.09"/><path d="M1146.3,550.0 q-2.6,-2.8 -3.3,-2.2" fill="none" stroke="#2696ff" stroke-width="1.37"/><path d="M1133.6,576.4 q2.5,-0.9 4.6,2.2" fill="none" stroke="#2696ff" stroke-width="0.91"/><path d="M1080.6,546.8 q1.1,-1.3 -1.8,-0.5" fill="none" stroke="#2696ff" stroke-width="1.33"/><path d="M1165.0,531.3 q2.1,-2.6 1.5,-1.9" fill="none" stroke="#2696ff" stroke-width="0.89"/><path d="M1254.2,539.0 q1.3,-3.8 -5.5,-2.0" fill="none" stroke="#2696ff" stroke-width="0.96"/><path d="M1133.0,572.9 q-2.8,-2.8 1.7,-1.9" fill="none" stroke="#2696ff" stroke-width="1.47"/><path d="M1211.4,569.6 q-1.5,-2.3 2.2,-0.9" fill="none" stroke="#2696ff" stroke-width="0.80"/><path d="M1250.4,547.8 q-1.3,-3.8 4.2,0.6" fill="none" stroke="#2696ff" stroke-width="0.84"/><path d="M1087.9,556.3 q1.7,-3.2 5.0,1.5" fill="none" stroke="#2696ff" stroke-width="0.87"/><path d="M1183.6,540.5 q1.5,-0.7 -2.6,-2.5" fill="none" stroke="#2696ff" stroke-width="1.56"/><path d="M1223.4,595.7 q1.1,-1.0 4.0,0.8" fill="none" stroke="#2696ff" stroke-width="1.16"/><path d="M1147.7,620.8 q-0.4,-2.0 5.1,-2.2" fill="none" stroke="#2696ff" stroke-width="1.41"/><path d="M1147.1,622.2 q1.8,-3.0 0.6,2.8" fill="none" stroke="#2696ff" stroke-width="1.31"/><path d="M1145.4,543.3 q-2.6,-2.6 -1.1,-1.8" fill="none" stroke="#2696ff" stroke-width="1.05"/><path d="M1158.7,612.6 q1.0,-3.0 -3.1,0.1" fill="none" stroke="#2696ff" stroke-width="1.16"/><path d="M1208.2,519.7 q-1.2,-0.5 -4.3,0.4" fill="none" stroke="#2696ff" stroke-width="1.07"/><path d="M1218.6,539.0 q1.6,-3.3 2.0,0.6" fill="none" stroke="#2696ff" stroke-width="1.17"/><path d="M1249.6,556.4 q-2.3,-2.8 -1.7,-1.8" fill="none" stroke="#2696ff" stroke-width="0.85"/><path d="M1104.6,560.5 q1.2,-2.2 -4.6,-1.1" fill="none" stroke="#2696ff" stroke-width="1.17"/><path d="M1111.1,551.5 q-2.6,-4.0 5.9,1.5" fill="none" stroke="#2696ff" stroke-width="0.87"/><path d="M1263.4,567.3 q0.4,-3.6 -0.1,-0.4" fill="none" stroke="#2696ff" stroke-width="0.95"/><path d="M1112.8,525.6 q2.5,-1.4 1.5,2.6" fill="none" stroke="#2696ff" stroke-width="1.32"/><path d="M1107.7,566.9 q-2.2,-3.9 3.3,2.0" fill="none" stroke="#2696ff" stroke-width="1.04"/><path d="M1154.8,602.7 q2.1,-0.3 -4.0,1.7" fill="none" stroke="#2696ff" stroke-width="1.46"/><path d="M1180.7,532.8 q-1.9,-0.7 -2.2,-0.8" fill="none" stroke="#2696ff" stroke-width="1.24"/><path d="M1203.5,596.1 q-1.6,-3.8 0.8,0.8" fill="none" stroke="#2696ff" stroke-width="1.46"/><path d="M1252.3,565.4 q2.7,-2.0 -0.0,-2.1" fill="none" stroke="#2696ff" stroke-width="1.04"/><path d="M1127.5,528.4 q1.1,-3.3 -0.7,2.8" fill="none" stroke="#2696ff" stroke-width="0.87"/><path d="M1108.7,602.1 q-1.9,-1.1 -6.0,2.0" fill="none" stroke="#2696ff" stroke-width="1.48"/><path d="M1199.2,535.0 q-1.3,-1.4 0.2,-0.5" fill="none" stroke="#2696ff" stroke-width="1.07"/><path d="M1188.9,579.4 q2.0,-0.4 -4.0,-1.2" fill="none" stroke="#2696ff" stroke-width="1.15"/><path d="M1161.1,548.3 q-1.8,-3.7 -2.1,-0.2" fill="none" stroke="#2696ff" stroke-width="1.58"/><path d="M1270.5,544.3 q2.8,-0.2 1.4,1.9" fill="none" stroke="#2696ff" stroke-width="0.85"/><path d="M1209.8,554.1 q-1.2,-1.7 5.4,-0.1" fill="none" stroke="#2696ff" stroke-width="1.32"/><path d="M1127.4,570.4 q2.3,-3.9 -3.7,1.1" fill="none" stroke="#2696ff" stroke-width="1.16"/><path d="M1145.9,614.7 q-0.8,-1.7 -1.0,0.2" fill="none" stroke="#2696ff" stroke-width="1.25"/><path d="M1108.0,544.7 q-1.9,-0.4 0.6,-2.3" fill="none" stroke="#2696ff" stroke-width="1.49"/><path d="M1086.8,554.2 q0.2,-3.0 -0.1,0.3" fill="none" stroke="#2696ff" stroke-width="0.98"/><path d="M1130.8,531.4 q0.1,-1.6 -5.0,-0.6" fill="none" stroke="#2696ff" stroke-width="0.86"/><path d="M1216.0,590.5 q0.3,-1.1 3.1,-2.3" fill="none" stroke="#2696ff" stroke-width="1.59"/><path d="M1148.7,520.1 q2.0,-2.4 -3.9,2.8" fill="none" stroke="#2696ff" stroke-width="1.25"/><path d="M1160.1,518.7 q1.7,-3.8 -3.2,-0.8" fill="none" stroke="#2696ff" stroke-width="0.81"/><path d="M1146.9,536.9 q-1.2,-1.2 -0.9,2.3" fill="none" stroke="#2696ff" stroke-width="1.30"/><path d="M1227.4,535.1 q2.5,-0.5 -4.0,1.5" fill="none" stroke="#2696ff" stroke-width="1.07"/><path d="M1229.6,549.9 q2.0,-3.5 -1.5,1.4" fill="none" stroke="#2696ff" stroke-width="1.56"/><path d="M1141.0,516.1 q0.6,-3.6 0.6,1.8" fill="none" stroke="#2696ff" stroke-width="0.89"/><path d="M1248.2,535.5 q-1.5,-3.2 -0.6,2.0" fill="none" stroke="#2696ff" stroke-width="1.27"/><path d="M1058.0,558.8 q-2.3,-0.8 -3.8,0.3" fill="none" stroke="#2696ff" stroke-width="1.03"/><path d="M1181.0,540.4 q-2.1,-0.5 0.5,1.1" fill="none" stroke="#2696ff" stroke-width="1.45"/><path d="M1167.0,499.9 q-0.9,-3.4 0.0,2.2" fill="none" stroke="#2696ff" stroke-width="1.44"/><path d="M1071.0,580.2 q1.9,-1.3 -1.3,-0.1" fill="none" stroke="#2696ff" stroke-width="0.93"/><path d="M1202.3,528.7 q2.2,-1.6 -5.1,-1.0" fill="none" stroke="#2696ff" stroke-width="0.97"/><path d="M1233.4,534.5 q-2.7,-3.3 -1.7,-0.2" fill="none" stroke="#2696ff" stroke-width="1.26"/><path d="M1139.9,563.4 q-3.0,-1.7 -2.0,-2.9" fill="none" stroke="#2696ff" stroke-width="1.17"/><path d="M1175.9,499.5 q-2.1,-1.3 -2.7,-1.4" fill="none" stroke="#2696ff" stroke-width="1.20"/><path d="M1154.3,590.2 q0.2,-0.2 5.9,-2.8" fill="none" stroke="#2696ff" stroke-width="1.25"/><path d="M1255.5,557.7 q1.6,-1.5 1.6,-0.8" fill="none" stroke="#2696ff" stroke-width="1.03"/><path d="M1258.4,555.3 q2.6,-1.3 -2.4,1.6" fill="none" stroke="#2696ff" stroke-width="1.39"/><path d="M1193.1,570.9 q-0.9,-1.8 -1.1,-2.6" fill="none" stroke="#2696ff" stroke-width="1.07"/><path d="M1219.9,609.8 q-0.1,-2.5 -3.1,-1.6" fill="none" stroke="#2696ff" stroke-width="1.08"/><path d="M1058.9,555.8 q2.2,-2.2 -0.7,0.4" fill="none" stroke="#2696ff" stroke-width="1.04"/><path d="M1071.7,558.5 q-1.2,-2.8 2.7,0.3" fill="none" stroke="#2696ff" stroke-width="1.55"/><path d="M1212.6,604.3 q0.5,-3.7 -3.9,0.5" fill="none" stroke="#2696ff" stroke-width="1.59"/><path d="M1194.2,594.1 q-0.4,-0.5 -5.2,-0.1" fill="none" stroke="#2696ff" stroke-width="1.52"/><path d="M1112.4,565.8 q-2.9,-3.3 -2.8,1.2" fill="none" stroke="#2696ff" stroke-width="0.97"/><path d="M1120.3,551.1 q0.6,-0.5 1.8,-1.8" fill="none" stroke="#2696ff" stroke-width="1.39"/><path d="M1243.3,529.3 q-2.5,-0.8 4.5,-1.0" fill="none" stroke="#2696ff" stroke-width="0.91"/><path d="M1140.8,595.2 q2.3,-1.4 5.1,-1.7" fill="none" stroke="#2696ff" stroke-width="1.06"/><path d="M1223.8,549.7 q-0.6,-1.3 -1.9,-2.7" fill="none" stroke="#2696ff" stroke-width="1.13"/><path d="M1136.3,616.3 q-1.0,-2.0 1.2,-1.5" fill="none" stroke="#2696ff" stroke-width="1.17"/><path d="M1175.7,641.4 q0.4,-0.0 -5.3,0.7" fill="none" stroke="#2696ff" stroke-width="1.38"/><path d="M1096.4,548.2 q-2.1,-3.4 3.2,-2.5" fill="none" stroke="#2696ff" stroke-width="1.45"/><path d="M1169.6,572.9 q0.5,-1.8 1.9,0.6" fill="none" stroke="#2696ff" stroke-width="1.06"/><path d="M1171.6,528.8 q1.3,-0.9 3.3,-1.1" fill="none" stroke="#2696ff" stroke-width="1.42"/><path d="M1226.3,521.6 q-1.3,-1.9 5.3,-2.2" fill="none" stroke="#2696ff" stroke-width="0.81"/><path d="M1191.9,575.2 q1.6,-2.6 5.9,-1.6" fill="none" stroke="#2696ff" stroke-width="1.41"/><path d="M1055.9,561.4 q-2.2,-3.8 0.0,0.3" fill="none" stroke="#2696ff" stroke-width="0.95"/><path d="M1210.5,520.2 q-2.1,-3.3 2.9,2.5" fill="none" stroke="#2696ff" stroke-width="0.93"/><path d="M1156.2,629.3 q-1.5,-0.1 -0.0,0.8" fill="none" stroke="#2696ff" stroke-width="1.08"/><path d="M1205.4,535.8 q-1.1,-0.4 -4.7,1.4" fill="none" stroke="#2696ff" stroke-width="0.85"/><path d="M1178.5,545.0 q2.2,-3.8 0.8,-0.5" fill="none" stroke="#2696ff" stroke-width="1.54"/><path d="M1244.4,531.9 q-1.7,-3.0 -2.9,-0.4" fill="none" stroke="#2696ff" stroke-width="0.99"/><path d="M1174.0,609.1 q0.9,-2.8 5.9,-1.7" fill="none" stroke="#2696ff" stroke-width="1.26"/><path d="M1183.3,621.0 q2.2,-2.9 3.0,1.9" fill="none" stroke="#2696ff" stroke-width="1.03"/><path d="M1151.1,577.8 q2.3,-3.4 2.2,0.6" fill="none" stroke="#2696ff" stroke-width="1.16"/><path d="M1234.8,577.1 q-1.7,-0.5 -1.7,1.7" fill="none" stroke="#2696ff" stroke-width="1.49"/><path d="M1186.3,618.2 q3.0,-2.8 -5.7,-2.3" fill="none" stroke="#2696ff" stroke-width="1.58"/><path d="M1173.3,640.9 q-2.1,-1.1 -4.8,-2.0" fill="none" stroke="#2696ff" stroke-width="1.35"/><path d="M1100.6,589.0 q2.5,-1.1 4.6,2.9" fill="none" stroke="#2696ff" stroke-width="0.83"/><path d="M1182.3,607.9 q1.1,-3.8 0.1,-1.6" fill="none" stroke="#2696ff" stroke-width="1.14"/><path d="M1056.7,559.4 q2.9,-2.7 4.5,-2.3" fill="none" stroke="#2696ff" stroke-width="1.19"/><path d="M1119.0,591.9 q-1.9,-1.3 -4.2,1.4" fill="none" stroke="#2696ff" stroke-width="1.20"/><path d="M1105.3,588.1 q-0.0,-0.3 -1.8,-1.7" fill="none" stroke="#2696ff" stroke-width="1.57"/><path d="M1250.4,541.5 q-1.4,-3.3 -2.8,-2.6" fill="none" stroke="#2696ff" stroke-width="0.83"/><path d="M1162.4,556.8 q0.3,-2.5 -5.9,1.1" fill="none" stroke="#2696ff" stroke-width="1.32"/><path d="M1185.7,562.6 q1.1,-0.1 4.5,1.3" fill="none" stroke="#2696ff" stroke-width="1.12"/><path d="M1140.3,574.3 q2.8,-2.5 -1.4,-0.5" fill="none" stroke="#2696ff" stroke-width="0.91"/><path d="M1172.4,496.4 q0.6,-0.3 -2.9,0.7" fill="none" stroke="#2696ff" stroke-width="1.10"/><path d="M1099.6,564.0 q-2.3,-0.6 3.4,2.5" fill="none" stroke="#2696ff" stroke-width="0.84"/><path d="M1174.4,536.4 q0.9,-1.8 -2.2,2.8" fill="none" stroke="#2696ff" stroke-width="0.80"/><path d="M1250.2,559.3 q0.1,-1.6 5.9,-1.6" fill="none" stroke="#2696ff" stroke-width="1.30"/><path d="M1187.7,535.8 q1.3,-2.4 0.3,0.7" fill="none" stroke="#2696ff" stroke-width="1.34"/><path d="M1169.9,588.4 q0.3,-3.1 1.4,-1.4" fill="none" stroke="#2696ff" stroke-width="1.53"/><path d="M1200.6,579.3 q0.1,-2.1 -3.3,-2.1" fill="none" stroke="#2696ff" stroke-width="1.54"/><path d="M1180.5,562.4 q0.2,-0.7 -3.1,-2.0" fill="none" stroke="#2696ff" stroke-width="1.46"/><path d="M1188.0,575.8 q2.0,-0.4 4.4,-2.7" fill="none" stroke="#2696ff" stroke-width="1.11"/><path d="M1255.5,549.7 q-2.3,-3.4 -3.0,-2.4" fill="none" stroke="#2696ff" stroke-width="1.09"/><path d="M1213.7,538.7 q-0.3,-3.6 -1.3,3.0" fill="none" stroke="#2696ff" stroke-width="1.36"/><path d="M1164.6,566.6 q1.8,-1.0 -4.2,1.1" fill="none" stroke="#2696ff" stroke-width="1.09"/><path d="M1140.8,544.2 q-0.8,-2.6 -1.4,-2.9" fill="none" stroke="#2696ff" stroke-width="0.96"/><path d="M1123.1,527.5 q-1.9,-1.1 -2.7,-1.1" fill="none" stroke="#2696ff" stroke-width="0.99"/></g><path d="M1056,572 L1095,598 L1132,621 L1192,618 L1250,594 L1283,552" fill="none" stroke="#1e8ff8" stroke-width="2"/><path d="M1052,548 L1172,500 L1284,535" fill="none" stroke="#2a9cff" stroke-width="1.3"/><path d="M1191,623 L1219,639" stroke="#1f90ff" stroke-width="5.5" stroke-linecap="round"/><path d="M1191,623 L1219,639" stroke="#49b0ff" stroke-width="1.5"/><polygon points="1192.0,610.0 1202.0,605.0 1206.0,611.0 1196.0,616.0" fill="#e6e6e6"/></svg>
<div class="t" style="left:848px;top:673.5px;font-size:6px;font-weight:bold;color:#fff;transform:translateY(-50%) scaleX(0.900);transform-origin:0 50%">ModelNo</div>
<div class="a" style="left:872.5px;top:668.5px;width:43.7px;height:9.7px;background:#2a2d33"></div>
<div class="t" style="left:874.2px;top:673.5px;font-size:6px;color:#ddd">0</div>
<div class="t" style="left:848px;top:684.4px;font-size:6.16px;color:#ddd;transform:translateY(-50%) scaleX(0.875);transform-origin:0 50%">가상시공</div>
<svg style="left:0;top:0" width="1" height="1"><path d="M874.5,682.2 L878,684.4 L874.5,686.6z" fill="#fff"/></svg>
<div class="t" style="left:849.4px;top:696.2px;font-size:6.5px;color:#eee;transform:translateY(-50%) scaleX(0.977);transform-origin:0 50%">2024-04-09</div>
<div class="a" style="left:885.5px;top:693.6px;width:5px;height:5px;border:0.8px solid #ddd;border-top-width:1.4px"></div>
<div class="a" style="left:894px;top:692.8px;width:6px;height:6px;background:#1a7ff0;border-radius:1px"></div>
<svg style="left:0;top:0" width="1" height="1"><path d="M895.2,695.8 L896.6,697.2 L899,694" fill="none" stroke="#fff" stroke-width="0.9"/></svg>
<div class="t" style="left:901.6px;top:696.2px;font-size:6.16px;color:#eee;transform:translateY(-50%) scaleX(0.854);transform-origin:0 50%">계획공정</div>
<div class="a" style="left:848px;top:707.3px;width:193.5px;height:1.5px;background:#6c7078;border-radius:1px"></div>
<div class="a" style="left:848px;top:707.3px;width:50px;height:1.5px;background:#2f6aa8"></div>
<svg style="left:0;top:0" width="1" height="1"><circle cx="898.5" cy="708" r="3.3" fill="#1a80f0"/></svg>
<div class="a" style="left:1256.2px;top:689px;width:5.6px;height:5.6px;border:0.7px solid #777;background:#2c2f35"></div>
<div class="t" style="left:1263.8px;top:691.9px;font-size:5.60px;color:#18b4e8;font-weight:bold;transform:translateY(-50%) scaleX(0.783);transform-origin:0 50%">선택</div>
<div class="a" style="left:1275.3px;top:689px;width:5.6px;height:5.6px;border:0.7px solid #777;background:#2c2f35"></div>
<div class="t" style="left:1282.9px;top:691.9px;font-size:5.60px;color:#22c55e;font-weight:bold;transform:translateY(-50%) scaleX(0.783);transform-origin:0 50%">완료</div>
<div class="a" style="left:1256.2px;top:700.4px;width:5.6px;height:5.6px;border:0.7px solid #777;background:#2c2f35"></div>
<div class="t" style="left:1263.8px;top:703.3px;font-size:5.60px;color:#f0e020;font-weight:bold;transform:translateY(-50%) scaleX(0.783);transform-origin:0 50%">예정</div>
<div class="a" style="left:1275.3px;top:700.4px;width:5.6px;height:5.6px;border:0.7px solid #777;background:#2c2f35"></div>
<div class="t" style="left:1282.9px;top:703.3px;font-size:5.60px;color:#e04040;font-weight:bold;transform:translateY(-50%) scaleX(0.783);transform-origin:0 50%">지연</div>
<div class="a" style="left:255px;top:223px;width:102px;height:501px;background:#04569f"></div>
<div class="a" style="left:255px;top:248px;width:102px;height:1px;background:#084c90"></div>
<svg style="left:260.6px;top:231.7px" width="9" height="9"><rect x="0" y="0" width="9" height="9" rx="0.8" fill="#fff"/><circle cx="2.6999999999999997" cy="2.6999999999999997" r="1.08" fill="#0a3f78"/><circle cx="6.3" cy="2.6999999999999997" r="1.08" fill="#0a3f78"/><circle cx="2.6999999999999997" cy="6.3" r="1.08" fill="#0a3f78"/><circle cx="6.3" cy="6.3" r="1.08" fill="#0a3f78"/></svg>
<div class="t" style="left:272.8px;top:235.8px;color:#fff;font-size:8.4px;font-weight:bold;transform:translateY(-50%) scaleX(0.871);transform-origin:0 50%">Smart CM Platform*</div>
<div class="t" style="left:271px;top:260.5px;color:#fff;font-size:8.2px;font-weight:bold;transform:translateY(-50%) scaleX(0.823);transform-origin:0 50%">Dashboard</div>
<svg style="left:0;top:0" width="1" height="1"><circle cx="263" cy="260.5" r="3.6" fill="none" stroke="#d7e5f5" stroke-width="0.9"/><path d="M263,258.5 L263,260.5 L264.8,261.7" fill="none" stroke="#d7e5f5" stroke-width="0.9"/></svg>
<svg style="left:0;top:0" width="1" height="1"><path d="M341.4,258.2 L344.4,261.2 L347.4,258.2" fill="none" stroke="#cfe0f2" stroke-width="0.9"/></svg>
<div class="t" style="left:271px;top:282.5px;color:#fff;font-size:9.18px;font-weight:bold;transform:translateY(-50%) scaleX(0.694);transform-origin:0 50%">공사관리</div>
<svg style="left:0;top:0" width="1" height="1"><path d="M263,279.0 L263,283.5 M259.8,286.0 L259.8,283.0 L266.2,283.0 L266.2,286.0 M263,283.5 L263,286.0" fill="none" stroke="#d7e5f5" stroke-width="0.9"/></svg>
<svg style="left:0;top:0" width="1" height="1"><path d="M341.4,280.2 L344.4,283.2 L347.4,280.2" fill="none" stroke="#cfe0f2" stroke-width="0.9"/></svg>
<div class="t" style="left:271px;top:304.5px;color:#fff;font-size:9.18px;font-weight:bold;transform:translateY(-50%) scaleX(0.694);transform-origin:0 50%">도면관리</div>
<svg style="left:0;top:0" width="1" height="1"><circle cx="263" cy="304.5" r="3.6" fill="none" stroke="#d7e5f5" stroke-width="0.9"/><circle cx="263" cy="304.5" r="1.2" fill="#d7e5f5"/></svg>
<svg style="left:0;top:0" width="1" height="1"><path d="M341.4,302.2 L344.4,305.2 L347.4,302.2" fill="none" stroke="#cfe0f2" stroke-width="0.9"/></svg>
<div class="a" style="left:255px;top:315px;width:102px;height:22px;background:#06192f"></div>
<div class="t" style="left:271px;top:326.5px;color:#fff;font-size:9.18px;font-weight:bold;transform:translateY(-50%) scaleX(0.694);transform-origin:0 50%">공정관리</div>
<svg style="left:0;top:0" width="1" height="1"><rect x="260" y="322.5" width="6" height="8" rx="0.8" fill="none" stroke="#8a9bb0" stroke-width="0.9"/><path d="M261.5,325.5 h3 M261.5,327.5 h3" stroke="#8a9bb0" stroke-width="0.7"/></svg>
<svg style="left:0;top:0" width="1" height="1"><path d="M341.4,327.2 L344.4,324.2 L347.4,327.2" fill="none" stroke="#cfe0f2" stroke-width="0.9"/></svg>
<div class="a" style="left:255px;top:337px;width:102px;height:109.10000000000001px;background:#0a4687"></div>
<div class="t" style="left:270.8px;top:346px;color:#fff;font-size:7.84px;font-weight:bold;transform:translateY(-50%) scaleX(0.675);transform-origin:0 50%">WBS 등록</div>
<div class="t" style="left:270.8px;top:361.3px;color:#fff;font-size:7.84px;font-weight:bold;transform:translateY(-50%) scaleX(0.681);transform-origin:0 50%">공정실적</div>
<div class="t" style="left:270.8px;top:376.6px;color:#fff;font-size:7.84px;font-weight:bold;transform:translateY(-50%) scaleX(0.685);transform-origin:0 50%">공정율 차트</div>
<div class="t" style="left:270.8px;top:391.90000000000003px;color:#fff;font-size:7.84px;font-weight:bold;transform:translateY(-50%) scaleX(0.681);transform-origin:0 50%">공정실적현황</div>
<div class="a" style="left:255px;top:399.7px;width:102px;height:15.3px;background:#0a3568"></div>
<div class="t" style="left:270.8px;top:407.20000000000005px;color:#fff;font-size:7.84px;font-weight:bold;transform:translateY(-50%) scaleX(0.686);transform-origin:0 50%">공정율 라인차트</div>
<div class="t" style="left:270.8px;top:422.50000000000006px;color:#fff;font-size:7.84px;font-weight:bold;transform:translateY(-50%) scaleX(0.719);transform-origin:0 50%">물량처리계획,실적</div>
<div class="t" style="left:270.8px;top:437.80000000000007px;color:#fff;font-size:7.84px;font-weight:bold;transform:translateY(-50%) scaleX(0.726);transform-origin:0 50%">3D모델</div>
<div class="t" style="left:271px;top:457.6px;color:#fff;font-size:9.18px;font-weight:bold;transform:translateY(-50%) scaleX(0.694);transform-origin:0 50%">문서관리</div>
<svg style="left:0;top:0" width="1" height="1"><path d="M259.5,455.1 h6 v3.5 h-4 l-2,1.8 z" fill="none" stroke="#d7e5f5" stroke-width="0.8"/></svg>
<svg style="left:0;top:0" width="1" height="1"><path d="M341.4,455.3 L344.4,458.3 L347.4,455.3" fill="none" stroke="#cfe0f2" stroke-width="0.9"/></svg>
<div class="t" style="left:271px;top:479.6px;color:#fff;font-size:9.18px;font-weight:bold;transform:translateY(-50%) scaleX(0.713);transform-origin:0 50%">프로젝트관리N</div>
<svg style="left:0;top:0" width="1" height="1"><rect x="259.5" y="476.8" width="7" height="4.6" fill="none" stroke="#d7e5f5" stroke-width="0.8"/><path d="M261.5,482.6 h3" stroke="#d7e5f5" stroke-width="0.8"/></svg>
<svg style="left:0;top:0" width="1" height="1"><path d="M341.4,477.3 L344.4,480.3 L347.4,477.3" fill="none" stroke="#cfe0f2" stroke-width="0.9"/></svg>
<div class="t" style="left:271px;top:501.6px;color:#fff;font-size:9.18px;font-weight:bold;transform:translateY(-50%) scaleX(0.707);transform-origin:0 50%">회사관리자N</div>
<svg style="left:0;top:0" width="1" height="1"><path d="M263,505.40000000000003 C260,501.6 260,497.8 263,497.8 C266,497.8 266,501.6 263,505.40000000000003z" fill="none" stroke="#d7e5f5" stroke-width="0.8"/></svg>
<svg style="left:0;top:0" width="1" height="1"><path d="M341.4,499.3 L344.4,502.3 L347.4,499.3" fill="none" stroke="#cfe0f2" stroke-width="0.9"/></svg></body></html>
